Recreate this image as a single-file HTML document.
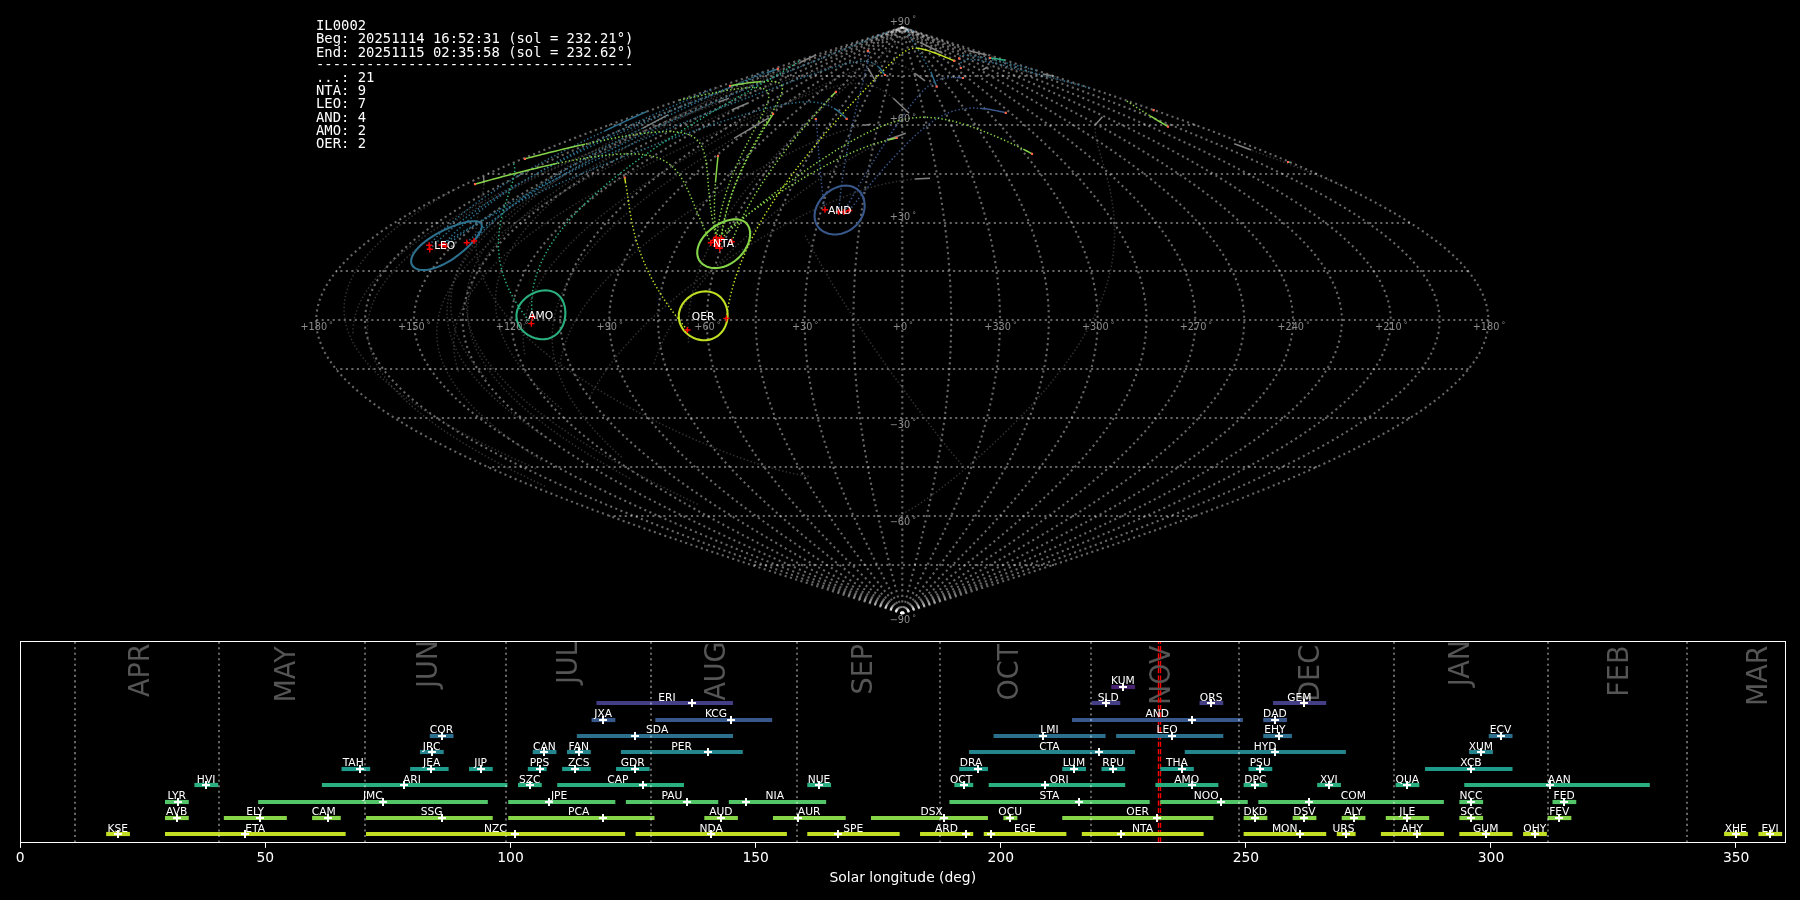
<!DOCTYPE html>
<html><head><meta charset="utf-8"><title>IL0002 radiants</title>
<style>html,body{margin:0;padding:0;background:#000;}svg{display:block;will-change:transform;}</style></head>
<body><svg width="1800" height="900" viewBox="0 0 1800 900">
<rect width="1800" height="900" fill="#000"/>
<g fill="none" stroke="#ffffff" stroke-opacity="0.4" stroke-width="2.083" stroke-dasharray="2.083 3.437">
<path d="M902.3 613.48 L922.76 606.97 L943.19 600.46 L963.57 593.95 L983.88 587.43 L1004.09 580.92 L1024.17 574.41 L1044.11 567.89 L1063.87 561.38 L1083.44 554.87 L1102.78 548.36 L1121.88 541.84 L1140.72 535.33 L1159.26 528.82 L1177.49 522.3 L1195.38 515.79 L1212.92 509.28 L1230.08 502.76 L1246.84 496.25 L1263.18 489.74 L1279.08 483.22 L1294.52 476.71 L1309.49 470.2 L1323.96 463.69 L1337.91 457.17 L1351.33 450.66 L1364.21 444.15 L1376.52 437.63 L1388.26 431.12 L1399.4 424.61 L1409.94 418.09 L1419.86 411.58 L1429.15 405.07 L1437.79 398.56 L1445.79 392.04 L1453.12 385.53 L1459.78 379.02 L1465.76 372.5 L1471.06 365.99 L1475.66 359.48 L1479.56 352.96 L1482.77 346.45 L1485.26 339.94 L1487.04 333.43 L1488.11 326.91 L1488.47 320.4 L1488.11 313.89 L1487.04 307.37 L1485.26 300.86 L1482.77 294.35 L1479.56 287.83 L1475.66 281.32 L1471.06 274.81 L1465.76 268.3 L1459.78 261.78 L1453.12 255.27 L1445.79 248.76 L1437.79 242.24 L1429.15 235.73 L1419.86 229.22 L1409.94 222.7 L1399.4 216.19 L1388.26 209.68 L1376.52 203.17 L1364.21 196.65 L1351.33 190.14 L1337.91 183.63 L1323.96 177.11 L1309.49 170.6 L1294.52 164.09 L1279.08 157.57 L1263.18 151.06 L1246.84 144.55 L1230.08 138.04 L1212.92 131.52 L1195.38 125.01 L1177.49 118.5 L1159.26 111.98 L1140.72 105.47 L1121.88 98.96 L1102.78 92.44 L1083.44 85.93 L1063.87 79.42 L1044.11 72.91 L1024.17 66.39 L1004.09 59.88 L983.88 53.37 L963.57 46.85 L943.19 40.34 L922.76 33.83 L902.3 27.31"/>
<path d="M902.3 613.48 L921.05 606.97 L939.78 600.46 L958.47 593.95 L977.08 587.43 L995.61 580.92 L1014.02 574.41 L1032.29 567.89 L1050.41 561.38 L1068.34 554.87 L1086.08 548.36 L1103.58 541.84 L1120.85 535.33 L1137.85 528.82 L1154.56 522.3 L1170.96 515.79 L1187.04 509.28 L1202.77 502.76 L1218.13 496.25 L1233.11 489.74 L1247.68 483.22 L1261.84 476.71 L1275.56 470.2 L1288.82 463.69 L1301.61 457.17 L1313.91 450.66 L1325.72 444.15 L1337 437.63 L1347.76 431.12 L1357.98 424.61 L1367.63 418.09 L1376.73 411.58 L1385.24 405.07 L1393.17 398.56 L1400.5 392.04 L1407.22 385.53 L1413.32 379.02 L1418.81 372.5 L1423.66 365.99 L1427.88 359.48 L1431.46 352.96 L1434.39 346.45 L1436.68 339.94 L1438.31 333.43 L1439.3 326.91 L1439.62 320.4 L1439.3 313.89 L1438.31 307.37 L1436.68 300.86 L1434.39 294.35 L1431.46 287.83 L1427.88 281.32 L1423.66 274.81 L1418.81 268.3 L1413.32 261.78 L1407.22 255.27 L1400.5 248.76 L1393.17 242.24 L1385.24 235.73 L1376.73 229.22 L1367.63 222.7 L1357.98 216.19 L1347.76 209.68 L1337 203.17 L1325.72 196.65 L1313.91 190.14 L1301.61 183.63 L1288.82 177.11 L1275.56 170.6 L1261.84 164.09 L1247.68 157.57 L1233.11 151.06 L1218.13 144.55 L1202.77 138.04 L1187.04 131.52 L1170.96 125.01 L1154.56 118.5 L1137.85 111.98 L1120.85 105.47 L1103.58 98.96 L1086.08 92.44 L1068.34 85.93 L1050.41 79.42 L1032.29 72.91 L1014.02 66.39 L995.61 59.88 L977.08 53.37 L958.47 46.85 L939.78 40.34 L921.05 33.83 L902.3 27.31"/>
<path d="M902.3 613.48 L919.35 606.97 L936.37 600.46 L953.36 593.95 L970.28 587.43 L987.12 580.92 L1003.86 574.41 L1020.47 567.89 L1036.94 561.38 L1053.25 554.87 L1069.37 548.36 L1085.29 541.84 L1100.98 535.33 L1116.43 528.82 L1131.63 522.3 L1146.54 515.79 L1161.15 509.28 L1175.45 502.76 L1189.42 496.25 L1203.04 489.74 L1216.29 483.22 L1229.15 476.71 L1241.62 470.2 L1253.68 463.69 L1265.31 457.17 L1276.49 450.66 L1287.22 444.15 L1297.48 437.63 L1307.26 431.12 L1316.55 424.61 L1325.33 418.09 L1333.6 411.58 L1341.34 405.07 L1348.54 398.56 L1355.21 392.04 L1361.32 385.53 L1366.87 379.02 L1371.85 372.5 L1376.27 365.99 L1380.1 359.48 L1383.35 352.96 L1386.02 346.45 L1388.1 339.94 L1389.59 333.43 L1390.48 326.91 L1390.77 320.4 L1390.48 313.89 L1389.59 307.37 L1388.1 300.86 L1386.02 294.35 L1383.35 287.83 L1380.1 281.32 L1376.27 274.81 L1371.85 268.3 L1366.87 261.78 L1361.32 255.27 L1355.21 248.76 L1348.54 242.24 L1341.34 235.73 L1333.6 229.22 L1325.33 222.7 L1316.55 216.19 L1307.26 209.68 L1297.48 203.17 L1287.22 196.65 L1276.49 190.14 L1265.31 183.63 L1253.68 177.11 L1241.62 170.6 L1229.15 164.09 L1216.29 157.57 L1203.04 151.06 L1189.42 144.55 L1175.45 138.04 L1161.15 131.52 L1146.54 125.01 L1131.63 118.5 L1116.43 111.98 L1100.98 105.47 L1085.29 98.96 L1069.37 92.44 L1053.25 85.93 L1036.94 79.42 L1020.47 72.91 L1003.86 66.39 L987.12 59.88 L970.28 53.37 L953.36 46.85 L936.37 40.34 L919.35 33.83 L902.3 27.31"/>
<path d="M902.3 613.48 L917.64 606.97 L932.97 600.46 L948.25 593.95 L963.48 587.43 L978.64 580.92 L993.7 574.41 L1008.66 567.89 L1023.48 561.38 L1038.15 554.87 L1052.66 548.36 L1066.99 541.84 L1081.11 535.33 L1095.02 528.82 L1108.69 522.3 L1122.11 515.79 L1135.27 509.28 L1148.14 502.76 L1160.71 496.25 L1172.96 489.74 L1184.89 483.22 L1196.47 476.71 L1207.69 470.2 L1218.54 463.69 L1229.01 457.17 L1239.07 450.66 L1248.73 444.15 L1257.97 437.63 L1266.77 431.12 L1275.13 424.61 L1283.03 418.09 L1290.47 411.58 L1297.43 405.07 L1303.92 398.56 L1309.92 392.04 L1315.41 385.53 L1320.41 379.02 L1324.9 372.5 L1328.87 365.99 L1332.32 359.48 L1335.25 352.96 L1337.65 346.45 L1339.52 339.94 L1340.86 333.43 L1341.66 326.91 L1341.93 320.4 L1341.66 313.89 L1340.86 307.37 L1339.52 300.86 L1337.65 294.35 L1335.25 287.83 L1332.32 281.32 L1328.87 274.81 L1324.9 268.3 L1320.41 261.78 L1315.41 255.27 L1309.92 248.76 L1303.92 242.24 L1297.43 235.73 L1290.47 229.22 L1283.03 222.7 L1275.13 216.19 L1266.77 209.68 L1257.97 203.17 L1248.73 196.65 L1239.07 190.14 L1229.01 183.63 L1218.54 177.11 L1207.69 170.6 L1196.47 164.09 L1184.89 157.57 L1172.96 151.06 L1160.71 144.55 L1148.14 138.04 L1135.27 131.52 L1122.11 125.01 L1108.69 118.5 L1095.02 111.98 L1081.11 105.47 L1066.99 98.96 L1052.66 92.44 L1038.15 85.93 L1023.48 79.42 L1008.66 72.91 L993.7 66.39 L978.64 59.88 L963.48 53.37 L948.25 46.85 L932.97 40.34 L917.64 33.83 L902.3 27.31"/>
<path d="M902.3 613.48 L915.94 606.97 L929.56 600.46 L943.15 593.95 L956.69 587.43 L970.16 580.92 L983.55 574.41 L996.84 567.89 L1010.01 561.38 L1023.06 554.87 L1035.95 548.36 L1048.69 541.84 L1061.24 535.33 L1073.61 528.82 L1085.76 522.3 L1097.69 515.79 L1109.38 509.28 L1120.82 502.76 L1131.99 496.25 L1142.89 489.74 L1153.49 483.22 L1163.78 476.71 L1173.76 470.2 L1183.4 463.69 L1192.71 457.17 L1201.65 450.66 L1210.24 444.15 L1218.45 437.63 L1226.27 431.12 L1233.7 424.61 L1240.73 418.09 L1247.34 411.58 L1253.53 405.07 L1259.3 398.56 L1264.62 392.04 L1269.51 385.53 L1273.95 379.02 L1277.94 372.5 L1281.47 365.99 L1284.54 359.48 L1287.14 352.96 L1289.28 346.45 L1290.94 339.94 L1292.13 333.43 L1292.84 326.91 L1293.08 320.4 L1292.84 313.89 L1292.13 307.37 L1290.94 300.86 L1289.28 294.35 L1287.14 287.83 L1284.54 281.32 L1281.47 274.81 L1277.94 268.3 L1273.95 261.78 L1269.51 255.27 L1264.62 248.76 L1259.3 242.24 L1253.53 235.73 L1247.34 229.22 L1240.73 222.7 L1233.7 216.19 L1226.27 209.68 L1218.45 203.17 L1210.24 196.65 L1201.65 190.14 L1192.71 183.63 L1183.4 177.11 L1173.76 170.6 L1163.78 164.09 L1153.49 157.57 L1142.89 151.06 L1131.99 144.55 L1120.82 138.04 L1109.38 131.52 L1097.69 125.01 L1085.76 118.5 L1073.61 111.98 L1061.24 105.47 L1048.69 98.96 L1035.95 92.44 L1023.06 85.93 L1010.01 79.42 L996.84 72.91 L983.55 66.39 L970.16 59.88 L956.69 53.37 L943.15 46.85 L929.56 40.34 L915.94 33.83 L902.3 27.31"/>
<path d="M902.3 613.48 L914.23 606.97 L926.15 600.46 L938.04 593.95 L949.89 587.43 L961.68 580.92 L973.39 574.41 L985.02 567.89 L996.55 561.38 L1007.96 554.87 L1019.25 548.36 L1030.39 541.84 L1041.38 535.33 L1052.19 528.82 L1062.83 522.3 L1073.27 515.79 L1083.5 509.28 L1093.51 502.76 L1103.28 496.25 L1112.81 489.74 L1122.09 483.22 L1131.1 476.71 L1139.83 470.2 L1148.27 463.69 L1156.41 457.17 L1164.24 450.66 L1171.75 444.15 L1178.93 437.63 L1185.77 431.12 L1192.28 424.61 L1198.42 418.09 L1204.21 411.58 L1209.63 405.07 L1214.67 398.56 L1219.33 392.04 L1223.61 385.53 L1227.5 379.02 L1230.99 372.5 L1234.08 365.99 L1236.76 359.48 L1239.04 352.96 L1240.9 346.45 L1242.36 339.94 L1243.4 333.43 L1244.02 326.91 L1244.23 320.4 L1244.02 313.89 L1243.4 307.37 L1242.36 300.86 L1240.9 294.35 L1239.04 287.83 L1236.76 281.32 L1234.08 274.81 L1230.99 268.3 L1227.5 261.78 L1223.61 255.27 L1219.33 248.76 L1214.67 242.24 L1209.63 235.73 L1204.21 229.22 L1198.42 222.7 L1192.28 216.19 L1185.77 209.68 L1178.93 203.17 L1171.75 196.65 L1164.24 190.14 L1156.41 183.63 L1148.27 177.11 L1139.83 170.6 L1131.1 164.09 L1122.09 157.57 L1112.81 151.06 L1103.28 144.55 L1093.51 138.04 L1083.5 131.52 L1073.27 125.01 L1062.83 118.5 L1052.19 111.98 L1041.38 105.47 L1030.39 98.96 L1019.25 92.44 L1007.96 85.93 L996.55 79.42 L985.02 72.91 L973.39 66.39 L961.68 59.88 L949.89 53.37 L938.04 46.85 L926.15 40.34 L914.23 33.83 L902.3 27.31"/>
<path d="M902.3 613.48 L912.53 606.97 L922.74 600.46 L932.94 593.95 L943.09 587.43 L953.19 580.92 L963.24 574.41 L973.2 567.89 L983.09 561.38 L992.87 554.87 L1002.54 548.36 L1012.09 541.84 L1021.51 535.33 L1030.78 528.82 L1039.9 522.3 L1048.84 515.79 L1057.61 509.28 L1066.19 502.76 L1074.57 496.25 L1082.74 489.74 L1090.69 483.22 L1098.41 476.71 L1105.89 470.2 L1113.13 463.69 L1120.1 457.17 L1126.82 450.66 L1133.25 444.15 L1139.41 437.63 L1145.28 431.12 L1150.85 424.61 L1156.12 418.09 L1161.08 411.58 L1165.72 405.07 L1170.05 398.56 L1174.04 392.04 L1177.71 385.53 L1181.04 379.02 L1184.03 372.5 L1186.68 365.99 L1188.98 359.48 L1190.93 352.96 L1192.53 346.45 L1193.78 339.94 L1194.67 333.43 L1195.21 326.91 L1195.38 320.4 L1195.21 313.89 L1194.67 307.37 L1193.78 300.86 L1192.53 294.35 L1190.93 287.83 L1188.98 281.32 L1186.68 274.81 L1184.03 268.3 L1181.04 261.78 L1177.71 255.27 L1174.04 248.76 L1170.05 242.24 L1165.72 235.73 L1161.08 229.22 L1156.12 222.7 L1150.85 216.19 L1145.28 209.68 L1139.41 203.17 L1133.25 196.65 L1126.82 190.14 L1120.1 183.63 L1113.13 177.11 L1105.89 170.6 L1098.41 164.09 L1090.69 157.57 L1082.74 151.06 L1074.57 144.55 L1066.19 138.04 L1057.61 131.52 L1048.84 125.01 L1039.9 118.5 L1030.78 111.98 L1021.51 105.47 L1012.09 98.96 L1002.54 92.44 L992.87 85.93 L983.09 79.42 L973.2 72.91 L963.24 66.39 L953.19 59.88 L943.09 53.37 L932.94 46.85 L922.74 40.34 L912.53 33.83 L902.3 27.31"/>
<path d="M902.3 613.48 L910.82 606.97 L919.34 600.46 L927.83 593.95 L936.29 587.43 L944.71 580.92 L953.08 574.41 L961.39 567.89 L969.62 561.38 L977.77 554.87 L985.83 548.36 L993.79 541.84 L1001.64 535.33 L1009.37 528.82 L1016.96 522.3 L1024.42 515.79 L1031.73 509.28 L1038.88 502.76 L1045.86 496.25 L1052.67 489.74 L1059.29 483.22 L1065.73 476.71 L1071.96 470.2 L1077.99 463.69 L1083.8 457.17 L1089.4 450.66 L1094.76 444.15 L1099.89 437.63 L1104.78 431.12 L1109.43 424.61 L1113.82 418.09 L1117.95 411.58 L1121.82 405.07 L1125.42 398.56 L1128.75 392.04 L1131.81 385.53 L1134.58 379.02 L1137.08 372.5 L1139.28 365.99 L1141.2 359.48 L1142.83 352.96 L1144.16 346.45 L1145.2 339.94 L1145.94 333.43 L1146.39 326.91 L1146.54 320.4 L1146.39 313.89 L1145.94 307.37 L1145.2 300.86 L1144.16 294.35 L1142.83 287.83 L1141.2 281.32 L1139.28 274.81 L1137.08 268.3 L1134.58 261.78 L1131.81 255.27 L1128.75 248.76 L1125.42 242.24 L1121.82 235.73 L1117.95 229.22 L1113.82 222.7 L1109.43 216.19 L1104.78 209.68 L1099.89 203.17 L1094.76 196.65 L1089.4 190.14 L1083.8 183.63 L1077.99 177.11 L1071.96 170.6 L1065.73 164.09 L1059.29 157.57 L1052.67 151.06 L1045.86 144.55 L1038.88 138.04 L1031.73 131.52 L1024.42 125.01 L1016.96 118.5 L1009.37 111.98 L1001.64 105.47 L993.79 98.96 L985.83 92.44 L977.77 85.93 L969.62 79.42 L961.39 72.91 L953.08 66.39 L944.71 59.88 L936.29 53.37 L927.83 46.85 L919.34 40.34 L910.82 33.83 L902.3 27.31"/>
<path d="M902.3 613.48 L909.12 606.97 L915.93 600.46 L922.72 593.95 L929.49 587.43 L936.23 580.92 L942.92 574.41 L949.57 567.89 L956.16 561.38 L962.68 554.87 L969.13 548.36 L975.49 541.84 L981.77 535.33 L987.95 528.82 L994.03 522.3 L1000 515.79 L1005.84 509.28 L1011.56 502.76 L1017.15 496.25 L1022.59 489.74 L1027.89 483.22 L1033.04 476.71 L1038.03 470.2 L1042.85 463.69 L1047.5 457.17 L1051.98 450.66 L1056.27 444.15 L1060.37 437.63 L1064.29 431.12 L1068 424.61 L1071.51 418.09 L1074.82 411.58 L1077.92 405.07 L1080.8 398.56 L1083.46 392.04 L1085.91 385.53 L1088.13 379.02 L1090.12 372.5 L1091.89 365.99 L1093.42 359.48 L1094.72 352.96 L1095.79 346.45 L1096.62 339.94 L1097.21 333.43 L1097.57 326.91 L1097.69 320.4 L1097.57 313.89 L1097.21 307.37 L1096.62 300.86 L1095.79 294.35 L1094.72 287.83 L1093.42 281.32 L1091.89 274.81 L1090.12 268.3 L1088.13 261.78 L1085.91 255.27 L1083.46 248.76 L1080.8 242.24 L1077.92 235.73 L1074.82 229.22 L1071.51 222.7 L1068 216.19 L1064.29 209.68 L1060.37 203.17 L1056.27 196.65 L1051.98 190.14 L1047.5 183.63 L1042.85 177.11 L1038.03 170.6 L1033.04 164.09 L1027.89 157.57 L1022.59 151.06 L1017.15 144.55 L1011.56 138.04 L1005.84 131.52 L1000 125.01 L994.03 118.5 L987.95 111.98 L981.77 105.47 L975.49 98.96 L969.13 92.44 L962.68 85.93 L956.16 79.42 L949.57 72.91 L942.92 66.39 L936.23 59.88 L929.49 53.37 L922.72 46.85 L915.93 40.34 L909.12 33.83 L902.3 27.31"/>
<path d="M902.3 613.48 L907.41 606.97 L912.52 600.46 L917.62 593.95 L922.69 587.43 L927.75 580.92 L932.77 574.41 L937.75 567.89 L942.69 561.38 L947.58 554.87 L952.42 548.36 L957.2 541.84 L961.9 535.33 L966.54 528.82 L971.1 522.3 L975.57 515.79 L979.96 509.28 L984.25 502.76 L988.44 496.25 L992.52 489.74 L996.5 483.22 L1000.36 476.71 L1004.1 470.2 L1007.71 463.69 L1011.2 457.17 L1014.56 450.66 L1017.78 444.15 L1020.86 437.63 L1023.79 431.12 L1026.58 424.61 L1029.21 418.09 L1031.69 411.58 L1034.01 405.07 L1036.17 398.56 L1038.17 392.04 L1040 385.53 L1041.67 379.02 L1043.17 372.5 L1044.49 365.99 L1045.64 359.48 L1046.62 352.96 L1047.42 346.45 L1048.04 339.94 L1048.49 333.43 L1048.75 326.91 L1048.84 320.4 L1048.75 313.89 L1048.49 307.37 L1048.04 300.86 L1047.42 294.35 L1046.62 287.83 L1045.64 281.32 L1044.49 274.81 L1043.17 268.3 L1041.67 261.78 L1040 255.27 L1038.17 248.76 L1036.17 242.24 L1034.01 235.73 L1031.69 229.22 L1029.21 222.7 L1026.58 216.19 L1023.79 209.68 L1020.86 203.17 L1017.78 196.65 L1014.56 190.14 L1011.2 183.63 L1007.71 177.11 L1004.1 170.6 L1000.36 164.09 L996.5 157.57 L992.52 151.06 L988.44 144.55 L984.25 138.04 L979.96 131.52 L975.57 125.01 L971.1 118.5 L966.54 111.98 L961.9 105.47 L957.2 98.96 L952.42 92.44 L947.58 85.93 L942.69 79.42 L937.75 72.91 L932.77 66.39 L927.75 59.88 L922.69 53.37 L917.62 46.85 L912.52 40.34 L907.41 33.83 L902.3 27.31"/>
<path d="M902.3 613.48 L905.71 606.97 L909.11 600.46 L912.51 593.95 L915.9 587.43 L919.26 580.92 L922.61 574.41 L925.93 567.89 L929.23 561.38 L932.49 554.87 L935.71 548.36 L938.9 541.84 L942.04 535.33 L945.13 528.82 L948.17 522.3 L951.15 515.79 L954.07 509.28 L956.93 502.76 L959.72 496.25 L962.45 489.74 L965.1 483.22 L967.67 476.71 L970.16 470.2 L972.58 463.69 L974.9 457.17 L977.14 450.66 L979.28 444.15 L981.34 437.63 L983.29 431.12 L985.15 424.61 L986.91 418.09 L988.56 411.58 L990.11 405.07 L991.55 398.56 L992.88 392.04 L994.1 385.53 L995.21 379.02 L996.21 372.5 L997.09 365.99 L997.86 359.48 L998.51 352.96 L999.04 346.45 L999.46 339.94 L999.76 333.43 L999.94 326.91 L999.99 320.4 L999.94 313.89 L999.76 307.37 L999.46 300.86 L999.04 294.35 L998.51 287.83 L997.86 281.32 L997.09 274.81 L996.21 268.3 L995.21 261.78 L994.1 255.27 L992.88 248.76 L991.55 242.24 L990.11 235.73 L988.56 229.22 L986.91 222.7 L985.15 216.19 L983.29 209.68 L981.34 203.17 L979.28 196.65 L977.14 190.14 L974.9 183.63 L972.58 177.11 L970.16 170.6 L967.67 164.09 L965.1 157.57 L962.45 151.06 L959.72 144.55 L956.93 138.04 L954.07 131.52 L951.15 125.01 L948.17 118.5 L945.13 111.98 L942.04 105.47 L938.9 98.96 L935.71 92.44 L932.49 85.93 L929.23 79.42 L925.93 72.91 L922.61 66.39 L919.26 59.88 L915.9 53.37 L912.51 46.85 L909.11 40.34 L905.71 33.83 L902.3 27.31"/>
<path d="M902.3 613.48 L904 606.97 L905.71 600.46 L907.41 593.95 L909.1 587.43 L910.78 580.92 L912.46 574.41 L914.12 567.89 L915.76 561.38 L917.39 554.87 L919.01 548.36 L920.6 541.84 L922.17 535.33 L923.71 528.82 L925.23 522.3 L926.72 515.79 L928.19 509.28 L929.62 502.76 L931.01 496.25 L932.37 489.74 L933.7 483.22 L934.99 476.71 L936.23 470.2 L937.44 463.69 L938.6 457.17 L939.72 450.66 L940.79 444.15 L941.82 437.63 L942.8 431.12 L943.73 424.61 L944.6 418.09 L945.43 411.58 L946.2 405.07 L946.92 398.56 L947.59 392.04 L948.2 385.53 L948.76 379.02 L949.26 372.5 L949.7 365.99 L950.08 359.48 L950.41 352.96 L950.67 346.45 L950.88 339.94 L951.03 333.43 L951.12 326.91 L951.15 320.4 L951.12 313.89 L951.03 307.37 L950.88 300.86 L950.67 294.35 L950.41 287.83 L950.08 281.32 L949.7 274.81 L949.26 268.3 L948.76 261.78 L948.2 255.27 L947.59 248.76 L946.92 242.24 L946.2 235.73 L945.43 229.22 L944.6 222.7 L943.73 216.19 L942.8 209.68 L941.82 203.17 L940.79 196.65 L939.72 190.14 L938.6 183.63 L937.44 177.11 L936.23 170.6 L934.99 164.09 L933.7 157.57 L932.37 151.06 L931.01 144.55 L929.62 138.04 L928.19 131.52 L926.72 125.01 L925.23 118.5 L923.71 111.98 L922.17 105.47 L920.6 98.96 L919.01 92.44 L917.39 85.93 L915.76 79.42 L914.12 72.91 L912.46 66.39 L910.78 59.88 L909.1 53.37 L907.41 46.85 L905.71 40.34 L904 33.83 L902.3 27.31"/>
<path d="M902.3 613.48 L902.3 606.97 L902.3 600.46 L902.3 593.95 L902.3 587.43 L902.3 580.92 L902.3 574.41 L902.3 567.89 L902.3 561.38 L902.3 554.87 L902.3 548.36 L902.3 541.84 L902.3 535.33 L902.3 528.82 L902.3 522.3 L902.3 515.79 L902.3 509.28 L902.3 502.76 L902.3 496.25 L902.3 489.74 L902.3 483.22 L902.3 476.71 L902.3 470.2 L902.3 463.69 L902.3 457.17 L902.3 450.66 L902.3 444.15 L902.3 437.63 L902.3 431.12 L902.3 424.61 L902.3 418.09 L902.3 411.58 L902.3 405.07 L902.3 398.56 L902.3 392.04 L902.3 385.53 L902.3 379.02 L902.3 372.5 L902.3 365.99 L902.3 359.48 L902.3 352.96 L902.3 346.45 L902.3 339.94 L902.3 333.43 L902.3 326.91 L902.3 320.4 L902.3 313.89 L902.3 307.37 L902.3 300.86 L902.3 294.35 L902.3 287.83 L902.3 281.32 L902.3 274.81 L902.3 268.3 L902.3 261.78 L902.3 255.27 L902.3 248.76 L902.3 242.24 L902.3 235.73 L902.3 229.22 L902.3 222.7 L902.3 216.19 L902.3 209.68 L902.3 203.17 L902.3 196.65 L902.3 190.14 L902.3 183.63 L902.3 177.11 L902.3 170.6 L902.3 164.09 L902.3 157.57 L902.3 151.06 L902.3 144.55 L902.3 138.04 L902.3 131.52 L902.3 125.01 L902.3 118.5 L902.3 111.98 L902.3 105.47 L902.3 98.96 L902.3 92.44 L902.3 85.93 L902.3 79.42 L902.3 72.91 L902.3 66.39 L902.3 59.88 L902.3 53.37 L902.3 46.85 L902.3 40.34 L902.3 33.83 L902.3 27.31"/>
<path d="M902.3 613.48 L900.6 606.97 L898.89 600.46 L897.19 593.95 L895.5 587.43 L893.82 580.92 L892.14 574.41 L890.48 567.89 L888.84 561.38 L887.21 554.87 L885.59 548.36 L884 541.84 L882.43 535.33 L880.89 528.82 L879.37 522.3 L877.88 515.79 L876.41 509.28 L874.98 502.76 L873.59 496.25 L872.23 489.74 L870.9 483.22 L869.61 476.71 L868.37 470.2 L867.16 463.69 L866 457.17 L864.88 450.66 L863.81 444.15 L862.78 437.63 L861.8 431.12 L860.87 424.61 L860 418.09 L859.17 411.58 L858.4 405.07 L857.68 398.56 L857.01 392.04 L856.4 385.53 L855.84 379.02 L855.34 372.5 L854.9 365.99 L854.52 359.48 L854.19 352.96 L853.93 346.45 L853.72 339.94 L853.57 333.43 L853.48 326.91 L853.45 320.4 L853.48 313.89 L853.57 307.37 L853.72 300.86 L853.93 294.35 L854.19 287.83 L854.52 281.32 L854.9 274.81 L855.34 268.3 L855.84 261.78 L856.4 255.27 L857.01 248.76 L857.68 242.24 L858.4 235.73 L859.17 229.22 L860 222.7 L860.87 216.19 L861.8 209.68 L862.78 203.17 L863.81 196.65 L864.88 190.14 L866 183.63 L867.16 177.11 L868.37 170.6 L869.61 164.09 L870.9 157.57 L872.23 151.06 L873.59 144.55 L874.98 138.04 L876.41 131.52 L877.88 125.01 L879.37 118.5 L880.89 111.98 L882.43 105.47 L884 98.96 L885.59 92.44 L887.21 85.93 L888.84 79.42 L890.48 72.91 L892.14 66.39 L893.82 59.88 L895.5 53.37 L897.19 46.85 L898.89 40.34 L900.6 33.83 L902.3 27.31"/>
<path d="M902.3 613.48 L898.89 606.97 L895.49 600.46 L892.09 593.95 L888.7 587.43 L885.34 580.92 L881.99 574.41 L878.67 567.89 L875.37 561.38 L872.11 554.87 L868.89 548.36 L865.7 541.84 L862.56 535.33 L859.47 528.82 L856.43 522.3 L853.45 515.79 L850.53 509.28 L847.67 502.76 L844.88 496.25 L842.15 489.74 L839.5 483.22 L836.93 476.71 L834.44 470.2 L832.02 463.69 L829.7 457.17 L827.46 450.66 L825.32 444.15 L823.26 437.63 L821.31 431.12 L819.45 424.61 L817.69 418.09 L816.04 411.58 L814.49 405.07 L813.05 398.56 L811.72 392.04 L810.5 385.53 L809.39 379.02 L808.39 372.5 L807.51 365.99 L806.74 359.48 L806.09 352.96 L805.56 346.45 L805.14 339.94 L804.84 333.43 L804.66 326.91 L804.61 320.4 L804.66 313.89 L804.84 307.37 L805.14 300.86 L805.56 294.35 L806.09 287.83 L806.74 281.32 L807.51 274.81 L808.39 268.3 L809.39 261.78 L810.5 255.27 L811.72 248.76 L813.05 242.24 L814.49 235.73 L816.04 229.22 L817.69 222.7 L819.45 216.19 L821.31 209.68 L823.26 203.17 L825.32 196.65 L827.46 190.14 L829.7 183.63 L832.02 177.11 L834.44 170.6 L836.93 164.09 L839.5 157.57 L842.15 151.06 L844.88 144.55 L847.67 138.04 L850.53 131.52 L853.45 125.01 L856.43 118.5 L859.47 111.98 L862.56 105.47 L865.7 98.96 L868.89 92.44 L872.11 85.93 L875.37 79.42 L878.67 72.91 L881.99 66.39 L885.34 59.88 L888.7 53.37 L892.09 46.85 L895.49 40.34 L898.89 33.83 L902.3 27.31"/>
<path d="M902.3 613.48 L897.19 606.97 L892.08 600.46 L886.98 593.95 L881.91 587.43 L876.85 580.92 L871.83 574.41 L866.85 567.89 L861.91 561.38 L857.02 554.87 L852.18 548.36 L847.4 541.84 L842.7 535.33 L838.06 528.82 L833.5 522.3 L829.03 515.79 L824.64 509.28 L820.35 502.76 L816.16 496.25 L812.08 489.74 L808.1 483.22 L804.24 476.71 L800.5 470.2 L796.89 463.69 L793.4 457.17 L790.04 450.66 L786.82 444.15 L783.74 437.63 L780.81 431.12 L778.02 424.61 L775.39 418.09 L772.91 411.58 L770.59 405.07 L768.43 398.56 L766.43 392.04 L764.6 385.53 L762.93 379.02 L761.43 372.5 L760.11 365.99 L758.96 359.48 L757.98 352.96 L757.18 346.45 L756.56 339.94 L756.11 333.43 L755.85 326.91 L755.76 320.4 L755.85 313.89 L756.11 307.37 L756.56 300.86 L757.18 294.35 L757.98 287.83 L758.96 281.32 L760.11 274.81 L761.43 268.3 L762.93 261.78 L764.6 255.27 L766.43 248.76 L768.43 242.24 L770.59 235.73 L772.91 229.22 L775.39 222.7 L778.02 216.19 L780.81 209.68 L783.74 203.17 L786.82 196.65 L790.04 190.14 L793.4 183.63 L796.89 177.11 L800.5 170.6 L804.24 164.09 L808.1 157.57 L812.08 151.06 L816.16 144.55 L820.35 138.04 L824.64 131.52 L829.03 125.01 L833.5 118.5 L838.06 111.98 L842.7 105.47 L847.4 98.96 L852.18 92.44 L857.02 85.93 L861.91 79.42 L866.85 72.91 L871.83 66.39 L876.85 59.88 L881.91 53.37 L886.98 46.85 L892.08 40.34 L897.19 33.83 L902.3 27.31"/>
<path d="M902.3 613.48 L895.48 606.97 L888.67 600.46 L881.88 593.95 L875.11 587.43 L868.37 580.92 L861.68 574.41 L855.03 567.89 L848.44 561.38 L841.92 554.87 L835.47 548.36 L829.11 541.84 L822.83 535.33 L816.65 528.82 L810.57 522.3 L804.6 515.79 L798.76 509.28 L793.04 502.76 L787.45 496.25 L782.01 489.74 L776.71 483.22 L771.56 476.71 L766.57 470.2 L761.75 463.69 L757.1 457.17 L752.62 450.66 L748.33 444.15 L744.23 437.63 L740.31 431.12 L736.6 424.61 L733.09 418.09 L729.78 411.58 L726.68 405.07 L723.8 398.56 L721.14 392.04 L718.69 385.53 L716.47 379.02 L714.48 372.5 L712.71 365.99 L711.18 359.48 L709.88 352.96 L708.81 346.45 L707.98 339.94 L707.39 333.43 L707.03 326.91 L706.91 320.4 L707.03 313.89 L707.39 307.37 L707.98 300.86 L708.81 294.35 L709.88 287.83 L711.18 281.32 L712.71 274.81 L714.48 268.3 L716.47 261.78 L718.69 255.27 L721.14 248.76 L723.8 242.24 L726.68 235.73 L729.78 229.22 L733.09 222.7 L736.6 216.19 L740.31 209.68 L744.23 203.17 L748.33 196.65 L752.62 190.14 L757.1 183.63 L761.75 177.11 L766.57 170.6 L771.56 164.09 L776.71 157.57 L782.01 151.06 L787.45 144.55 L793.04 138.04 L798.76 131.52 L804.6 125.01 L810.57 118.5 L816.65 111.98 L822.83 105.47 L829.11 98.96 L835.47 92.44 L841.92 85.93 L848.44 79.42 L855.03 72.91 L861.68 66.39 L868.37 59.88 L875.11 53.37 L881.88 46.85 L888.67 40.34 L895.48 33.83 L902.3 27.31"/>
<path d="M902.3 613.48 L893.78 606.97 L885.26 600.46 L876.77 593.95 L868.31 587.43 L859.89 580.92 L851.52 574.41 L843.21 567.89 L834.98 561.38 L826.83 554.87 L818.77 548.36 L810.81 541.84 L802.96 535.33 L795.23 528.82 L787.64 522.3 L780.18 515.79 L772.87 509.28 L765.72 502.76 L758.74 496.25 L751.93 489.74 L745.31 483.22 L738.87 476.71 L732.64 470.2 L726.61 463.69 L720.8 457.17 L715.2 450.66 L709.84 444.15 L704.71 437.63 L699.82 431.12 L695.17 424.61 L690.78 418.09 L686.65 411.58 L682.78 405.07 L679.18 398.56 L675.85 392.04 L672.79 385.53 L670.02 379.02 L667.52 372.5 L665.32 365.99 L663.4 359.48 L661.77 352.96 L660.44 346.45 L659.4 339.94 L658.66 333.43 L658.21 326.91 L658.06 320.4 L658.21 313.89 L658.66 307.37 L659.4 300.86 L660.44 294.35 L661.77 287.83 L663.4 281.32 L665.32 274.81 L667.52 268.3 L670.02 261.78 L672.79 255.27 L675.85 248.76 L679.18 242.24 L682.78 235.73 L686.65 229.22 L690.78 222.7 L695.17 216.19 L699.82 209.68 L704.71 203.17 L709.84 196.65 L715.2 190.14 L720.8 183.63 L726.61 177.11 L732.64 170.6 L738.87 164.09 L745.31 157.57 L751.93 151.06 L758.74 144.55 L765.72 138.04 L772.87 131.52 L780.18 125.01 L787.64 118.5 L795.23 111.98 L802.96 105.47 L810.81 98.96 L818.77 92.44 L826.83 85.93 L834.98 79.42 L843.21 72.91 L851.52 66.39 L859.89 59.88 L868.31 53.37 L876.77 46.85 L885.26 40.34 L893.78 33.83 L902.3 27.31"/>
<path d="M902.3 613.48 L892.07 606.97 L881.86 600.46 L871.66 593.95 L861.51 587.43 L851.41 580.92 L841.36 574.41 L831.4 567.89 L821.51 561.38 L811.73 554.87 L802.06 548.36 L792.51 541.84 L783.09 535.33 L773.82 528.82 L764.7 522.3 L755.76 515.79 L746.99 509.28 L738.41 502.76 L730.03 496.25 L721.86 489.74 L713.91 483.22 L706.19 476.71 L698.71 470.2 L691.47 463.69 L684.5 457.17 L677.78 450.66 L671.35 444.15 L665.19 437.63 L659.32 431.12 L653.75 424.61 L648.48 418.09 L643.52 411.58 L638.88 405.07 L634.55 398.56 L630.56 392.04 L626.89 385.53 L623.56 379.02 L620.57 372.5 L617.92 365.99 L615.62 359.48 L613.67 352.96 L612.07 346.45 L610.82 339.94 L609.93 333.43 L609.39 326.91 L609.21 320.4 L609.39 313.89 L609.93 307.37 L610.82 300.86 L612.07 294.35 L613.67 287.83 L615.62 281.32 L617.92 274.81 L620.57 268.3 L623.56 261.78 L626.89 255.27 L630.56 248.76 L634.55 242.24 L638.88 235.73 L643.52 229.22 L648.48 222.7 L653.75 216.19 L659.32 209.68 L665.19 203.17 L671.35 196.65 L677.78 190.14 L684.5 183.63 L691.47 177.11 L698.71 170.6 L706.19 164.09 L713.91 157.57 L721.86 151.06 L730.03 144.55 L738.41 138.04 L746.99 131.52 L755.76 125.01 L764.7 118.5 L773.82 111.98 L783.09 105.47 L792.51 98.96 L802.06 92.44 L811.73 85.93 L821.51 79.42 L831.4 72.91 L841.36 66.39 L851.41 59.88 L861.51 53.37 L871.66 46.85 L881.86 40.34 L892.07 33.83 L902.3 27.31"/>
<path d="M902.3 613.48 L890.37 606.97 L878.45 600.46 L866.56 593.95 L854.71 587.43 L842.92 580.92 L831.21 574.41 L819.58 567.89 L808.05 561.38 L796.64 554.87 L785.35 548.36 L774.21 541.84 L763.22 535.33 L752.41 528.82 L741.77 522.3 L731.33 515.79 L721.1 509.28 L711.09 502.76 L701.32 496.25 L691.79 489.74 L682.51 483.22 L673.5 476.71 L664.77 470.2 L656.33 463.69 L648.19 457.17 L640.36 450.66 L632.85 444.15 L625.67 437.63 L618.83 431.12 L612.32 424.61 L606.18 418.09 L600.39 411.58 L594.97 405.07 L589.93 398.56 L585.27 392.04 L580.99 385.53 L577.1 379.02 L573.61 372.5 L570.52 365.99 L567.84 359.48 L565.56 352.96 L563.7 346.45 L562.24 339.94 L561.2 333.43 L560.58 326.91 L560.37 320.4 L560.58 313.89 L561.2 307.37 L562.24 300.86 L563.7 294.35 L565.56 287.83 L567.84 281.32 L570.52 274.81 L573.61 268.3 L577.1 261.78 L580.99 255.27 L585.27 248.76 L589.93 242.24 L594.97 235.73 L600.39 229.22 L606.18 222.7 L612.32 216.19 L618.83 209.68 L625.67 203.17 L632.85 196.65 L640.36 190.14 L648.19 183.63 L656.33 177.11 L664.77 170.6 L673.5 164.09 L682.51 157.57 L691.79 151.06 L701.32 144.55 L711.09 138.04 L721.1 131.52 L731.33 125.01 L741.77 118.5 L752.41 111.98 L763.22 105.47 L774.21 98.96 L785.35 92.44 L796.64 85.93 L808.05 79.42 L819.58 72.91 L831.21 66.39 L842.92 59.88 L854.71 53.37 L866.56 46.85 L878.45 40.34 L890.37 33.83 L902.3 27.31"/>
<path d="M902.3 613.48 L888.66 606.97 L875.04 600.46 L861.45 593.95 L847.91 587.43 L834.44 580.92 L821.05 574.41 L807.76 567.89 L794.59 561.38 L781.54 554.87 L768.65 548.36 L755.91 541.84 L743.36 535.33 L730.99 528.82 L718.84 522.3 L706.91 515.79 L695.22 509.28 L683.78 502.76 L672.61 496.25 L661.71 489.74 L651.11 483.22 L640.82 476.71 L630.84 470.2 L621.2 463.69 L611.89 457.17 L602.95 450.66 L594.36 444.15 L586.15 437.63 L578.33 431.12 L570.9 424.61 L563.87 418.09 L557.26 411.58 L551.07 405.07 L545.3 398.56 L539.98 392.04 L535.09 385.53 L530.65 379.02 L526.66 372.5 L523.13 365.99 L520.06 359.48 L517.46 352.96 L515.32 346.45 L513.66 339.94 L512.47 333.43 L511.76 326.91 L511.52 320.4 L511.76 313.89 L512.47 307.37 L513.66 300.86 L515.32 294.35 L517.46 287.83 L520.06 281.32 L523.13 274.81 L526.66 268.3 L530.65 261.78 L535.09 255.27 L539.98 248.76 L545.3 242.24 L551.07 235.73 L557.26 229.22 L563.87 222.7 L570.9 216.19 L578.33 209.68 L586.15 203.17 L594.36 196.65 L602.95 190.14 L611.89 183.63 L621.2 177.11 L630.84 170.6 L640.82 164.09 L651.11 157.57 L661.71 151.06 L672.61 144.55 L683.78 138.04 L695.22 131.52 L706.91 125.01 L718.84 118.5 L730.99 111.98 L743.36 105.47 L755.91 98.96 L768.65 92.44 L781.54 85.93 L794.59 79.42 L807.76 72.91 L821.05 66.39 L834.44 59.88 L847.91 53.37 L861.45 46.85 L875.04 40.34 L888.66 33.83 L902.3 27.31"/>
<path d="M902.3 613.48 L886.96 606.97 L871.63 600.46 L856.35 593.95 L841.12 587.43 L825.96 580.92 L810.9 574.41 L795.94 567.89 L781.12 561.38 L766.45 554.87 L751.94 548.36 L737.61 541.84 L723.49 535.33 L709.58 528.82 L695.91 522.3 L682.49 515.79 L669.33 509.28 L656.46 502.76 L643.89 496.25 L631.64 489.74 L619.71 483.22 L608.13 476.71 L596.91 470.2 L586.06 463.69 L575.59 457.17 L565.53 450.66 L555.87 444.15 L546.63 437.63 L537.83 431.12 L529.47 424.61 L521.57 418.09 L514.13 411.58 L507.17 405.07 L500.68 398.56 L494.68 392.04 L489.19 385.53 L484.19 379.02 L479.7 372.5 L475.73 365.99 L472.28 359.48 L469.35 352.96 L466.95 346.45 L465.08 339.94 L463.74 333.43 L462.94 326.91 L462.67 320.4 L462.94 313.89 L463.74 307.37 L465.08 300.86 L466.95 294.35 L469.35 287.83 L472.28 281.32 L475.73 274.81 L479.7 268.3 L484.19 261.78 L489.19 255.27 L494.68 248.76 L500.68 242.24 L507.17 235.73 L514.13 229.22 L521.57 222.7 L529.47 216.19 L537.83 209.68 L546.63 203.17 L555.87 196.65 L565.53 190.14 L575.59 183.63 L586.06 177.11 L596.91 170.6 L608.13 164.09 L619.71 157.57 L631.64 151.06 L643.89 144.55 L656.46 138.04 L669.33 131.52 L682.49 125.01 L695.91 118.5 L709.58 111.98 L723.49 105.47 L737.61 98.96 L751.94 92.44 L766.45 85.93 L781.12 79.42 L795.94 72.91 L810.9 66.39 L825.96 59.88 L841.12 53.37 L856.35 46.85 L871.63 40.34 L886.96 33.83 L902.3 27.31"/>
<path d="M902.3 613.48 L885.25 606.97 L868.23 600.46 L851.24 593.95 L834.32 587.43 L817.48 580.92 L800.74 574.41 L784.13 567.89 L767.66 561.38 L751.35 554.87 L735.23 548.36 L719.31 541.84 L703.62 535.33 L688.17 528.82 L672.97 522.3 L658.06 515.79 L643.45 509.28 L629.15 502.76 L615.18 496.25 L601.56 489.74 L588.31 483.22 L575.45 476.71 L562.98 470.2 L550.92 463.69 L539.29 457.17 L528.11 450.66 L517.38 444.15 L507.12 437.63 L497.34 431.12 L488.05 424.61 L479.27 418.09 L471 411.58 L463.26 405.07 L456.06 398.56 L449.39 392.04 L443.28 385.53 L437.73 379.02 L432.75 372.5 L428.33 365.99 L424.5 359.48 L421.25 352.96 L418.58 346.45 L416.5 339.94 L415.01 333.43 L414.12 326.91 L413.82 320.4 L414.12 313.89 L415.01 307.37 L416.5 300.86 L418.58 294.35 L421.25 287.83 L424.5 281.32 L428.33 274.81 L432.75 268.3 L437.73 261.78 L443.28 255.27 L449.39 248.76 L456.06 242.24 L463.26 235.73 L471 229.22 L479.27 222.7 L488.05 216.19 L497.34 209.68 L507.12 203.17 L517.38 196.65 L528.11 190.14 L539.29 183.63 L550.92 177.11 L562.98 170.6 L575.45 164.09 L588.31 157.57 L601.56 151.06 L615.18 144.55 L629.15 138.04 L643.45 131.52 L658.06 125.01 L672.97 118.5 L688.17 111.98 L703.62 105.47 L719.31 98.96 L735.23 92.44 L751.35 85.93 L767.66 79.42 L784.13 72.91 L800.74 66.39 L817.48 59.88 L834.32 53.37 L851.24 46.85 L868.23 40.34 L885.25 33.83 L902.3 27.31"/>
<path d="M902.3 613.48 L883.55 606.97 L864.82 600.46 L846.13 593.95 L827.52 587.43 L808.99 580.92 L790.58 574.41 L772.31 567.89 L754.19 561.38 L736.26 554.87 L718.52 548.36 L701.02 541.84 L683.75 535.33 L666.75 528.82 L650.04 522.3 L633.64 515.79 L617.56 509.28 L601.83 502.76 L586.47 496.25 L571.49 489.74 L556.92 483.22 L542.76 476.71 L529.04 470.2 L515.78 463.69 L502.99 457.17 L490.69 450.66 L478.88 444.15 L467.6 437.63 L456.84 431.12 L446.62 424.61 L436.97 418.09 L427.87 411.58 L419.36 405.07 L411.43 398.56 L404.1 392.04 L397.38 385.53 L391.28 379.02 L385.79 372.5 L380.94 365.99 L376.72 359.48 L373.14 352.96 L370.21 346.45 L367.92 339.94 L366.29 333.43 L365.3 326.91 L364.98 320.4 L365.3 313.89 L366.29 307.37 L367.92 300.86 L370.21 294.35 L373.14 287.83 L376.72 281.32 L380.94 274.81 L385.79 268.3 L391.28 261.78 L397.38 255.27 L404.1 248.76 L411.43 242.24 L419.36 235.73 L427.87 229.22 L436.97 222.7 L446.62 216.19 L456.84 209.68 L467.6 203.17 L478.88 196.65 L490.69 190.14 L502.99 183.63 L515.78 177.11 L529.04 170.6 L542.76 164.09 L556.92 157.57 L571.49 151.06 L586.47 144.55 L601.83 138.04 L617.56 131.52 L633.64 125.01 L650.04 118.5 L666.75 111.98 L683.75 105.47 L701.02 98.96 L718.52 92.44 L736.26 85.93 L754.19 79.42 L772.31 72.91 L790.58 66.39 L808.99 59.88 L827.52 53.37 L846.13 46.85 L864.82 40.34 L883.55 33.83 L902.3 27.31"/>
<path d="M902.3 613.48 L881.84 606.97 L861.41 600.46 L841.03 593.95 L820.72 587.43 L800.51 580.92 L780.43 574.41 L760.49 567.89 L740.73 561.38 L721.16 554.87 L701.82 548.36 L682.72 541.84 L663.88 535.33 L645.34 528.82 L627.11 522.3 L609.21 515.79 L591.68 509.28 L574.52 502.76 L557.76 496.25 L541.42 489.74 L525.52 483.22 L510.08 476.71 L495.11 470.2 L480.64 463.69 L466.69 457.17 L453.27 450.66 L440.39 444.15 L428.08 437.63 L416.34 431.12 L405.2 424.61 L394.66 418.09 L384.74 411.58 L375.45 405.07 L366.81 398.56 L358.81 392.04 L351.48 385.53 L344.82 379.02 L338.84 372.5 L333.54 365.99 L328.94 359.48 L325.04 352.96 L321.83 346.45 L319.34 339.94 L317.56 333.43 L316.49 326.91 L316.13 320.4 L316.49 313.89 L317.56 307.37 L319.34 300.86 L321.83 294.35 L325.04 287.83 L328.94 281.32 L333.54 274.81 L338.84 268.3 L344.82 261.78 L351.48 255.27 L358.81 248.76 L366.81 242.24 L375.45 235.73 L384.74 229.22 L394.66 222.7 L405.2 216.19 L416.34 209.68 L428.08 203.17 L440.39 196.65 L453.27 190.14 L466.69 183.63 L480.64 177.11 L495.11 170.6 L510.08 164.09 L525.52 157.57 L541.42 151.06 L557.76 144.55 L574.52 138.04 L591.68 131.52 L609.21 125.01 L627.11 118.5 L645.34 111.98 L663.88 105.47 L682.72 98.96 L701.82 92.44 L721.16 85.93 L740.73 79.42 L760.49 72.91 L780.43 66.39 L800.51 59.88 L820.72 53.37 L841.03 46.85 L861.41 40.34 L881.84 33.83 L902.3 27.31"/>
<path d="M1054.01 565 L750.59 565"/>
<path d="M1195.38 516 L609.21 516"/>
<path d="M1316.78 467 L487.82 467"/>
<path d="M1409.94 418 L394.66 418"/>
<path d="M1468.5 369 L336.1 369"/>
<path d="M1488.47 320 L316.13 320"/>
<path d="M1468.5 271 L336.1 271"/>
<path d="M1409.94 223 L394.66 223"/>
<path d="M1316.78 174 L487.82 174"/>
<path d="M1195.38 125 L609.21 125"/>
<path d="M1054.01 76 L750.59 76"/>
</g>
<g fill="none" stroke-width="1.5" stroke-dasharray="1.389 2.292">
<path stroke="#808080" stroke-opacity="0.4" d="M697.65 504.34 L694.53 502.84 L691.43 501.33 L688.33 499.83 L685.24 498.32 L682.16 496.8 L679.09 495.29 L676.04 493.77 L672.99 492.25 L669.95 490.73 L666.93 489.21 L663.92 487.68 L660.92 486.15 L657.94 484.62 L654.96 483.08 L652 481.55 L649.06 480.01 L646.13 478.47 L643.21 476.93 L640.31 475.39 L637.43 473.85 L634.56 472.3 L631.71 470.76 L628.87 469.21 L626.05 467.66 L623.25 466.11 L620.46 464.56 L617.7 463 L614.95 461.45 L612.21 459.89 L609.5 458.34 L606.81 456.78 L604.13 455.22 L601.48 453.66 L598.84 452.1 L596.22 450.54 L593.63 448.97 L591.05 447.41 L588.5 445.85 L585.96 444.28 L583.45 442.71 L580.96 441.15 L578.49 439.58 L576.04 438.01 L573.62 436.44 L571.21 434.87 L568.83 433.3 L566.48 431.73 L564.14 430.16 L561.83 428.58 L559.54 427.01 L557.28 425.43 L555.04 423.86 L552.82 422.28 L550.63 420.71 L548.46 419.13 L546.32 417.56 L544.2 415.98 L542.11 414.4 L540.04 412.82 L538 411.24 L535.98 409.66 L533.99 408.08 L532.03 406.5 L530.09 404.92 L528.17 403.34 L526.29 401.76 L524.43 400.18 L522.6 398.6 L520.79 397.02 L519.01 395.43 L517.26 393.85 L515.54 392.27 L513.84 390.68 L512.17 389.1 L510.53 387.51 L508.92 385.93 L507.34 384.35 L505.78 382.76 L504.25 381.17 L502.76 379.59 L501.29 378 L499.84 376.42 L498.43 374.83 L497.05 373.24 L495.69 371.66 L494.37 370.07 L493.07 368.48 L491.81 366.9 L490.57 365.31 L489.37 363.72 L488.19 362.13 L487.04 360.55 L485.93 358.96 L484.84 357.37 L483.78 355.78 L482.76 354.19 L481.76 352.6 L480.79 351.01 L479.86 349.43 L478.95 347.84 L478.08 346.25 L477.24 344.66 L476.43 343.07 L475.64 341.48 L474.89 339.89 L474.17 338.3 L473.49 336.71 L472.83 335.12 L472.2 333.53 L471.61 331.94 L471.05 330.35 L470.51 328.76 L470.01 327.17 L469.54 325.58 L469.1 323.99 L468.7 322.4 L468.32 320.81 L467.98 319.22 L467.67 317.63 L467.39 316.04 L467.14 314.45 L466.92 312.86 L466.73 311.27 L466.58 309.68 L466.46 308.09 L466.37 306.5 L466.31 304.91 L466.28 303.32 L466.28 301.73 L466.32 300.15 L466.39 298.56 L466.49 296.97 L466.62 295.38 L466.78 293.79 L466.97 292.2 L467.2 290.61 L467.45 289.02 L467.74 287.43 L468.06 285.84 L468.41 284.26 L468.8 282.67 L469.21 281.08 L469.65 279.49 L470.13 277.9 L470.64 276.32 L471.18 274.73 L471.75 273.14 L472.35 271.55 L472.98 269.97 L473.64 268.38 L474.34 266.79 L475.06 265.21 L475.82 263.62 L476.6 262.03 L477.42 260.45 L478.27 258.86 L479.14 257.28 L480.05 255.69 L480.99 254.11 L481.96 252.52 L482.95 250.94 L483.98 249.36 L485.04 247.77 L486.13 246.19 L487.25 244.61 L488.39 243.02 L489.57 241.44 L490.77 239.86 L492.01 238.28 L493.27 236.7 L494.57 235.12 L495.89 233.54 L497.24 231.96 L498.62 230.38 L500.02 228.8 L501.46 227.22 L502.92 225.64 L504.42 224.06 L505.94 222.49 L507.48 220.91 L509.06 219.33 L510.66 217.76 L512.29 216.18 L513.95 214.61 L515.63 213.03 L517.34 211.46 L519.07 209.89 L520.84 208.32 L522.63 206.74 L524.44 205.17 L526.28 203.6 L528.15 202.04 L530.04 200.47 L531.96 198.9 L533.9 197.33 L535.86 195.77 L537.85 194.2 L539.87 192.64 L541.91 191.07 L543.97 189.51 L546.06 187.95 L548.17 186.39 L550.3 184.83 L552.46 183.27 L554.63 181.71 L556.83 180.16 L559.06 178.6 L561.3 177.05 L563.57 175.5 L565.85 173.94 L568.16 172.39 L570.49 170.85 L572.84 169.3 L575.21 167.75 L577.59 166.21 L580 164.67 L582.43 163.12 L584.87 161.58 L587.33 160.05 L589.82 158.51 L592.31 156.98 L594.83 155.45 L597.36 153.91 L599.91 152.39 L602.47 150.86 L605.05 149.34 L607.65 147.82 L610.26 146.3 L612.88 144.78 L615.52 143.27 L618.16 141.76 L620.83 140.25 L623.5 138.74 L626.19 137.24 L628.88 135.74 L631.59 134.25 L634.3 132.75 L637.03 131.27 L639.76 129.78 L642.5 128.3"/>
<path stroke="#808080" stroke-opacity="0.4" d="M541.18 460.28 L538.7 458.7 L536.26 457.12 L533.83 455.54 L531.44 453.96 L529.07 452.37 L526.72 450.79 L524.4 449.21 L522.11 447.62 L519.85 446.04 L517.61 444.45 L515.39 442.87 L513.21 441.28 L511.05 439.69 L508.92 438.11 L506.82 436.52 L504.75 434.93 L502.7 433.34 L500.68 431.76 L498.69 430.17 L496.73 428.58 L494.8 426.99 L492.9 425.4 L491.03 423.81 L489.19 422.22 L487.37 420.62 L485.59 419.03 L483.83 417.44 L482.11 415.85 L480.42 414.26 L478.75 412.67 L477.12 411.07 L475.52 409.48 L473.95 407.89 L472.41 406.29 L470.9 404.7 L469.42 403.1 L467.97 401.51 L466.56 399.92 L465.18 398.32 L463.82 396.73 L462.5 395.13 L461.22 393.54 L459.96 391.94 L458.74 390.35 L457.55 388.75 L456.39 387.15 L455.26 385.56 L454.17 383.96 L453.11 382.37 L452.08 380.77 L451.08 379.17 L450.12 377.58 L449.19 375.98 L448.29 374.38 L447.43 372.78 L446.6 371.19 L445.8 369.59 L445.04 367.99 L444.31 366.4 L443.61 364.8 L442.95 363.2 L442.32 361.6 L441.72 360 L441.16 358.41 L440.63 356.81 L440.14 355.21 L439.68 353.61 L439.25 352.01 L438.86 350.41 L438.5 348.82 L438.18 347.22 L437.89 345.62 L437.63 344.02 L437.41 342.42 L437.22 340.82 L437.07 339.22 L436.95 337.62 L436.86 336.03 L436.81 334.43 L436.79 332.83 L436.81 331.23 L436.86 329.63 L436.94 328.03 L437.06 326.43 L437.22 324.83 L437.4 323.23 L437.63 321.64 L437.88 320.04 L438.17 318.44 L438.5 316.84 L438.86 315.24 L439.25 313.64 L439.67 312.04 L440.13 310.44 L440.63 308.84 L441.16 307.24 L441.72 305.65 L442.31 304.05 L442.94 302.45 L443.61 300.85 L444.3 299.25 L445.03 297.65 L445.8 296.05 L446.6 294.45 L447.43 292.86 L448.29 291.26 L449.19 289.66 L450.12 288.06 L451.08 286.46 L452.08 284.86 L453.11 283.27 L454.17 281.67 L455.27 280.07 L456.4 278.47 L457.56 276.87 L458.75 275.28 L459.98 273.68 L461.24 272.08 L462.53 270.48 L463.85 268.89 L465.21 267.29 L466.59 265.69 L468.01 264.09 L469.46 262.5 L470.95 260.9 L472.46 259.3 L474 257.71 L475.58 256.11 L477.19 254.52 L478.83 252.92 L480.5 251.32 L482.2 249.73 L483.93 248.13 L485.69 246.54 L487.48 244.94 L489.3 243.35 L491.15 241.75 L493.03 240.16 L494.94 238.56 L496.88 236.97 L498.85 235.38 L500.85 233.78 L502.88 232.19 L504.94 230.6 L507.02 229 L509.14 227.41 L511.28 225.82 L513.45 224.23 L515.65 222.63 L517.87 221.04 L520.13 219.45 L522.41 217.86 L524.72 216.27 L527.05 214.68 L529.41 213.09 L531.8 211.5 L534.22 209.91 L536.66 208.32 L539.13 206.73 L541.62 205.15 L544.14 203.56 L546.68 201.97 L549.25 200.38 L551.85 198.8 L554.47 197.21 L557.11 195.63 L559.78 194.04 L562.47 192.46 L565.18 190.87 L567.92 189.29 L570.69 187.71 L573.47 186.12 L576.28 184.54 L579.11 182.96 L581.96 181.38 L584.83 179.8 L587.73 178.22 L590.65 176.64 L593.59 175.06 L596.55 173.49 L599.53 171.91 L602.53 170.34 L605.55 168.76 L608.59 167.19 L611.65 165.61 L614.73 164.04 L617.82 162.47 L620.94 160.9 L624.07 159.33 L627.23 157.76 L630.39 156.2 L633.58 154.63 L636.78 153.07 L640 151.5 L643.24 149.94 L646.49 148.38 L649.76 146.82 L653.04 145.26 L656.34 143.7 L659.65 142.15 L662.98 140.6 L666.31 139.04 L669.67 137.49 L673.03 135.95 L676.41 134.4 L679.8 132.85 L683.2 131.31 L686.61 129.77 L690.03 128.23 L693.46 126.7 L696.9 125.16 L700.35 123.63 L703.81 122.11 L707.27 120.58 L710.75 119.06 L714.22 117.54 L717.71 116.03 L721.2 114.51 L724.7 113 L728.2 111.5 L731.7 110"/>
<path stroke="#808080" stroke-opacity="0.4" d="M621.64 457.26 L619.88 455.69 L618.15 454.11 L616.43 452.53 L614.73 450.95 L613.05 449.37 L611.4 447.79 L609.76 446.21 L608.14 444.63 L606.54 443.05 L604.97 441.47 L603.41 439.88 L601.88 438.3 L600.36 436.72 L598.87 435.13 L597.4 433.55 L595.95 431.96 L594.52 430.38 L593.12 428.79 L591.73 427.2 L590.37 425.62 L589.03 424.03 L587.71 422.44 L586.42 420.86 L585.15 419.27 L583.9 417.68 L582.67 416.09 L581.47 414.5 L580.29 412.91 L579.13 411.32 L577.99 409.73 L576.88 408.14 L575.79 406.55 L574.73 404.96 L573.69 403.37 L572.67 401.78 L571.68 400.19 L570.71 398.6 L569.76 397.01 L568.84 395.41 L567.94 393.82 L567.07 392.23 L566.22 390.64 L565.4 389.04 L564.6 387.45 L563.82 385.86 L563.07 384.26 L562.34 382.67 L561.64 381.08 L560.96 379.48 L560.31 377.89 L559.68 376.3 L559.08 374.7 L558.5 373.11 L557.95 371.51 L557.42 369.92 L556.92 368.32 L556.44 366.73 L555.99 365.13 L555.57 363.54 L555.16 361.94 L554.79 360.35 L554.44 358.75 L554.11 357.16 L553.81 355.56 L553.54 353.97 L553.29 352.37 L553.07 350.77 L552.87 349.18 L552.7 347.58 L552.55 345.99 L552.43 344.39 L552.33 342.8 L552.26 341.2 L552.22 339.6 L552.2 338.01 L552.21 336.41 L552.24 334.81 L552.3 333.22 L552.38 331.62 L552.49 330.03 L552.63 328.43 L552.79 326.83 L552.97 325.24 L553.18 323.64 L553.42 322.04 L553.68 320.45 L553.97 318.85 L554.29 317.25 L554.63 315.66 L554.99 314.06 L555.38 312.47 L555.8 310.87 L556.24 309.27 L556.7 307.68 L557.19 306.08 L557.71 304.48 L558.25 302.89 L558.82 301.29 L559.41 299.69 L560.03 298.1 L560.67 296.5 L561.34 294.91 L562.03 293.31 L562.75 291.72 L563.49 290.12 L564.26 288.52 L565.05 286.93 L565.87 285.33 L566.71 283.74 L567.57 282.14 L568.46 280.55 L569.38 278.95 L570.31 277.36 L571.28 275.76 L572.26 274.17 L573.27 272.57 L574.31 270.98 L575.37 269.38 L576.45 267.79 L577.56 266.19 L578.69 264.6 L579.84 263 L581.02 261.41 L582.22 259.82 L583.44 258.22 L584.69 256.63 L585.96 255.04 L587.25 253.44 L588.56 251.85 L589.9 250.26 L591.26 248.66 L592.65 247.07 L594.05 245.48 L595.48 243.89 L596.93 242.3 L598.4 240.7 L599.9 239.11 L601.41 237.52 L602.95 235.93 L604.51 234.34 L606.09 232.75 L607.69 231.16 L609.32 229.57 L610.96 227.98 L612.63 226.39 L614.31 224.8 L616.02 223.21 L617.75 221.63 L619.49 220.04 L621.26 218.45 L623.05 216.86 L624.86 215.28 L626.68 213.69 L628.53 212.1 L630.4 210.52 L632.28 208.93 L634.19 207.35 L636.11 205.76 L638.05 204.18 L640.01 202.59 L641.99 201.01 L643.99 199.43 L646.01 197.84 L648.04 196.26 L650.09 194.68 L652.16 193.1 L654.25 191.52 L656.35 189.94 L658.47 188.36 L660.61 186.78 L662.76 185.21 L664.93 183.63 L667.12 182.05 L669.32 180.48 L671.54 178.9 L673.77 177.33 L676.02 175.75 L678.28 174.18 L680.56 172.61 L682.86 171.04 L685.16 169.47 L687.49 167.9 L689.82 166.33 L692.17 164.76 L694.54 163.19 L696.91 161.63 L699.3 160.06 L701.71 158.5 L704.12 156.94 L706.55 155.38 L708.99 153.82 L711.44 152.26 L713.91 150.7 L716.38 149.15 L718.87 147.59 L721.37 146.04 L723.87 144.49 L726.39 142.94 L728.92 141.39 L731.45 139.84 L734 138.3"/>
<path stroke="#808080" stroke-opacity="0.4" d="M545.01 486.22 L541.64 484.63 L538.3 483.04 L534.97 481.45 L531.68 479.86 L528.4 478.27 L525.16 476.67 L521.94 475.08 L518.74 473.49 L515.57 471.89 L512.43 470.3 L509.32 468.7 L506.23 467.11 L503.17 465.51 L500.14 463.92 L497.14 462.32 L494.17 460.72 L491.22 459.12 L488.31 457.52 L485.42 455.92 L482.57 454.32 L479.74 452.72 L476.94 451.12 L474.18 449.52 L471.45 447.92 L468.74 446.32 L466.07 444.72 L463.43 443.11 L460.82 441.51 L458.24 439.91 L455.7 438.3 L453.19 436.7 L450.71 435.1 L448.26 433.49 L445.85 431.89 L443.47 430.28 L441.12 428.68 L438.81 427.07 L436.53 425.46 L434.29 423.86 L432.08 422.25 L429.9 420.65 L427.76 419.04 L425.65 417.43 L423.58 415.83 L421.54 414.22 L419.54 412.61 L417.58 411 L415.65 409.39 L413.76 407.79 L411.9 406.18 L410.08 404.57 L408.29 402.96 L406.54 401.35 L404.83 399.74 L403.16 398.13 L401.52 396.52 L399.92 394.92 L398.35 393.31 L396.83 391.7 L395.34 390.09 L393.89 388.48 L392.48 386.87 L391.1 385.26 L389.76 383.65 L388.46 382.04 L387.2 380.43 L385.98 378.81 L384.79 377.2 L383.65 375.59 L382.54 373.98 L381.47 372.37 L380.44 370.76 L379.45 369.15 L378.5 367.54 L377.58 365.93 L376.71 364.32 L375.87 362.7 L375.08 361.09 L374.32 359.48 L373.6 357.87 L372.93 356.26 L372.29 354.65 L371.69 353.03 L371.13 351.42 L370.61 349.81 L370.13 348.2 L369.69 346.59 L369.29 344.97 L368.93 343.36 L368.61 341.75 L368.32 340.14 L368.08 338.53 L367.88 336.91 L367.72 335.3 L367.6 333.69 L367.52 332.08 L367.48 330.47 L367.47 328.85 L367.51 327.24 L367.59 325.63 L367.71 324.02 L367.86 322.4 L368.06 320.79 L368.3 319.18 L368.58 317.57 L368.89 315.95 L369.25 314.34 L369.65 312.73 L370.09 311.12 L370.56 309.51 L371.08 307.89 L371.63 306.28 L372.23 304.67 L372.86 303.06 L373.54 301.44 L374.25 299.83 L375.01 298.22 L375.8 296.61 L376.63 295 L377.5 293.38 L378.41 291.77 L379.36 290.16 L380.35 288.55 L381.38 286.94 L382.44 285.33 L383.55 283.71 L384.69 282.1 L385.87 280.49 L387.1 278.88 L388.35 277.27 L389.65 275.66 L390.99 274.04 L392.36 272.43 L393.77 270.82 L395.22 269.21 L396.71 267.6 L398.23 265.99 L399.8 264.38 L401.4 262.77 L403.03 261.16 L404.71 259.55 L406.42 257.94 L408.17 256.33 L409.95 254.72 L411.77 253.11 L413.63 251.5 L415.52 249.89 L417.45 248.28 L419.42 246.67 L421.42 245.06 L423.46 243.45 L425.53 241.84 L427.64 240.23 L429.78 238.62 L431.96 237.01 L434.17 235.4 L436.42 233.79 L438.7 232.19 L441.02 230.58 L443.37 228.97 L445.75 227.36 L448.17 225.76 L450.62 224.15 L453.1 222.54 L455.62 220.93 L458.17 219.33 L460.75 217.72 L463.37 216.12 L466.02 214.51 L468.7 212.9 L471.41 211.3 L474.15 209.69 L476.92 208.09 L479.73 206.48 L482.56 204.88 L485.43 203.28 L488.32 201.67 L491.25 200.07 L494.21 198.47 L497.19 196.86 L500.21 195.26 L503.25 193.66 L506.32 192.06 L509.43 190.46 L512.55 188.85 L515.71 187.25 L518.9 185.65 L522.11 184.05 L525.35 182.46 L528.62 180.86 L531.91 179.26 L535.23 177.66 L538.57 176.06 L541.94 174.47 L545.34 172.87 L548.76 171.28 L552.21 169.68 L555.68 168.09 L559.17 166.49 L562.69 164.9 L566.23 163.31 L569.8 161.71 L573.38 160.12 L576.99 158.53 L580.62 156.94 L584.28 155.36 L587.95 153.77 L591.65 152.18 L595.36 150.59 L599.1 149.01 L602.86 147.43 L606.63 145.84 L610.43 144.26 L614.24 142.68 L618.07 141.1 L621.92 139.52 L625.78 137.94 L629.67 136.37 L633.57 134.79 L637.48 133.22 L641.41 131.65 L645.36 130.08 L649.32 128.51 L653.29 126.94 L657.28 125.38 L661.28 123.82 L665.29 122.25 L669.32 120.7 L673.35 119.14 L677.4 117.58 L681.46 116.03 L685.52 114.48 L689.6 112.94 L693.68 111.39 L697.77 109.85 L701.87 108.31 L705.97 106.78 L710.07 105.25 L714.19 103.72 L718.3 102.2"/>
<path stroke="#808080" stroke-opacity="0.4" d="M629.87 478.47 L626.97 476.87 L624.1 475.27 L621.24 473.67 L618.4 472.07 L615.58 470.46 L612.79 468.86 L610.01 467.26 L607.25 465.65 L604.52 464.05 L601.81 462.45 L599.12 460.84 L596.45 459.24 L593.8 457.63 L591.18 456.03 L588.58 454.42 L586 452.81 L583.45 451.21 L580.91 449.6 L578.41 448 L575.92 446.39 L573.46 444.78 L571.02 443.18 L568.61 441.57 L566.22 439.96 L563.86 438.35 L561.52 436.75 L559.21 435.14 L556.92 433.53 L554.66 431.92 L552.42 430.31 L550.21 428.7 L548.03 427.1 L545.87 425.49 L543.73 423.88 L541.63 422.27 L539.55 420.66 L537.5 419.05 L535.47 417.44 L533.47 415.83 L531.5 414.22 L529.56 412.61 L527.64 411 L525.75 409.39 L523.89 407.78 L522.06 406.17 L520.26 404.56 L518.48 402.95 L516.74 401.34 L515.02 399.73 L513.33 398.12 L511.67 396.5 L510.04 394.89 L508.43 393.28 L506.86 391.67 L505.32 390.06 L503.8 388.45 L502.32 386.84 L500.86 385.23 L499.44 383.61 L498.04 382 L496.68 380.39 L495.35 378.78 L494.04 377.17 L492.77 375.56 L491.52 373.94 L490.31 372.33 L489.13 370.72 L487.98 369.11 L486.86 367.5 L485.77 365.88 L484.71 364.27 L483.68 362.66 L482.69 361.05 L481.72 359.43 L480.79 357.82 L479.89 356.21 L479.02 354.6 L478.18 352.98 L477.38 351.37 L476.6 349.76 L475.86 348.15 L475.15 346.53 L474.47 344.92 L473.82 343.31 L473.2 341.7 L472.62 340.08 L472.07 338.47 L471.55 336.86 L471.06 335.25 L470.61 333.63 L470.19 332.02 L469.79 330.41 L469.44 328.8 L469.11 327.18 L468.82 325.57 L468.56 323.96 L468.33 322.34 L468.13 320.73 L467.97 319.12 L467.84 317.51 L467.74 315.89 L467.67 314.28 L467.64 312.67 L467.64 311.06 L467.67 309.44 L467.73 307.83 L467.83 306.22 L467.96 304.6 L468.12 302.99 L468.31 301.38 L468.54 299.77 L468.8 298.15 L469.09 296.54 L469.41 294.93 L469.76 293.32 L470.15 291.7 L470.57 290.09 L471.02 288.48 L471.51 286.87 L472.02 285.25 L472.57 283.64 L473.15 282.03 L473.77 280.42 L474.41 278.8 L475.09 277.19 L475.8 275.58 L476.54 273.97 L477.31 272.36 L478.11 270.74 L478.95 269.13 L479.81 267.52 L480.71 265.91 L481.64 264.3 L482.6 262.68 L483.6 261.07 L484.62 259.46 L485.67 257.85 L486.76 256.24 L487.88 254.63 L489.02 253.01 L490.2 251.4 L491.41 249.79 L492.65 248.18 L493.92 246.57 L495.22 244.96 L496.55 243.35 L497.91 241.74 L499.31 240.13 L500.73 238.51 L502.18 236.9 L503.66 235.29 L505.17 233.68 L506.71 232.07 L508.28 230.46 L509.87 228.85 L511.5 227.24 L513.16 225.63 L514.84 224.02 L516.56 222.41 L518.3 220.8 L520.07 219.19 L521.87 217.58 L523.7 215.98 L525.55 214.37 L527.43 212.76 L529.34 211.15 L531.28 209.54 L533.25 207.93 L535.24 206.32 L537.26 204.72 L539.31 203.11 L541.38 201.5 L543.48 199.89 L545.61 198.29 L547.76 196.68 L549.94 195.07 L552.14 193.46 L554.37 191.86 L556.63 190.25 L558.91 188.65 L561.21 187.04 L563.54 185.43 L565.9 183.83 L568.28 182.22 L570.68 180.62 L573.11 179.01 L575.56 177.41 L578.04 175.81 L580.54 174.2 L583.06 172.6 L585.6 171 L588.17 169.39 L590.76 167.79 L593.37 166.19 L596.01 164.59 L598.66 162.99 L601.34 161.39 L604.04 159.79 L606.76 158.19 L609.51 156.59 L612.27 154.99 L615.05 153.39 L617.85 151.79 L620.67 150.19 L623.52 148.6 L626.38 147 L629.26 145.4 L632.16 143.81 L635.08 142.22 L638.01 140.62 L640.96 139.03 L643.93 137.44 L646.92 135.84 L649.93 134.25 L652.95 132.66 L655.99 131.08 L659.04 129.49 L662.11 127.9 L665.19 126.31 L668.29 124.73 L671.41 123.15 L674.54 121.56 L677.68 119.98 L680.83 118.4 L684 116.82 L687.18 115.25 L690.37 113.67 L693.57 112.1 L696.79 110.52 L700.01 108.95 L703.24 107.38 L706.49 105.82 L709.74 104.25 L713 102.69 L716.27 101.13 L719.54 99.57 L722.82 98.02 L726.11 96.47 L729.4 94.92 L732.69 93.37 L735.99 91.83 L739.29 90.3 L742.59 88.76 L745.89 87.23 L749.18 85.71 L752.48 84.19 L755.77 82.68 L759.05 81.17 L762.32 79.67 L765.59 78.18 L768.84 76.69 L772.08 75.22 L775.3 73.75 L778.5 72.29 L781.68 70.85 L784.83 69.42 L787.95 68 L791.03 66.6 L794.07 65.21 L797.06 63.84 L800 62.5"/>
<path stroke="#808080" stroke-opacity="0.4" d="M352.91 333.14 L352.92 331.55 L352.97 329.96 L353.05 328.37 L353.18 326.78 L353.35 325.18 L353.55 323.59 L353.8 322 L354.09 320.41 L354.41 318.82 L354.78 317.23 L355.18 315.64 L355.63 314.05 L356.11 312.46 L356.64 310.87 L357.2 309.28 L357.81 307.69 L358.45 306.09 L359.13 304.5 L359.86 302.91 L360.62 301.32 L361.42 299.73 L362.26 298.14 L363.14 296.55 L364.06 294.96 L365.02 293.37 L366.02 291.78 L367.05 290.19 L368.13 288.6 L369.24 287.01 L370.39 285.42 L371.58 283.83 L372.81 282.24 L374.08 280.65 L375.39 279.06 L376.73 277.47 L378.11 275.88 L379.53 274.29 L380.99 272.7 L382.49 271.12 L384.02 269.53 L385.59 267.94 L387.2 266.35 L388.84 264.76 L390.53 263.17 L392.24 261.59 L394 260 L395.79 258.41 L397.62 256.82 L399.49 255.24 L401.39 253.65 L403.33 252.06 L405.3 250.48 L407.31 248.89 L409.35 247.3 L411.43 245.72 L413.55 244.13 L415.7 242.55 L417.88 240.96 L420.1 239.38 L422.36 237.79 L424.65 236.21 L426.97 234.63 L429.32 233.04 L431.71 231.46 L434.14 229.88 L436.59 228.29 L439.08 226.71 L441.61 225.13 L444.16 223.55 L446.75 221.97 L449.37 220.39 L452.02 218.81 L454.7 217.23 L457.42 215.65 L460.16 214.07 L462.94 212.49 L465.75 210.91 L468.58 209.33 L471.45 207.76 L474.35 206.18 L477.28 204.6 L480.24 203.03 L483.22 201.45 L486.24 199.88 L489.28 198.3 L492.35 196.73 L495.45 195.16 L498.58 193.59 L501.74 192.02 L504.92 190.45 L508.13 188.88 L511.36 187.31 L514.63 185.74 L517.91 184.17 L521.23 182.6 L524.57 181.04 L527.93 179.47 L531.32 177.91 L534.73 176.35 L538.17 174.78 L541.63 173.22 L545.11 171.66 L548.62 170.1 L552.15 168.55 L555.7 166.99 L559.28 165.43 L562.87 163.88 L566.49 162.32 L570.12 160.77 L573.78 159.22 L577.45 157.67 L581.15 156.12 L584.86 154.58 L588.6 153.03 L592.35 151.49 L596.12 149.95 L599.9 148.41 L603.71 146.87 L607.52 145.34 L611.36 143.8 L615.21 142.27 L619.07 140.74 L622.95 139.21 L626.84 137.69 L630.75 136.16 L634.67 134.64 L638.6 133.13 L642.54 131.61 L646.49 130.1 L650.45 128.59 L654.42 127.08 L658.4 125.58 L662.39 124.08 L666.39 122.58 L670.39 121.09 L674.4 119.6 L678.41 118.12 L682.43 116.64 L686.45 115.17 L690.47 113.7 L694.5 112.23 L698.52 110.77 L702.55 109.32 L706.57 107.87 L710.59 106.43 L714.61 104.99 L718.63 103.56 L722.63 102.14 L726.63 100.73 L730.62 99.32 L734.6 97.93 L738.57 96.54 L742.53 95.16 L746.47 93.79 L750.4 92.44 L754.3 91.09 L758.19 89.76 L762.05 88.45 L765.89 87.14 L769.7 85.85 L773.48 84.58 L777.23 83.33 L780.95 82.09 L784.63 80.87 L788.26 79.68 L791.86 78.51 L795.41 77.36 L798.9 76.24 L802.34 75.14 L805.73 74.08 L809.05 73.05 L812.31 72.05 L815.5 71.09 L818.61 70.17 L821.65 69.28 L824.61 68.45 L827.47 67.66 L830.25 66.92 L832.94 66.23 L835.53 65.6 L838.02 65.02 L840.41 64.51 L842.7 64.06 L844.88 63.68 L846.95 63.36 L848.92 63.12 L850.79 62.94 L852.55 62.84 L854.21 62.81 L855.77 62.85 L857.24 62.97 L858.62 63.16 L859.91 63.42 L861.12 63.74 L862.26 64.14 L863.33 64.6 L864.33 65.13 L865.28 65.71 L866.17 66.35 L867.01 67.05 L867.8 67.8"/>
<path stroke="#808080" stroke-opacity="0.4" d="M458.52 371.51 L458 369.96 L457.52 368.41 L457.06 366.86 L456.63 365.31 L456.23 363.76 L455.87 362.21 L455.53 360.66 L455.23 359.11 L454.95 357.56 L454.71 356 L454.5 354.45 L454.32 352.9 L454.17 351.34 L454.05 349.79 L453.96 348.24 L453.9 346.69 L453.87 345.13 L453.88 343.58 L453.91 342.02 L453.98 340.47 L454.08 338.92 L454.21 337.36 L454.37 335.81 L454.56 334.25 L454.78 332.7 L455.03 331.14 L455.32 329.59 L455.63 328.03 L455.98 326.48 L456.35 324.92 L456.76 323.37 L457.2 321.81 L457.67 320.26 L458.17 318.7 L458.7 317.15 L459.27 315.59 L459.86 314.04 L460.48 312.48 L461.14 310.93 L461.82 309.37 L462.54 307.82 L463.29 306.26 L464.06 304.71 L464.87 303.15 L465.71 301.6 L466.58 300.04 L467.47 298.49 L468.4 296.94 L469.36 295.38 L470.35 293.83 L471.37 292.28 L472.42 290.72 L473.49 289.17 L474.6 287.62 L475.74 286.06 L476.9 284.51 L478.1 282.96 L479.32 281.41 L480.58 279.86 L481.86 278.3 L483.17 276.75 L484.51 275.2 L485.88 273.65 L487.28 272.1 L488.71 270.55 L490.16 269 L491.64 267.46 L493.15 265.91 L494.69 264.36 L496.26 262.81 L497.85 261.26 L499.47 259.72 L501.12 258.17 L502.8 256.62 L504.5 255.08 L506.23 253.53 L507.99 251.99 L509.77 250.45 L511.58 248.9 L513.42 247.36 L515.28 245.82 L517.17 244.28 L519.08 242.74 L521.02 241.2 L522.98 239.66 L524.97 238.12 L526.99 236.58 L529.03 235.04 L531.09 233.51 L533.18 231.97 L535.29 230.44 L537.43 228.9 L539.59 227.37 L541.77 225.84 L543.98 224.31 L546.21 222.78 L548.46 221.25 L550.74 219.72 L553.03 218.19 L555.35 216.66 L557.7 215.14 L560.06 213.61 L562.45 212.09 L564.85 210.57 L567.28 209.05 L569.73 207.53 L572.2 206.01 L574.69 204.49 L577.19 202.98 L579.72 201.46 L582.27 199.95 L584.84 198.44 L587.42 196.93 L590.03 195.42 L592.65 193.92 L595.29 192.41 L597.95 190.91 L600.63 189.41 L603.32 187.91 L606.03 186.41 L608.75 184.91 L611.5 183.42 L614.25 181.93 L617.03 180.44 L619.81 178.95 L622.62 177.46 L625.43 175.98 L628.27 174.5 L631.11 173.02 L633.97 171.55 L636.84 170.07 L639.72 168.6 L642.62 167.14 L645.53 165.67 L648.44 164.21 L651.37 162.75 L654.31 161.3 L657.26 159.84 L660.22 158.4 L663.19 156.95 L666.17 155.51 L669.15 154.07 L672.15 152.64 L675.15 151.21 L678.15 149.78 L681.17 148.36 L684.19 146.94 L687.21 145.53 L690.24 144.13 L693.27 142.72 L696.31 141.33 L699.35 139.94 L702.39 138.55 L705.44 137.17 L708.48 135.8 L711.53 134.43 L714.57 133.07 L717.62 131.71 L720.66 130.37 L723.7 129.03 L726.74 127.69 L729.77 126.37 L732.8 125.05 L735.83 123.75 L738.85 122.45 L741.86 121.16 L744.86 119.88 L747.86 118.61 L750.85 117.35 L753.82 116.11 L756.79 114.87 L759.74 113.65 L762.68 112.44 L765.6 111.24 L768.51 110.05 L771.41 108.88 L774.28 107.73 L777.14 106.59 L779.98 105.46 L782.8 104.36 L785.59 103.27 L788.37 102.2 L791.12 101.15 L793.84 100.12 L796.54 99.11 L799.21 98.12 L801.85 97.15 L804.46 96.21 L807.04 95.3 L809.59 94.41 L812.1 93.54 L814.58 92.71 L817.03 91.9 L819.44 91.12 L821.81 90.38 L824.14 89.66 L826.43 88.98 L828.69 88.34 L830.9 87.73 L833.07 87.15 L835.2 86.62 L837.29 86.12 L839.33 85.66 L841.33 85.25 L843.3 84.87 L845.21 84.54 L847.09 84.25 L848.93 84.01 L850.72 83.81 L852.48 83.65 L854.2 83.54 L855.88 83.48 L857.52 83.46 L859.13 83.49 L860.7 83.56 L862.24 83.68 L863.75 83.84 L865.23 84.05 L866.68 84.3 L868.11 84.6 L869.51 84.94 L870.89 85.32 L872.24 85.75 L873.58 86.21 L874.9 86.71 L876.2 87.26 L877.48 87.84 L878.75 88.45 L880.01 89.1 L881.26 89.79 L882.49 90.51 L883.72 91.26 L884.94 92.04 L886.15 92.86 L887.35 93.7 L888.55 94.57 L889.74 95.46 L890.93 96.38 L892.12 97.33 L893.3 98.3"/>
<path stroke="#808080" stroke-opacity="0.4" d="M524.81 354.41 L524.53 352.82 L524.28 351.22 L524.06 349.63 L523.87 348.04 L523.7 346.45 L523.56 344.85 L523.45 343.26 L523.36 341.67 L523.31 340.07 L523.28 338.48 L523.28 336.89 L523.31 335.3 L523.36 333.7 L523.44 332.11 L523.55 330.52 L523.69 328.92 L523.85 327.33 L524.05 325.74 L524.27 324.14 L524.51 322.55 L524.79 320.96 L525.09 319.36 L525.42 317.77 L525.78 316.18 L526.16 314.59 L526.58 312.99 L527.02 311.4 L527.48 309.81 L527.98 308.21 L528.5 306.62 L529.05 305.03 L529.62 303.43 L530.23 301.84 L530.86 300.25 L531.52 298.66 L532.2 297.06 L532.91 295.47 L533.65 293.88 L534.41 292.28 L535.21 290.69 L536.03 289.1 L536.87 287.51 L537.74 285.91 L538.64 284.32 L539.57 282.73 L540.52 281.14 L541.49 279.55 L542.5 277.96 L543.53 276.36 L544.58 274.77 L545.67 273.18 L546.77 271.59 L547.91 270 L549.07 268.41 L550.25 266.82 L551.46 265.23 L552.7 263.64 L553.96 262.05 L555.25 260.45 L556.56 258.86 L557.89 257.28 L559.25 255.69 L560.64 254.1 L562.05 252.51 L563.49 250.92 L564.95 249.33 L566.43 247.74 L567.94 246.15 L569.47 244.56 L571.03 242.98 L572.61 241.39 L574.21 239.8 L575.84 238.21 L577.49 236.63 L579.16 235.04 L580.86 233.45 L582.58 231.87 L584.32 230.28 L586.08 228.7 L587.87 227.11 L589.68 225.53 L591.51 223.94 L593.37 222.36 L595.25 220.78 L597.14 219.19 L599.06 217.61 L601 216.03 L602.97 214.45 L604.95 212.86 L606.95 211.28 L608.98 209.7 L611.02 208.12 L613.09 206.54 L615.18 204.96 L617.28 203.38 L619.41 201.81 L621.55 200.23 L623.72 198.65 L625.9 197.08 L628.11 195.5 L630.33 193.92 L632.57 192.35 L634.83 190.78 L637.11 189.2 L639.4 187.63 L641.71 186.06 L644.04 184.49 L646.39 182.92 L648.76 181.35 L651.14 179.78 L653.54 178.21 L655.95 176.64 L658.39 175.08 L660.83 173.51 L663.3 171.95 L665.78 170.38 L668.27 168.82 L670.78 167.26 L673.3 165.7 L675.84 164.14 L678.39 162.58 L680.96 161.03 L683.54 159.47 L686.13 157.92 L688.74 156.37 L691.36 154.81 L693.99 153.26 L696.63 151.72 L699.29 150.17 L701.96 148.62 L704.63 147.08 L707.32 145.54 L710.03 144 L712.74 142.46 L715.46 140.93 L718.19 139.39 L720.93 137.86 L723.68 136.33 L726.43 134.81 L729.2 133.28 L731.97 131.76 L734.75 130.24 L737.54 128.73 L740.33 127.21 L743.13 125.7 L745.94 124.2 L748.75 122.69 L751.56 121.19 L754.38 119.7 L757.21 118.2 L760.03 116.72 L762.86 115.23 L765.7 113.75 L768.53 112.28 L771.36 110.81 L774.2 109.34 L777.03 107.89 L779.86 106.43 L782.7 104.99 L785.53 103.55 L788.35 102.11 L791.17 100.69 L793.99 99.27 L796.8 97.86 L799.61 96.46 L802.4 95.07 L805.19 93.69 L807.97 92.32 L810.74 90.96 L813.5 89.61 L816.24 88.28 L818.97 86.96 L821.68 85.65 L824.38 84.36 L827.06 83.09 L829.72 81.83 L832.36 80.59 L834.97 79.38 L837.56 78.18 L840.12 77.01 L842.66 75.87 L845.16 74.75 L847.63 73.66 L850.07 72.6 L852.47 71.58 L854.83 70.59 L857.16 69.64 L859.44 68.73 L861.68 67.86 L863.87 67.04 L866.02 66.27 L868.11 65.55 L870.17 64.89 L872.17 64.29 L874.12 63.74 L876.02 63.27 L877.88 62.85 L879.69 62.51 L881.45 62.24 L883.18 62.04 L884.86 61.91 L886.5 61.86 L888.11 61.89 L889.69 61.99 L891.24 62.16 L892.78 62.41 L894.29 62.73 L895.78 63.12 L897.26 63.58 L898.74 64.1 L900.21 64.68 L901.67 65.32 L903.14 66.02 L904.6 66.78 L906.07 67.58 L907.54 68.43 L909.02 69.33 L910.5 70.26 L911.99 71.24 L913.49 72.25 L915 73.3"/>
<path stroke="#808080" stroke-opacity="0.4" d="M688.56 342.66 L688.45 341.05 L688.35 339.43 L688.26 337.81 L688.2 336.19 L688.14 334.58 L688.11 332.96 L688.09 331.34 L688.08 329.72 L688.1 328.11 L688.13 326.49 L688.17 324.87 L688.23 323.26 L688.31 321.64 L688.4 320.02 L688.51 318.4 L688.63 316.79 L688.78 315.17 L688.93 313.55 L689.11 311.93 L689.3 310.32 L689.5 308.7 L689.72 307.08 L689.96 305.47 L690.21 303.85 L690.48 302.23 L690.77 300.61 L691.07 299 L691.38 297.38 L691.72 295.76 L692.06 294.15 L692.43 292.53 L692.81 290.91 L693.2 289.29 L693.62 287.68 L694.04 286.06 L694.48 284.44 L694.94 282.83 L695.42 281.21 L695.91 279.59 L696.41 277.97 L696.93 276.36 L697.47 274.74 L698.02 273.12 L698.59 271.51 L699.17 269.89 L699.76 268.27 L700.38 266.66 L701 265.04 L701.65 263.42 L702.3 261.8 L702.98 260.19 L703.66 258.57 L704.37 256.95 L705.08 255.34 L705.82 253.72 L706.56 252.1 L707.32 250.49 L708.1 248.87 L708.89 247.25 L709.7 245.64 L710.52 244.02 L711.35 242.4 L712.2 240.79 L713.06 239.17 L713.94 237.55 L714.83 235.94 L715.73 234.32 L716.65 232.7 L717.59 231.09 L718.53 229.47 L719.49 227.85 L720.47 226.24 L721.46 224.62 L722.46 223.01 L723.47 221.39 L724.5 219.77 L725.54 218.16 L726.6 216.54 L727.66 214.92 L728.75 213.31 L729.84 211.69 L730.95 210.08 L732.07 208.46 L733.2 206.84 L734.34 205.23 L735.5 203.61 L736.67 202 L737.86 200.38 L739.05 198.77 L740.26 197.15 L741.48 195.54 L742.71 193.92 L743.95 192.3 L745.21 190.69 L746.47 189.07 L747.75 187.46 L749.04 185.84 L750.34 184.23 L751.65 182.61 L752.98 181 L754.31 179.38 L755.66 177.77 L757.02 176.16 L758.38 174.54 L759.76 172.93 L761.15 171.31 L762.55 169.7 L763.96 168.08 L765.38 166.47 L766.81 164.86 L768.25 163.24 L769.7 161.63 L771.16 160.02 L772.63 158.4 L774.11 156.79 L775.6 155.18 L777.1 153.56 L778.6 151.95 L780.12 150.34 L781.65 148.73 L783.18 147.12 L784.72 145.5 L786.27 143.89 L787.83 142.28 L789.4 140.67 L790.98 139.06 L792.56 137.45 L794.16 135.84 L795.76 134.23 L797.36 132.62 L798.98 131.01 L800.6 129.4 L802.23 127.79 L803.87 126.18 L805.52 124.57 L807.17 122.96 L808.83 121.35 L810.49 119.75 L812.16 118.14 L813.84 116.53 L815.52 114.93 L817.21 113.32 L818.91 111.72 L820.61 110.11 L822.32 108.51 L824.03 106.9 L825.74 105.3 L827.47 103.7 L829.19 102.1 L830.93 100.5 L832.66 98.9 L834.4 97.3 L836.15 95.7 L837.89 94.11 L839.65 92.51 L841.4 90.91 L843.16 89.32 L844.92 87.73 L846.69 86.14 L848.46 84.55 L850.22 82.96 L852 81.38 L853.77 79.8 L855.54 78.22 L857.32 76.64 L859.1 75.06 L860.87 73.49 L862.65 71.92 L864.43 70.35 L866.2 68.79 L867.98 67.24 L869.75 65.69 L871.52 64.14 L873.29 62.6 L875.05 61.07 L876.81 59.55 L878.56 58.03 L880.3 56.53 L882.04 55.04 L883.76 53.57 L885.48 52.11 L887.18 50.68 L888.86 49.27 L890.53 47.9 L892.17 46.56 L893.8 45.27 L895.39 44.03 L896.96 42.87 L898.5 41.79 L900.01 40.82 L901.49 39.99 L902.97 39.32 L904.46 38.83 L905.99 38.56 L907.6 38.53 L909.31 38.72 L911.16 39.13 L913.16 39.75 L915.3 40.53 L917.59 41.46 L920 42.5"/>
<path stroke="#808080" stroke-opacity="0.4" d="M544.85 436.87 L542.42 435.26 L540.02 433.64 L537.65 432.03 L535.31 430.41 L532.99 428.8 L530.7 427.18 L528.44 425.57 L526.2 423.95 L523.99 422.33 L521.82 420.72 L519.67 419.1 L517.54 417.49 L515.45 415.87 L513.39 414.25 L511.35 412.64 L509.35 411.02 L507.37 409.4 L505.42 407.79 L503.51 406.17 L501.62 404.55 L499.76 402.94 L497.94 401.32 L496.14 399.7 L494.37 398.08 L492.64 396.47 L490.93 394.85 L489.26 393.23 L487.62 391.61 L486 389.99 L484.42 388.38 L482.87 386.76 L481.36 385.14 L479.87 383.52 L478.41 381.9 L476.99 380.29 L475.6 378.67 L474.24 377.05 L472.92 375.43 L471.62 373.81 L470.36 372.19 L469.13 370.58 L467.93 368.96 L466.77 367.34 L465.64 365.72 L464.54 364.1 L463.47 362.48 L462.44 360.86 L461.44 359.25 L460.47 357.63 L459.54 356.01 L458.64 354.39 L457.77 352.77 L456.94 351.15 L456.14 349.53 L455.38 347.91 L454.64 346.29 L453.94 344.68 L453.28 343.06 L452.65 341.44 L452.05 339.82 L451.49 338.2 L450.96 336.58 L450.46 334.96 L450 333.34 L449.57 331.72 L449.18 330.1 L448.82 328.48 L448.5 326.86 L448.21 325.25 L447.95 323.63 L447.73 322.01 L447.54 320.39 L447.39 318.77 L447.27 317.15 L447.18 315.53 L447.13 313.91 L447.11 312.29 L447.13 310.67 L447.18 309.05 L447.27 307.43 L447.39 305.81 L447.54 304.2 L447.73 302.58 L447.95 300.96 L448.21 299.34 L448.5 297.72 L448.83 296.1 L449.19 294.48 L449.58 292.86 L450.01 291.24 L450.47 289.62 L450.97 288.01 L451.5 286.39 L452.06 284.77 L452.66 283.15 L453.29 281.53 L453.96 279.91 L454.66 278.29 L455.39 276.67 L456.15 275.05 L456.95 273.44 L457.79 271.82 L458.65 270.2 L459.56 268.58 L460.49 266.96 L461.46 265.34 L462.45 263.73 L463.49 262.11 L464.55 260.49 L465.65 258.87 L466.78 257.25 L467.95 255.63 L469.14 254.02 L470.37 252.4 L471.64 250.78 L472.93 249.16 L474.26 247.54 L475.61 245.93 L477 244.31 L478.43 242.69 L479.88 241.07 L481.37 239.46 L482.88 237.84 L484.43 236.22 L486.01 234.61 L487.62 232.99 L489.27 231.37 L490.94 229.76 L492.64 228.14 L494.38 226.52 L496.14 224.91 L497.94 223.29 L499.76 221.67 L501.62 220.06 L503.5 218.44 L505.42 216.83 L507.36 215.21 L509.34 213.59 L511.34 211.98 L513.37 210.36 L515.43 208.75 L517.52 207.13 L519.64 205.52 L521.79 203.9 L523.96 202.29 L526.17 200.68 L528.4 199.06 L530.66 197.45 L532.94 195.83 L535.26 194.22 L537.6 192.61 L539.97 190.99 L542.36 189.38 L544.78 187.77 L547.23 186.16 L549.7 184.54 L552.2 182.93 L554.73 181.32 L557.28 179.71 L559.85 178.1 L562.45 176.49 L565.08 174.88 L567.73 173.27 L570.4 171.66 L573.1 170.05 L575.83 168.44 L578.57 166.83 L581.34 165.22 L584.13 163.61 L586.95 162.01 L589.79 160.4 L592.65 158.79 L595.53 157.18 L598.43 155.58 L601.36 153.97 L604.31 152.37 L607.28 150.76 L610.26 149.16 L613.27 147.56 L616.3 145.95 L619.35 144.35 L622.42 142.75 L625.51 141.15 L628.62 139.55 L631.74 137.95 L634.89 136.35 L638.05 134.75 L641.23 133.16 L644.42 131.56 L647.64 129.96 L650.87 128.37 L654.11 126.78 L657.38 125.18 L660.65 123.59 L663.95 122 L667.25 120.41 L670.57 118.82 L673.91 117.24 L677.26 115.65 L680.62 114.07 L683.99 112.49 L687.37 110.91 L690.77 109.33 L694.18 107.75 L697.59 106.18 L701.02 104.6 L704.45 103.03 L707.9 101.47 L711.35 99.9 L714.81 98.34 L718.27 96.78 L721.74 95.22 L725.21 93.67 L728.69 92.12 L732.17 90.57 L735.64 89.03 L739.12 87.49 L742.6 85.95 L746.08 84.43 L749.55 82.9 L753.02 81.39 L756.48 79.88 L759.93 78.37 L763.36 76.88 L766.79 75.39 L770.19 73.91 L773.58 72.44 L776.94 70.98 L780.28 69.54 L783.59 68.11 L786.85 66.69 L790.08 65.29 L793.26 63.91 L796.38 62.55 L799.44 61.22 L802.43 59.91 L805.33 58.62M996.21 57.38 L991.39 56.17 L986.7 55"/>
<path stroke="#808080" stroke-opacity="0.4" d="M486.58 378.73 L485.1 377.15 L483.65 375.56 L482.23 373.98 L480.84 372.4 L479.48 370.82 L478.15 369.24 L476.85 367.65 L475.58 366.07 L474.34 364.49 L473.14 362.9 L471.96 361.32 L470.81 359.74 L469.7 358.15 L468.62 356.57 L467.56 354.99 L466.54 353.4 L465.55 351.82 L464.59 350.24 L463.67 348.65 L462.77 347.07 L461.91 345.48 L461.07 343.9 L460.27 342.31 L459.51 340.73 L458.77 339.14 L458.07 337.56 L457.39 335.98 L456.75 334.39 L456.14 332.81 L455.57 331.22 L455.02 329.64 L454.51 328.05 L454.03 326.47 L453.59 324.88 L453.17 323.3 L452.79 321.71 L452.44 320.13 L452.12 318.54 L451.84 316.96 L451.59 315.37 L451.37 313.79 L451.18 312.2 L451.03 310.62 L450.9 309.03 L450.81 307.45 L450.76 305.86 L450.73 304.28 L450.74 302.69 L450.78 301.11 L450.86 299.52 L450.96 297.94 L451.1 296.35 L451.27 294.77 L451.47 293.18 L451.71 291.6 L451.98 290.02 L452.28 288.43 L452.61 286.85 L452.98 285.26 L453.38 283.68 L453.81 282.1 L454.27 280.51 L454.76 278.93 L455.29 277.35 L455.85 275.76 L456.44 274.18 L457.06 272.6 L457.72 271.02 L458.4 269.43 L459.12 267.85 L459.87 266.27 L460.65 264.69 L461.47 263.11 L462.31 261.53 L463.19 259.95 L464.09 258.36 L465.03 256.78 L466 255.2 L467 253.62 L468.04 252.04 L469.1 250.46 L470.19 248.88 L471.32 247.31 L472.47 245.73 L473.66 244.15 L474.87 242.57 L476.12 240.99 L477.4 239.42 L478.7 237.84 L480.04 236.26 L481.4 234.69 L482.8 233.11 L484.22 231.53 L485.68 229.96 L487.16 228.38 L488.67 226.81 L490.22 225.24 L491.79 223.66 L493.38 222.09 L495.01 220.52 L496.67 218.94 L498.35 217.37 L500.06 215.8 L501.8 214.23 L503.57 212.66 L505.36 211.09 L507.18 209.52 L509.03 207.96 L510.91 206.39 L512.81 204.82 L514.74 203.26 L516.69 201.69 L518.67 200.13 L520.68 198.56 L522.71 197 L524.77 195.44 L526.85 193.87 L528.96 192.31 L531.09 190.75 L533.25 189.19 L535.43 187.64 L537.64 186.08 L539.87 184.52 L542.12 182.97 L544.4 181.41 L546.7 179.86 L549.02 178.31 L551.36 176.76 L553.73 175.21 L556.11 173.66 L558.52 172.11 L560.95 170.56 L563.41 169.02 L565.88 167.47 L568.37 165.93 L570.88 164.39 L573.42 162.85 L575.97 161.31 L578.54 159.78 L581.13 158.24 L583.73 156.71 L586.36 155.18 L589 153.65 L591.66 152.12 L594.33 150.6 L597.02 149.08 L599.73 147.56 L602.45 146.04 L605.19 144.52 L607.94 143.01 L610.71 141.5 L613.48 139.99 L616.27 138.48 L619.08 136.98 L621.89 135.48 L624.71 133.99 L627.55 132.49 L630.39 131 L633.25 129.52 L636.11 128.03 L638.98 126.55 L641.86 125.08 L644.74 123.61 L647.63 122.14 L650.52 120.68 L653.41 119.23 L656.31 117.78 L659.21 116.33 L662.11 114.89 L665 113.46 L667.9 112.03 L670.79 110.61 L673.68 109.19 L676.56 107.78 L679.44 106.39 L682.3 104.99 L685.16 103.61 L688 102.24 L690.83 100.87 L693.64 99.52 L696.44 98.17 L699.21 96.84 L701.96 95.52 L704.69 94.21 L707.39 92.92 L710.05 91.64 L712.68 90.37 L715.28 89.12 L717.83 87.89 L720.34 86.68 L722.8 85.48M1077.75 84.31 L1073.18 83.15 L1068.67 82.02 L1064.22 80.92 L1059.85 79.83 L1055.56 78.78 L1051.34 77.76 L1047.21 76.77 L1043.17 75.81 L1039.22 74.88 L1035.38 74 L1031.65 73.15 L1028.02 72.34 L1024.52 71.58 L1021.13 70.87 L1017.88 70.2 L1014.76 69.58 L1011.77 69.02 L1008.93 68.51 L1006.23 68.06 L1003.68 67.67 L1001.28 67.34 L999.03 67.07 L996.94 66.86 L994.99 66.72 L993.2 66.64 L991.56 66.64 L990.06 66.69 L988.71 66.81 L987.5 67"/>
<path stroke="#808080" stroke-opacity="0.4" d="M653.93 363.76 L654.37 362.39 L654.83 361.02 L655.29 359.65 L655.77 358.27 L656.26 356.9 L656.76 355.53 L657.28 354.15 L657.81 352.78 L658.36 351.4 L658.91 350.02 L659.48 348.64 L660.07 347.27 L660.66 345.89 L661.27 344.51 L661.9 343.13 L662.53 341.75 L663.18 340.37 L663.84 338.98 L664.52 337.6 L665.2 336.22 L665.91 334.84 L666.62 333.46 L667.35 332.07 L668.08 330.69 L668.84 329.31 L669.6 327.92 L670.38 326.54 L671.17 325.16 L671.97 323.77 L672.79 322.39 L673.62 321 L674.46 319.62 L675.31 318.24 L676.18 316.85 L677.06 315.47 L677.95 314.08 L678.85 312.7 L679.77 311.32 L680.7 309.93 L681.64 308.55 L682.59 307.17 L683.56 305.79 L684.53 304.4 L685.52 303.02 L686.52 301.64 L687.53 300.26 L688.56 298.88 L689.59 297.5 L690.64 296.12 L691.7 294.74 L692.77 293.36 L693.85 291.98 L694.94 290.6 L696.04 289.23 L697.16 287.85 L698.28 286.47 L699.42 285.1 L700.57 283.73 L701.72 282.35 L702.89 280.98 L704.07 279.61 L705.26 278.24 L706.46 276.87 L707.67 275.5 L708.9 274.13 L710.13 272.76 L711.37 271.4 L712.62 270.03 L713.88 268.67 L715.15 267.31 L716.43 265.94 L717.72 264.58 L719.02 263.22 L720.33 261.87 L721.64 260.51 L722.97 259.16 L724.31 257.8 L725.65 256.45 L727 255.1 L728.37 253.75 L729.74 252.4 L731.12 251.06 L732.5 249.72 L733.9 248.37 L735.3 247.03 L736.71 245.69 L738.13 244.36 L739.56 243.02 L740.99 241.69 L742.43 240.36 L743.88 239.03 L745.34 237.71 L746.8 236.38 L748.27 235.06 L749.75 233.74 L751.23 232.42 L752.72 231.11 L754.22 229.8 L755.72 228.49 L757.23 227.18 L758.74 225.87 L760.27 224.57 L761.79 223.27 L763.32 221.98 L764.86 220.68 L766.4 219.39 L767.95 218.11 L769.5 216.82 L771.06 215.54 L772.62 214.27 L774.19 212.99 L775.76 211.72 L777.34 210.46 L778.91 209.19 L780.5 207.93 L782.08 206.68 L783.68 205.43 L785.27 204.18 L786.87 202.94 L788.47 201.7 L790.07 200.46 L791.68 199.23 L793.29 198.01 L794.9 196.79 L796.52 195.57 L798.13 194.36 L799.75 193.15 L801.37 191.95 L803 190.75 L804.62 189.56 L806.25 188.38 L807.87 187.2 L809.5 186.02 L811.13 184.85 L812.76 183.69 L814.39 182.54 L816.03 181.39 L817.66 180.24 L819.29 179.11 L820.93 177.98 L822.56 176.85 L824.19 175.74 L825.82 174.63 L827.46 173.53 L829.09 172.44 L830.72 171.35 L832.35 170.27 L833.98 169.2 L835.61 168.14 L837.24 167.09 L838.87 166.05 L840.49 165.01 L842.11 163.99 L843.74 162.97 L845.36 161.96 L846.98 160.97 L848.59 159.98 L850.21 159 L851.82 158.04 L853.43 157.08 L855.04 156.14 L856.65 155.21 L858.25 154.29 L859.85 153.38 L861.45 152.48 L863.05 151.6 L864.64 150.72 L866.23 149.86 L867.82 149.02 L869.41 148.19 L870.99 147.37 L872.58 146.56 L874.15 145.77 L875.73 145 L877.3 144.24 L878.88 143.49 L880.45 142.76 L882.01 142.05 L883.58 141.35 L885.14 140.67 L886.7 140"/>
<path stroke="#808080" stroke-opacity="0.4" d="M559.56 367.14 L559.74 365.74 L559.93 364.34 L560.14 362.94 L560.38 361.54 L560.63 360.14 L560.9 358.74 L561.18 357.34 L561.49 355.94 L561.82 354.54 L562.16 353.13 L562.53 351.73 L562.91 350.32 L563.31 348.92 L563.74 347.51 L564.18 346.11 L564.64 344.7 L565.12 343.29 L565.61 341.88 L566.13 340.48 L566.67 339.07 L567.22 337.66 L567.8 336.25 L568.39 334.84 L569 333.43 L569.63 332.02 L570.28 330.61 L570.95 329.2 L571.64 327.79 L572.35 326.38 L573.08 324.97 L573.82 323.56 L574.58 322.15 L575.37 320.73 L576.17 319.32 L576.99 317.91 L577.83 316.5 L578.68 315.09 L579.56 313.68 L580.45 312.27 L581.36 310.86 L582.3 309.45 L583.24 308.04 L584.21 306.63 L585.2 305.22 L586.2 303.81 L587.22 302.4 L588.26 300.99 L589.32 299.58 L590.39 298.18 L591.48 296.77 L592.59 295.36 L593.72 293.95 L594.87 292.55 L596.03 291.14 L597.21 289.74 L598.4 288.33 L599.62 286.93 L600.85 285.53 L602.1 284.12 L603.36 282.72 L604.64 281.32 L605.94 279.92 L607.25 278.52 L608.58 277.12 L609.93 275.72 L611.29 274.33 L612.67 272.93 L614.06 271.53 L615.47 270.14 L616.9 268.75 L618.34 267.35 L619.79 265.96 L621.27 264.57 L622.75 263.18 L624.25 261.8 L625.77 260.41 L627.3 259.03 L628.84 257.64 L630.4 256.26 L631.98 254.88 L633.57 253.5 L635.17 252.12 L636.78 250.74 L638.41 249.37 L640.05 247.99 L641.71 246.62 L643.38 245.25 L645.06 243.88 L646.75 242.52 L648.46 241.15 L650.18 239.79 L651.91 238.43 L653.66 237.07 L655.41 235.71 L657.18 234.35 L658.96 233 L660.75 231.65 L662.55 230.3 L664.36 228.95 L666.19 227.61 L668.02 226.27 L669.86 224.93 L671.72 223.59 L673.58 222.26 L675.46 220.92 L677.34 219.59 L679.23 218.27 L681.14 216.94 L683.05 215.62 L684.97 214.31 L686.9 212.99 L688.83 211.68 L690.78 210.37 L692.73 209.07 L694.69 207.77 L696.66 206.47 L698.64 205.17 L700.62 203.88 L702.61 202.6 L704.6 201.31 L706.61 200.03 L708.61 198.76 L710.63 197.49 L712.65 196.22 L714.67 194.96 L716.7 193.7 L718.73 192.44 L720.77 191.19 L722.81 189.95 L724.86 188.71 L726.91 187.48 L728.97 186.25 L731.02 185.02 L733.08 183.8 L735.15 182.59 L737.21 181.38 L739.28 180.18 L741.35 178.98 L743.42 177.79 L745.49 176.61 L747.57 175.43 L749.64 174.26 L751.71 173.1 L753.79 171.94 L755.86 170.79 L757.94 169.65 L760.01 168.51 L762.09 167.39 L764.16 166.27 L766.23 165.16 L768.3 164.05 L770.36 162.96 L772.43 161.87 L774.49 160.79 L776.54 159.73 L778.6 158.67 L780.65 157.62 L782.7 156.58 L784.74 155.55 L786.78 154.53 L788.82 153.52 L790.85 152.52 L792.87 151.53 L794.89 150.56 L796.9 149.59 L798.91 148.64 L800.91 147.7 L802.91 146.77 L804.9 145.86 L806.88 144.96 L808.85 144.07 L810.82 143.2 L812.78 142.34 L814.73 141.49 L816.67 140.66 L818.61 139.84 L820.53 139.04 L822.45 138.25 L824.36 137.49 L826.26 136.73 L828.15 136 L830.03 135.28 L831.9 134.57 L833.77 133.89 L835.62 133.22 L837.47 132.58 L839.3 131.95 L841.13 131.34 L842.94 130.75 L844.75 130.18 L846.54 129.63 L848.33 129.1 L850.11 128.59 L851.88 128.1 L853.64 127.63 L855.39 127.19 L857.13 126.77 L858.86 126.36 L860.58 125.99 L862.29 125.63 L864 125.3"/>
<path stroke="#808080" stroke-opacity="0.4" d="M561.64 409.03 L559.78 407.46 L557.94 405.89 L556.12 404.31 L554.34 402.74 L552.57 401.17 L550.83 399.59 L549.11 398.02 L547.42 396.45 L545.76 394.87 L544.11 393.3 L542.5 391.72 L540.91 390.15 L539.34 388.57 L537.8 387 L536.29 385.42 L534.8 383.84 L533.34 382.27 L531.91 380.69 L530.5 379.11 L529.11 377.53 L527.76 375.96 L526.43 374.38 L525.13 372.8 L523.85 371.22 L522.6 369.64 L521.38 368.06 L520.19 366.49 L519.02 364.91 L517.88 363.33 L516.77 361.75 L515.68 360.17 L514.62 358.59 L513.59 357.01 L512.59 355.43 L511.62 353.85 L510.67 352.27 L509.76 350.69 L508.87 349.11 L508 347.52 L507.17 345.94 L506.37 344.36 L505.59 342.78 L504.84 341.2 L504.12 339.62 L503.43 338.04 L502.77 336.46 L502.14 334.88 L501.53 333.29 L500.96 331.71 L500.41 330.13 L499.89 328.55 L499.4 326.97 L498.94 325.39 L498.51 323.8 L498.11 322.22 L497.73 320.64 L497.39 319.06 L497.07 317.48 L496.79 315.9 L496.53 314.31 L496.3 312.73 L496.1 311.15 L495.93 309.57 L495.79 307.99 L495.68 306.41 L495.6 304.83 L495.55 303.24 L495.53 301.66 L495.53 300.08 L495.57 298.5 L495.63 296.92 L495.72 295.34 L495.85 293.76 L496 292.18 L496.18 290.6 L496.39 289.02 L496.63 287.43 L496.9 285.85 L497.19 284.27 L497.52 282.69 L497.87 281.11 L498.26 279.53 L498.67 277.95 L499.11 276.38 L499.58 274.8 L500.08 273.22 L500.61 271.64 L501.17 270.06 L501.75 268.48 L502.36 266.9 L503.01 265.32 L503.68 263.75 L504.38 262.17 L505.1 260.59 L505.86 259.01 L506.64 257.44 L507.45 255.86 L508.29 254.28 L509.16 252.71 L510.06 251.13 L510.98 249.56 L511.93 247.98 L512.91 246.41 L513.91 244.83 L514.95 243.26 L516.01 241.68 L517.09 240.11 L518.21 238.54 L519.35 236.97 L520.52 235.39 L521.71 233.82 L522.93 232.25 L524.18 230.68 L525.46 229.11 L526.76 227.54 L528.08 225.97 L529.44 224.4 L530.81 222.83 L532.22 221.26 L533.65 219.69 L535.1 218.13 L536.58 216.56 L538.09 215 L539.62 213.43 L541.17 211.87 L542.75 210.3 L544.35 208.74 L545.98 207.17 L547.63 205.61 L549.31 204.05 L551.01 202.49 L552.73 200.93 L554.48 199.37 L556.25 197.81 L558.04 196.26 L559.85 194.7 L561.69 193.14 L563.55 191.59 L565.43 190.04 L567.34 188.48 L569.26 186.93 L571.21 185.38 L573.18 183.83 L575.17 182.28 L577.18 180.73 L579.21 179.19 L581.26 177.64 L583.33 176.1 L585.42 174.56 L587.53 173.01 L589.66 171.47 L591.81 169.94 L593.97 168.4 L596.16 166.86 L598.36 165.33 L600.58 163.8 L602.82 162.27 L605.07 160.74 L607.34 159.21 L609.63 157.68 L611.93 156.16 L614.25 154.64 L616.59 153.12 L618.93 151.6 L621.3 150.09 L623.67 148.58 L626.06 147.06 L628.47 145.56 L630.88 144.05 L633.31 142.55 L635.75 141.05 L638.2 139.55 L640.67 138.06 L643.14 136.57 L645.62 135.08 L648.11 133.6 L650.61 132.12 L653.11 130.64 L655.63 129.17 L658.15 127.7 L660.67 126.24 L663.2 124.78 L665.74 123.33 L668.28 121.88 L670.82 120.43 L673.36 118.99 L675.9 117.56 L678.44 116.13 L680.98 114.71 L683.52 113.3 L686.06 111.89 L688.59 110.49 L691.11 109.09 L693.62 107.71 L696.13 106.33 L698.63 104.96 L701.11 103.61 L703.58 102.26 L706.04 100.92 L708.47 99.59 L710.89 98.28 L713.29 96.97 L715.66 95.68 L718 94.4 L720.31 93.14 L722.6 91.89 L724.84 90.66 L727.05 89.45 L729.22 88.25 L731.34 87.08 L733.41 85.92 L735.42 84.79 L737.38 83.68 L739.28 82.59 L741.1 81.53 L742.85 80.5 L744.52 79.49 L746.11 78.52 L747.6 77.58M1055.49 76.67 L1051.5 75.8"/>
<path stroke="#808080" stroke-opacity="0.4" d="M589.79 396.56 L590.35 395.55 L590.92 394.55 L591.49 393.53 L592.07 392.52 L592.66 391.5 L593.26 390.48 L593.86 389.46 L594.47 388.43 L595.08 387.4 L595.71 386.36 L596.34 385.32 L596.98 384.28 L597.63 383.24 L598.28 382.19 L598.94 381.14 L599.62 380.09 L600.3 379.04 L600.98 377.98 L601.68 376.92 L602.38 375.86 L603.1 374.79 L603.82 373.72 L604.55 372.65 L605.29 371.58 L606.03 370.51 L606.79 369.43 L607.56 368.35 L608.33 367.27 L609.11 366.19 L609.91 365.1 L610.71 364.01 L611.52 362.92 L612.34 361.83 L613.17 360.74 L614.01 359.65 L614.86 358.55 L615.71 357.45 L616.58 356.35 L617.46 355.25 L618.34 354.15 L619.24 353.05 L620.15 351.94 L621.06 350.84 L621.99 349.73 L622.92 348.62 L623.86 347.51 L624.82 346.4 L625.78 345.29 L626.75 344.18 L627.73 343.06 L628.73 341.95 L629.73 340.83 L630.74 339.71 L631.76 338.6 L632.79 337.48 L633.83 336.36 L634.88 335.24 L635.94 334.12 L637.01 333 L638.08 331.88 L639.17 330.76 L640.27 329.64 L641.37 328.51 L642.49 327.39 L643.62 326.27 L644.75 325.14 L645.89 324.02 L647.05 322.9 L648.21 321.77 L649.38 320.65 L650.56 319.53 L651.75 318.4 L652.95 317.28 L654.16 316.16 L655.38 315.03 L656.6 313.91 L657.84 312.79 L659.08 311.66 L660.34 310.54 L661.6 309.42 L662.87 308.3 L664.15 307.18 L665.43 306.06 L666.73 304.94 L668.03 303.82 L669.34 302.7 L670.67 301.58 L671.99 300.47 L673.33 299.35 L674.68 298.24 L676.03 297.12 L677.39 296.01 L678.76 294.9 L680.14 293.78 L681.52 292.67 L682.91 291.56 L684.31 290.46 L685.72 289.35 L687.13 288.24 L688.55 287.14 L689.98 286.04 L691.42 284.94 L692.86 283.84 L694.31 282.74 L695.77 281.64 L697.23 280.55 L698.7 279.45 L700.18 278.36 L701.66 277.27 L703.15 276.18 L704.65 275.1 L706.15 274.01 L707.65 272.93 L709.17 271.85 L710.69 270.77 L712.21 269.7 L713.74 268.62 L715.28 267.55 L716.82 266.48 L718.37 265.42 L719.92 264.35 L721.48 263.29 L723.04 262.23 L724.61 261.18 L726.19 260.12 L727.76 259.07 L729.35 258.03 L730.93 256.98 L732.52 255.94 L734.12 254.9 L735.72 253.86 L737.32 252.83 L738.93 251.8 L740.54 250.77 L742.16 249.75 L743.77 248.73 L745.4 247.72 L747.02 246.7 L748.65 245.7 L750.28 244.69 L751.92 243.69 L753.56 242.69 L755.2 241.7 L756.84 240.71 L758.49 239.72 L760.14 238.74 L761.79 237.77 L763.44 236.79 L765.1 235.82 L766.75 234.86 L768.41 233.9 L770.08 232.95 L771.74 232 L773.4 231.05 L775.07 230.11 L776.74 229.18 L778.41 228.25 L780.08 227.32 L781.75 226.4 L783.42 225.49 L785.1 224.58 L786.77 223.68 L788.44 222.78 L790.12 221.89 L791.8 221 L793.47 220.12 L795.15 219.25 L796.83 218.38 L798.5 217.52 L800.18 216.66 L801.86 215.81 L803.54 214.97 L805.21 214.13 L806.89 213.31 L808.56 212.48 L810.24 211.67 L811.92 210.86 L813.59 210.06 L815.26 209.26 L816.94 208.48 L818.61 207.7 L820.28 206.93 L821.95 206.16 L823.62 205.41 L825.29 204.66 L826.96 203.92 L828.62 203.19 L830.29 202.46 L831.95 201.75 L833.61 201.04 L835.27 200.34 L836.93 199.65 L838.59 198.97 L840.25 198.3 L841.9 197.64 L843.55 196.98 L845.2 196.34 L846.85 195.7 L848.5 195.08 L850.15 194.46 L851.8 193.86 L853.44 193.26 L855.08 192.67 L856.72 192.1 L858.36 191.53 L860 190.98 L861.63 190.43 L863.27 189.9 L864.9 189.38 L866.53 188.86 L868.16 188.36 L869.79 187.87 L871.41 187.39 L873.04 186.92 L874.66 186.46 L876.28 186.02 L877.9 185.58 L879.52 185.16 L881.14 184.75 L882.76 184.35 L884.38 183.97 L885.99 183.59 L887.61 183.23 L889.22 182.88 L890.83 182.54 L892.44 182.21 L894.06 181.9 L895.67 181.6 L897.28 181.31 L898.89 181.04 L900.5 180.78 L902.11 180.53 L903.72 180.29 L905.33 180.07 L906.94 179.86 L908.55 179.66 L910.16 179.47 L911.77 179.3 L913.39 179.14 L915 179"/>
<path stroke="#808080" stroke-opacity="0.4" d="M808.8 476.38 L807.05 476.1 L805.29 475.82 L803.52 475.51 L801.74 475.2 L799.96 474.87 L798.16 474.52 L796.36 474.16 L794.55 473.78 L792.73 473.39 L790.9 472.99 L789.07 472.57 L787.22 472.14 L785.37 471.69 L783.51 471.23 L781.64 470.76 L779.76 470.27 L777.88 469.77 L775.98 469.26 L774.08 468.73 L772.17 468.19 L770.25 467.64 L768.33 467.08 L766.4 466.5 L764.45 465.91 L762.51 465.31 L760.55 464.7 L758.59 464.08 L756.62 463.44 L754.64 462.79 L752.66 462.13 L750.67 461.46 L748.67 460.78 L746.67 460.09 L744.66 459.39 L742.65 458.67 L740.63 457.95 L738.6 457.22 L736.57 456.47 L734.53 455.72 L732.49 454.96 L730.45 454.18 L728.4 453.4 L726.34 452.61 L724.28 451.81 L722.22 451 L720.15 450.18 L718.08 449.35 L716 448.51 L713.93 447.67 L711.85 446.81 L709.76 445.95 L707.68 445.08 L705.59 444.21 L703.5 443.32 L701.41 442.43 L699.32 441.53 L697.22 440.62 L695.12 439.71 L693.03 438.78 L690.93 437.85 L688.83 436.92 L686.74 435.98 L684.64 435.03 L682.54 434.07 L680.44 433.11 L678.35 432.14 L676.25 431.17 L674.16 430.18 L672.07 429.2 L669.98 428.21 L667.89 427.21 L665.8 426.2 L663.72 425.19 L661.64 424.18 L659.56 423.16 L657.48 422.13 L655.41 421.1 L653.34 420.07 L651.28 419.03 L649.22 417.98 L647.16 416.93 L645.11 415.88 L643.06 414.82 L641.02 413.75 L638.98 412.68 L636.95 411.61 L634.93 410.53 L632.91 409.45 L630.89 408.37 L628.88 407.28 L626.88 406.19 L624.89 405.09 L622.9 403.99 L620.92 402.89 L618.95 401.78 L616.98 400.67 L615.02 399.55 L613.07 398.44 L611.13 397.31 L609.2 396.19 L607.27 395.06 L605.36 393.93 L603.45 392.8 L601.55 391.66 L599.66 390.52 L597.78 389.38 L595.92 388.24 L594.06 387.09 L592.21 385.94 L590.37 384.78 L588.54 383.63 L586.72 382.47 L584.91 381.31 L583.11 380.15 L581.33 378.98 L579.56 377.82 L577.79 376.65 L576.04 375.48 L574.3 374.3 L572.57 373.13 L570.86 371.95 L569.16 370.77 L567.47 369.59 L565.79 368.41 L564.12 367.22 L562.47 366.04 L560.83 364.85 L559.2 363.66 L557.59 362.47 L555.99 361.28 L554.41 360.08 L552.83 358.89 L551.28 357.69 L549.73 356.49 L548.2 355.29 L546.68 354.09 L545.18 352.89 L543.7 351.69 L542.22 350.48 L540.76 349.28 L539.32 348.07 L537.89 346.87 L536.48 345.66 L535.08 344.45 L533.7 343.24 L532.33 342.03 L530.98 340.82 L529.64 339.61 L528.32 338.4 L527.01 337.18 L525.72 335.97 L524.45 334.76 L523.19 333.54 L521.95 332.33 L520.72 331.11 L519.51 329.9 L518.32 328.68 L517.14 327.47 L515.98 326.25 L514.84 325.03 L513.71 323.82 L512.6 322.6 L511.5 321.38 L510.42 320.17 L509.36 318.95 L508.32 317.73 L507.29 316.52 L506.28 315.3 L505.28 314.08 L504.3 312.87 L503.34 311.65 L502.4 310.43 L501.47 309.22 L500.56 308 L499.67 306.79 L498.79 305.58 L497.93 304.36 L497.09 303.15 L496.26 301.94 L495.46 300.72 L494.66 299.51 L493.89 298.3 L493.13 297.09 L492.39 295.88 L491.67 294.68 L490.96 293.47 L490.27 292.26 L489.6 291.06 L488.94 289.85 L488.31 288.65 L487.68 287.45 L487.08 286.25 L486.49 285.05 L485.92 283.85 L485.36 282.65 L484.82 281.45 L484.3 280.26 L483.79 279.06 L483.31 277.87 L482.83 276.68 L482.37 275.49 L481.93 274.31 L481.51 273.12 L481.1 271.94 L480.71 270.75 L480.33 269.57 L479.97 268.4 L479.62 267.22 L479.29 266.04 L478.98 264.87 L478.68 263.7 L478.39 262.53 L478.12 261.37 L477.87 260.2 L477.63 259.04 L477.4 257.88 L477.19 256.73 L476.99 255.57 L476.81 254.42 L476.64 253.27 L476.49 252.12 L476.35 250.98 L476.22 249.84 L476.1 248.7 L476 247.56 L475.91 246.43 L475.84 245.3 L475.78 244.18 L475.73 243.05 L475.69 241.93 L475.66 240.82 L475.65 239.7 L475.64 238.59 L475.65 237.49 L475.67 236.39 L475.7 235.29 L475.74 234.19 L475.79 233.1 L475.85 232.01 L475.92 230.93 L476 229.85 L476.09 228.78 L476.19 227.7 L476.29 226.64 L476.41 225.58 L476.53 224.52 L476.66 223.47 L476.8 222.42 L476.95 221.37 L477.1 220.33 L477.26 219.3 L477.42 218.27 L477.59 217.25 L477.76 216.23 L477.94 215.22 L478.13 214.21 L478.32 213.21 L478.51 212.21 L478.71 211.22 L478.91 210.24 L479.11 209.26 L479.31 208.29 L479.52 207.32 L479.72 206.36 L479.93 205.41 L480.14 204.46 L480.35 203.52 L480.56 202.59 L480.76 201.66 L480.97 200.74 L481.17 199.83 L481.37 198.92 L481.57 198.03 L481.76 197.14 L481.95 196.25 L482.14 195.38 L482.32 194.51 L482.5 193.66 L482.67 192.81 L482.83 191.96 L482.98 191.13 L483.13 190.31 L483.27 189.49 L483.4 188.68 L483.52 187.89 L483.63 187.1 L483.73 186.32 L483.81 185.55 L483.89 184.79 L483.95 184.04 L484 183.3"/>
<path stroke="#808080" stroke-opacity="0.4" d="M898.86 515.89 L900.29 515.17 L901.72 514.42 L903.16 513.66 L904.59 512.88 L906.02 512.08 L907.46 511.26 L908.89 510.43 L910.33 509.58 L911.77 508.71 L913.2 507.83 L914.64 506.93 L916.08 506.02 L917.52 505.09 L918.97 504.15 L920.41 503.19 L921.86 502.22 L923.31 501.24 L924.76 500.24 L926.21 499.23 L927.66 498.21 L929.11 497.18 L930.57 496.13 L932.02 495.08 L933.48 494.01 L934.94 492.93 L936.4 491.84 L937.86 490.74 L939.33 489.64 L940.79 488.52 L942.26 487.39 L943.72 486.26 L945.19 485.11 L946.66 483.96 L948.13 482.8 L949.59 481.63 L951.06 480.45 L952.53 479.26 L954 478.07 L955.47 476.87 L956.95 475.66 L958.42 474.45 L959.89 473.23 L961.36 472 L962.82 470.77 L964.29 469.53 L965.76 468.28 L967.23 467.03 L968.69 465.78 L970.16 464.51 L971.62 463.25 L973.09 461.97 L974.55 460.69 L976.01 459.41 L977.46 458.12 L978.92 456.83 L980.37 455.53 L981.83 454.23 L983.28 452.92 L984.72 451.61 L986.17 450.3 L987.61 448.98 L989.05 447.66 L990.48 446.33 L991.92 445 L993.35 443.66 L994.77 442.33 L996.2 440.99 L997.62 439.64 L999.03 438.29 L1000.44 436.94 L1001.85 435.59 L1003.26 434.23 L1004.66 432.87 L1006.05 431.51 L1007.44 430.14 L1008.83 428.78 L1010.21 427.41 L1011.59 426.03 L1012.96 424.66 L1014.32 423.28 L1015.69 421.9 L1017.04 420.51 L1018.39 419.13 L1019.74 417.74 L1021.08 416.35 L1022.41 414.96 L1023.74 413.56 L1025.06 412.17 L1026.37 410.77 L1027.68 409.37 L1028.98 407.97 L1030.28 406.56 L1031.57 405.16 L1032.85 403.75 L1034.13 402.34 L1035.4 400.93 L1036.66 399.52 L1037.91 398.11 L1039.16 396.69 L1040.4 395.27 L1041.63 393.86 L1042.85 392.44 L1044.07 391.02 L1045.28 389.59 L1046.48 388.17 L1047.67 386.75 L1048.86 385.32 L1050.03 383.89 L1051.2 382.46 L1052.36 381.04 L1053.51 379.61 L1054.66 378.17 L1055.79 376.74 L1056.91 375.31 L1058.03 373.87 L1059.14 372.44 L1060.24 371 L1061.32 369.57 L1062.4 368.13 L1063.47 366.69 L1064.54 365.25 L1065.59 363.81 L1066.63 362.37 L1067.66 360.93 L1068.68 359.49 L1069.7 358.05 L1070.7 356.6 L1071.69 355.16 L1072.67 353.71 L1073.65 352.27 L1074.61 350.82 L1075.56 349.38 L1076.5 347.93 L1077.43 346.48 L1078.35 345.04 L1079.26 343.59 L1080.16 342.14 L1081.05 340.69 L1081.93 339.25 L1082.8 337.8 L1083.66 336.35 L1084.5 334.9 L1085.34 333.45 L1086.16 332 L1086.97 330.55 L1087.77 329.1 L1088.56 327.65 L1089.34 326.2 L1090.11 324.75 L1090.87 323.3 L1091.61 321.85 L1092.35 320.4 L1093.07 318.95 L1093.78 317.5 L1094.48 316.04 L1095.16 314.59 L1095.84 313.14 L1096.5 311.69 L1097.16 310.24 L1097.8 308.79 L1098.43 307.34 L1099.04 305.89 L1099.65 304.45 L1100.24 303 L1100.82 301.55 L1101.39 300.1 L1101.95 298.65 L1102.49 297.2 L1103.03 295.76 L1103.55 294.31 L1104.06 292.86 L1104.56 291.41 L1105.04 289.97 L1105.51 288.52 L1105.97 287.08 L1106.42 285.63 L1106.86 284.19 L1107.29 282.75 L1107.7 281.3 L1108.1 279.86 L1108.49 278.42 L1108.86 276.98 L1109.23 275.54 L1109.58 274.1 L1109.92 272.66 L1110.25 271.23 L1110.56 269.79 L1110.86 268.35 L1111.16 266.92 L1111.44 265.48 L1111.7 264.05 L1111.96 262.62 L1112.2 261.19 L1112.43 259.76 L1112.65 258.33 L1112.86 256.9 L1113.06 255.47 L1113.24 254.05 L1113.41 252.62 L1113.57 251.2 L1113.72 249.78 L1113.86 248.36 L1113.98 246.94 L1114.1 245.52 L1114.2 244.1 L1114.29 242.69 L1114.37 241.27 L1114.44 239.86 L1114.49 238.45 L1114.54 237.04 L1114.57 235.64 L1114.6 234.23 L1114.61 232.83 L1114.61 231.42 L1114.6 230.02 L1114.58 228.63 L1114.55 227.23 L1114.51 225.84 L1114.45 224.44 L1114.39 223.05 L1114.32 221.67 L1114.23 220.28 L1114.14 218.9 L1114.04 217.52 L1113.92 216.14 L1113.8 214.76 L1113.67 213.39 L1113.52 212.02 L1113.37 210.65 L1113.21 209.28 L1113.04 207.92 L1112.86 206.56 L1112.67 205.2 L1112.48 203.85 L1112.27 202.5 L1112.06 201.15 L1111.84 199.81 L1111.61 198.47 L1111.37 197.13 L1111.12 195.79 L1110.87 194.46 L1110.61 193.14 L1110.34 191.82 L1110.07 190.5 L1109.79 189.18 L1109.5 187.87 L1109.21 186.56 L1108.91 185.26 L1108.61 183.96 L1108.3 182.67 L1107.98 181.38 L1107.66 180.1 L1107.34 178.82 L1107.01 177.55 L1106.68 176.28 L1106.34 175.02 L1106 173.76 L1105.66 172.51 L1105.32 171.26 L1104.97 170.02 L1104.62 168.79 L1104.27 167.56 L1103.92 166.34 L1103.56 165.13 L1103.21 163.92 L1102.86 162.72 L1102.5 161.53 L1102.15 160.34 L1101.8 159.17 L1101.46 158 L1101.11 156.84 L1100.77 155.68 L1100.43 154.54 L1100.09 153.4 L1099.76 152.28 L1099.44 151.16 L1099.12 150.05 L1098.81 148.95 L1098.5 147.86 L1098.21 146.79 L1097.92 145.72 L1097.64 144.66 L1097.37 143.62 L1097.11 142.59 L1096.86 141.56 L1096.63 140.56 L1096.41 139.56 L1096.2 138.58 L1096.01 137.61 L1095.83 136.65 L1095.67 135.71 L1095.53 134.78 L1095.41 133.87 L1095.31 132.97 L1095.23 132.08 L1095.17 131.22 L1095.13 130.37 L1095.12 129.53 L1095.13 128.72 L1095.17 127.92 L1095.23 127.14 L1095.33 126.37 L1095.45 125.63 L1095.61 124.9 L1095.8 124.2"/>
<path stroke="#808080" stroke-opacity="0.4" d="M535.97 468.57 L532.44 467 L528.93 465.43 L525.45 463.86 L521.99 462.29 L518.56 460.72 L515.16 459.15 L511.78 457.58 L508.43 456 L505.1 454.43 L501.8 452.85 L498.53 451.28 L495.29 449.7 L492.07 448.13 L488.88 446.55 L485.72 444.97 L482.59 443.39 L479.49 441.81 L476.42 440.23 L473.38 438.66 L470.36 437.07 L467.38 435.49 L464.43 433.91 L461.51 432.33 L458.62 430.75 L455.76 429.17 L452.93 427.58 L450.14 426 L447.37 424.42 L444.64 422.83 L441.94 421.25 L439.28 419.66 L436.64 418.08 L434.04 416.49 L431.47 414.9 L428.94 413.32 L426.44 411.73 L423.98 410.14 L421.54 408.56 L419.15 406.97 L416.78 405.38 L414.46 403.79 L412.16 402.2 L409.91 400.62 L407.68 399.03 L405.5 397.44 L403.35 395.85 L401.23 394.26 L399.15 392.67 L397.11 391.08 L395.11 389.49 L393.14 387.9 L391.2 386.31 L389.31 384.72 L387.45 383.13 L385.63 381.53 L383.85 379.94 L382.1 378.35 L380.39 376.76 L378.72 375.17 L377.09 373.58 L375.49 371.98 L373.94 370.39 L372.42 368.8 L370.94 367.21 L369.5 365.61 L368.1 364.02 L366.74 362.43 L365.41 360.84 L364.13 359.24 L362.88 357.65 L361.67 356.06 L360.51 354.46 L359.38 352.87 L358.29 351.28 L357.24 349.68 L356.23 348.09 L355.27 346.5 L354.34 344.9 L353.45 343.31 L352.6 341.71 L351.79 340.12 L351.02 338.53 L350.29 336.93 L349.6 335.34 L348.96 333.74 L348.35 332.15 L347.78 330.56 L347.25 328.96 L346.77 327.37 L346.32 325.77 L345.92 324.18 L345.55 322.58 L345.23 320.99 L344.95 319.4 L344.7 317.8 L344.5 316.21 L344.34 314.61 L344.22 313.02 L344.14 311.42 L344.1 309.83 L344.1 308.24 L344.15 306.64 L344.23 305.05 L344.35 303.45 L344.52 301.86 L344.73 300.27 L344.97 298.67 L345.26 297.08 L345.59 295.48 L345.95 293.89 L346.36 292.3 L346.81 290.7 L347.3 289.11 L347.83 287.52 L348.4 285.92 L349.01 284.33 L349.66 282.74 L350.36 281.14 L351.09 279.55 L351.86 277.96 L352.67 276.36 L353.52 274.77 L354.41 273.18 L355.35 271.59 L356.32 269.99 L357.33 268.4 L358.38 266.81 L359.47 265.22 L360.6 263.63 L361.77 262.03 L362.97 260.44 L364.22 258.85 L365.51 257.26 L366.83 255.67 L368.19 254.08 L369.6 252.49 L371.04 250.9 L372.52 249.31 L374.03 247.72 L375.59 246.13 L377.18 244.54 L378.81 242.95 L380.48 241.36 L382.19 239.77 L383.93 238.18 L385.71 236.59 L387.53 235.01 L389.38 233.42 L391.28 231.83 L393.2 230.24 L395.17 228.66 L397.17 227.07 L399.21 225.48 L401.28 223.9 L403.39 222.31 L405.53 220.73 L407.71 219.14 L409.92 217.56 L412.17 215.97 L414.46 214.39 L416.78 212.81 L419.13 211.22 L421.52 209.64 L423.94 208.06 L426.39 206.48 L428.88 204.89 L431.4 203.31 L433.95 201.73 L436.54 200.15 L439.16 198.58 L441.81 197 L444.49 195.42 L447.2 193.84 L449.95 192.26 L452.72 190.69 L455.53 189.11M1345.83 187.54 L1342.21 185.96 L1338.55 184.39 L1334.86 182.82 L1331.15 181.24 L1327.4 179.67 L1323.63 178.1 L1319.83 176.53 L1316 174.96 L1312.14 173.39 L1308.26 171.83 L1304.35 170.26 L1300.41 168.7 L1296.45 167.13 L1292.47 165.57 L1288.45 164.01 L1284.42 162.44 L1280.36 160.88 L1276.27 159.33 L1272.17 157.77 L1268.04 156.21 L1263.89 154.66 L1259.71 153.1 L1255.52 151.55 L1251.3 150"/>
<path stroke="#808080" stroke-opacity="0.4" d="M964 467 L963.07 465.97 L962.15 464.94 L961.23 463.9 L960.3 462.85 L959.38 461.79 L958.46 460.73 L957.54 459.65 L956.62 458.57 L955.69 457.48 L954.77 456.39 L953.85 455.29 L952.93 454.18 L952.01 453.06 L951.08 451.94 L950.16 450.82 L949.24 449.68 L948.31 448.54 L947.39 447.4 L946.46 446.25 L945.54 445.09 L944.61 443.93 L943.69 442.76 L942.76 441.59 L941.83 440.41 L940.9 439.23 L939.97 438.04 L939.04 436.85 L938.11 435.65 L937.18 434.45 L936.24 433.24 L935.31 432.03 L934.37 430.81 L933.44 429.6 L932.5 428.37 L931.56 427.15 L930.62 425.91 L929.68 424.68 L928.74 423.44 L927.8 422.2 L926.86 420.95 L925.92 419.7 L924.97 418.45 L924.03 417.19 L923.08 415.93 L922.14 414.67 L921.19 413.41 L920.24 412.14 L919.29 410.87 L918.35 409.59 L917.4 408.32 L916.45 407.04 L915.5 405.75 L914.54 404.47 L913.59 403.18 L912.64 401.89 L911.69 400.6 L910.74 399.3 L909.78 398 L908.83 396.71 L907.87 395.4 L906.92 394.1 L905.97 392.79 L905.01 391.49 L904.06 390.18 L903.1 388.86 L902.15 387.55 L901.19 386.23 L900.24 384.92 L899.28 383.6 L898.33 382.28 L897.37 380.95 L896.42 379.63 L895.47 378.3 L894.51 376.98 L893.56 375.65 L892.61 374.32 L891.66 372.99 L890.7 371.65 L889.75 370.32 L888.8 368.98 L887.85 367.65 L886.9 366.31 L885.95 364.97 L885.01 363.63 L884.06 362.29 L883.12 360.95 L882.17 359.6 L881.23 358.26 L880.28 356.91 L879.34 355.57 L878.4 354.22 L877.46 352.87 L876.53 351.52 L875.59 350.18 L874.65 348.83 L873.72 347.48 L872.79 346.12 L871.86 344.77 L870.93 343.42 L870 342.07 L869.08 340.71 L868.15 339.36 L867.23 338.01 L866.31 336.65 L865.39 335.3 L864.47 333.94 L863.56 332.59 L862.65 331.23 L861.74 329.87 L860.83 328.52 L859.92 327.16 L859.02 325.8 L858.12 324.45 L857.22 323.09 L856.32 321.73 L855.43 320.38 L854.53 319.02 L853.64 317.66 L852.76 316.3 L851.87 314.95 L850.99 313.59 L850.11 312.23 L849.24 310.88 L848.36 309.52 L847.49 308.17 L846.63 306.81 L845.76 305.45 L844.9 304.1 L844.04 302.74 L843.19 301.39 L842.33 300.04 L841.48 298.68 L840.64 297.33 L839.79 295.98 L838.95 294.63 L838.12 293.28 L837.29 291.92 L836.46 290.57 L835.63 289.23 L834.81 287.88 L833.99 286.53 L833.17 285.18 L832.36 283.84 L831.55 282.49 L830.75 281.15 L829.94 279.8 L829.15 278.46 L828.35 277.12 L827.56 275.78 L826.77 274.44 L825.99 273.1 L825.21 271.77 L824.44 270.43 L823.67 269.1 L822.9 267.77 L822.13 266.43 L821.37 265.1 L820.62 263.78 L819.87 262.45 L819.12 261.12 L818.37 259.8 L817.63 258.48 L816.9 257.15 L816.17 255.84 L815.44 254.52 L814.71 253.2 L813.99 251.89 L813.28 250.58 L812.57 249.27 L811.86 247.96 L811.15 246.65 L810.45 245.35 L809.76 244.05 L809.07 242.75 L808.38 241.45 L807.7 240.16 L807.02 238.86 L806.34 237.57 L805.67 236.29 L805 235"/>
<path stroke="#2d708e" d="M429.2 245.3 L430.54 243.73 L431.91 242.15 L433.31 240.58 L434.75 239.01 L436.21 237.44 L437.71 235.87 L439.25 234.3 L440.81 232.73 L442.41 231.16 L444.04 229.59 L445.7 228.02 L447.4 226.45 L449.12 224.88 L450.88 223.31 L452.67 221.75 L454.49 220.18 L456.33 218.61 L458.21 217.05 L460.13 215.48 L462.07 213.92 L464.04 212.36 L466.04 210.79 L468.07 209.23 L470.13 207.67 L472.22 206.11 L474.33 204.55 L476.48 202.99 L478.66 201.43 L480.86 199.87 L483.09 198.31 L485.35 196.75 L487.64 195.2 L489.95 193.64 L492.29 192.09 L494.66 190.53 L497.06 188.98 L499.48 187.43 L501.92 185.88 L504.4 184.33 L506.9 182.78 L509.42 181.23 L511.97 179.69 L514.54 178.14 L517.14 176.6 L519.76 175.06 L522.4 173.51 L525.07 171.97 L527.76 170.43 L530.47 168.9 L533.21 167.36 L535.97 165.83 L538.75 164.29 L541.55 162.76 L544.37 161.23 L547.21 159.7 L550.07 158.18 L552.95 156.65 L555.85 155.13 L558.76 153.61 L561.7 152.09 L564.65 150.58 L567.62 149.06 L570.61 147.55 L573.61 146.04 L576.63 144.53 L579.66 143.03 L582.71 141.53 L585.77 140.03 L588.85 138.53 L591.94 137.04 L595.04 135.55 L598.15 134.06 L601.27 132.58 L604.4 131.1M429.8 249.3 L431.33 247.68 L432.89 246.06 L434.48 244.45 L436.11 242.83 L437.78 241.21 L439.48 239.6 L441.21 237.98 L442.98 236.36 L444.79 234.74 L446.63 233.13 L448.5 231.51 L450.41 229.89 L452.35 228.28 L454.32 226.66 L456.33 225.04 L458.37 223.42 L460.45 221.81 L462.55 220.19 L464.69 218.57 L466.87 216.96 L469.07 215.34 L471.31 213.73 L473.58 212.11 L475.89 210.49 L478.22 208.88 L480.59 207.26 L482.98 205.64 L485.41 204.03 L487.87 202.41 L490.36 200.8 L492.89 199.18 L495.44 197.57 L498.02 195.95 L500.63 194.33 L503.28 192.72 L505.95 191.1 L508.65 189.49 L511.38 187.87 L514.14 186.26 L516.93 184.65 L519.75 183.03 L522.6 181.42 L525.47 179.8 L528.37 178.19 L531.3 176.57 L534.26 174.96 L537.24 173.35 L540.26 171.73 L543.29 170.12 L546.36 168.51 L549.45 166.89 L552.57 165.28 L555.71 163.67 L558.88 162.06 L562.07 160.44 L565.29 158.83 L568.53 157.22 L571.8 155.61 L575.09 154 L578.41 152.39 L581.74 150.78 L585.11 149.17 L588.49 147.56 L591.9 145.95 L595.33 144.34 L598.78 142.73 L602.26 141.12 L605.75 139.51 L609.27 137.9 L612.8 136.3 L616.36 134.69 L619.94 133.08 L623.54 131.48 L627.16 129.87 L630.79 128.26 L634.45 126.66 L638.12 125.06 L641.81 123.45 L645.52 121.85 L649.25 120.25 L653 118.64 L656.76 117.04 L660.53 115.44 L664.33 113.84 L668.13 112.24 L671.96 110.65 L675.8 109.05 L679.65 107.45 L683.51 105.86 L687.39 104.27 L691.28 102.67 L695.18 101.08 L699.1 99.49 L703.02 97.9 L706.96 96.32 L710.91 94.73 L714.86 93.15 L718.82 91.56 L722.79 89.98 L726.77 88.41 L730.75 86.83 L734.74 85.26 L738.73 83.69 L742.73 82.12 L746.73 80.56 L750.73 79 L754.72 77.44 L758.72 75.89 L762.71 74.34 L766.7 72.8M441.5 245 L443.75 243.53 L446.03 242.06 L448.34 240.6 L450.67 239.13 L453.03 237.66 L455.42 236.2 L457.83 234.74 L460.27 233.28 L462.73 231.82 L465.22 230.36 L467.73 228.9 L470.27 227.45 L472.83 226 L475.42 224.54 L478.03 223.09 L480.66 221.64 L483.32 220.2 L486 218.75 L488.7 217.31 L491.43 215.86 L494.17 214.42 L496.94 212.99 L499.73 211.55 L502.54 210.12 L505.37 208.68 L508.22 207.25 L511.09 205.83 L513.98 204.4 L516.89 202.98 L519.82 201.56 L522.77 200.14 L525.74 198.72 L528.72 197.31 L531.72 195.9 L534.74 194.49 L537.77 193.09 L540.82 191.68 L543.88 190.28 L546.96 188.89 L550.06 187.49 L553.17 186.1 L556.29 184.72 L559.43 183.33 L562.58 181.96 L565.74 180.58 L568.91 179.21 L572.1 177.84 L575.3 176.47 L578.5 175.11 L581.72 173.76 L584.95 172.4 L588.19 171.06 L591.43 169.71 L594.68 168.37 L597.94 167.04 L601.21 165.71 L604.48 164.39 L607.76 163.07 L611.04 161.76 L614.33 160.45 L617.62 159.15 L620.92 157.85 L624.22 156.56 L627.52 155.28 L630.82 154 L634.12 152.73 L637.42 151.47 L640.72 150.21 L644.02 148.96 L647.31 147.72 L650.61 146.49 L653.9 145.26 L657.18 144.05 L660.46 142.84 L663.74 141.64 L667 140.45 L670.26 139.27 L673.51 138.1 L676.75 136.94 L679.98 135.79 L683.2 134.65 L686.41 133.52 L689.61 132.4 L692.79 131.3 L695.95 130.2 L699.1 129.12 L702.24 128.06 L705.35 127 L708.45 125.96 L711.53 124.94 L714.58 123.93 L717.62 122.93 L720.63 121.95 L723.62 120.99 L726.59 120.04 L729.53 119.11 L732.44 118.2 L735.32 117.31 L738.18 116.44 L741.01 115.58 L743.8 114.75 L746.57 113.93 L749.3 113.14 L752 112.37 L754.66 111.62 L757.29 110.9 L759.88 110.2 L762.44 109.52 L764.95 108.87 L767.43 108.24 L769.87 107.64 L772.27 107.07 L774.63 106.52 L776.95 106 L779.23 105.51 L781.46 105.05 L783.65 104.62 L785.8 104.21 L787.91 103.84 L789.97 103.5 L791.99 103.19 L793.97 102.91 L795.9 102.67 L797.79 102.45 L799.64 102.27 L801.45 102.13 L803.21 102.01 L804.93 101.93 L806.61 101.88 L808.25 101.87 L809.85 101.88 L811.42 101.94 L812.94 102.02 L814.42 102.14 L815.87 102.29 L817.29 102.47 L818.66 102.69 L820.01 102.94 L821.32 103.22 L822.6 103.53 L823.85 103.88 L825.07 104.25 L826.26 104.66 L827.43 105.09 L828.56 105.56 L829.68 106.05 L830.77 106.57 L831.83 107.12 L832.88 107.7 L833.9 108.3M445.5 246.5 L447.46 244.91 L449.45 243.32 L451.48 241.73 L453.54 240.14 L455.63 238.56 L457.75 236.97 L459.9 235.38 L462.09 233.79 L464.3 232.21 L466.55 230.62 L468.83 229.03 L471.14 227.45 L473.48 225.86 L475.86 224.28 L478.26 222.69 L480.69 221.11 L483.15 219.52 L485.64 217.94 L488.17 216.35 L490.72 214.77 L493.3 213.19 L495.91 211.6 L498.54 210.02 L501.21 208.44 L503.9 206.86 L506.62 205.28 L509.37 203.7 L512.15 202.12 L514.95 200.54 L517.78 198.96 L520.64 197.38 L523.53 195.81 L526.44 194.23 L529.37 192.65 L532.33 191.08 L535.32 189.5 L538.33 187.93 L541.37 186.35 L544.43 184.78 L547.51 183.21 L550.62 181.64 L553.76 180.07 L556.91 178.5 L560.09 176.93 L563.29 175.36 L566.52 173.79 L569.76 172.22 L573.03 170.66 L576.32 169.09 L579.63 167.53 L582.96 165.97 L586.31 164.41 L589.68 162.85 L593.07 161.29 L596.48 159.73 L599.91 158.17 L603.36 156.62 L606.83 155.06 L610.31 153.51 L613.81 151.96 L617.33 150.41 L620.86 148.86 L624.41 147.31 L627.98 145.77 L631.56 144.23 L635.16 142.69 L638.77 141.15 L642.39 139.61 L646.03 138.07 L649.68 136.54 L653.34 135.01 L657.02 133.48 L660.71 131.96 L664.4 130.43 L668.11 128.91 L671.83 127.39 L675.56 125.88 L679.29 124.37 L683.03 122.86 L686.78 121.35 L690.54 119.85 L694.3 118.35 L698.07 116.86 L701.84 115.37 L705.62 113.88 L709.4 112.4 L713.18 110.93 L716.96 109.46 L720.74 107.99 L724.52 106.53 L728.3 105.07 L732.08 103.63 L735.85 102.19 L739.62 100.75 L743.38 99.32 L747.13 97.91 L750.88 96.5 L754.62 95.09 L758.34 93.7 L762.05 92.32 L765.75 90.95 L769.43 89.59 L773.09 88.24 L776.73 86.91 L780.35 85.59 L783.94 84.28 L787.51 83 L791.05 81.72 L794.56 80.47 L798.03 79.24 L801.47 78.02 L804.87 76.83 L808.22 75.67 L811.53 74.53 L814.78 73.42 L817.99 72.34 L821.14 71.29 L824.22 70.28 L827.24 69.3 L830.2 68.37 L833.08 67.47 L835.88 66.63 L838.61 65.83 L841.25 65.08 L843.8 64.39 L846.27 63.76 L848.64 63.19 L850.92 62.68 L853.1 62.24 L855.19 61.87 L857.18 61.57 L859.07 61.35 L860.87 61.2 L862.57 61.12 L864.19 61.13 L865.72 61.21 L867.17 61.36 L868.54 61.6 L869.85 61.9 L871.08 62.28 L872.26 62.72 L873.37 63.24 L874.44 63.81 L875.46 64.45 L876.44 65.15 L877.39 65.9 L878.3 66.7M466.8 242.7 L468.47 241.08 L470.17 239.45 L471.91 237.83 L473.67 236.21 L475.47 234.59 L477.3 232.96 L479.17 231.34 L481.06 229.72 L482.99 228.09 L484.95 226.47 L486.94 224.85 L488.97 223.22 L491.02 221.6 L493.1 219.98 L495.22 218.36 L497.37 216.73 L499.55 215.11 L501.75 213.49 L503.99 211.86 L506.26 210.24 L508.56 208.62 L510.89 207 L513.24 205.37 L515.63 203.75 L518.05 202.13 L520.49 200.5 L522.97 198.88 L525.47 197.26 L528 195.63 L530.56 194.01 L533.15 192.39 L535.76 190.77 L538.41 189.14 L541.08 187.52 L543.78 185.9 L546.5 184.27 L549.26 182.65 L552.04 181.03 L554.84 179.41 L557.67 177.78 L560.53 176.16 L563.41 174.54 L566.32 172.91 L569.26 171.29 L572.22 169.67 L575.2 168.05 L578.21 166.42 L581.25 164.8 L584.31 163.18 L587.39 161.55 L590.5 159.93 L593.63 158.31 L596.78 156.69 L599.96 155.06 L603.15 153.44 L606.38 151.82 L609.62 150.2 L612.89 148.57 L616.18 146.95 L619.49 145.33 L622.82 143.7 L626.17 142.08 L629.54 140.46 L632.94 138.84 L636.35 137.21 L639.78 135.59 L643.24 133.97 L646.71 132.35 L650.2 130.72 L653.72 129.1 L657.25 127.48 L660.8 125.85 L664.36 124.23 L667.95 122.61 L671.55 120.99 L675.17 119.36 L678.81 117.74 L682.47 116.12 L686.14 114.5 L689.82 112.87 L693.53 111.25 L697.25 109.63 L700.98 108.01 L704.73 106.39 L708.5 104.76 L712.27 103.14 L716.07 101.52 L719.88 99.9 L723.7 98.27 L727.53 96.65 L731.38 95.03 L735.24 93.41 L739.11 91.79 L743 90.16 L746.89 88.54 L750.8 86.92 L754.72 85.3 L758.65 83.68 L762.6 82.06 L766.55 80.43 L770.51 78.81 L774.48 77.19 L778.46 75.57 L782.45 73.95 L786.45 72.33 L790.46 70.71 L794.47 69.09 L798.49 67.47 L802.52 65.85 L806.56 64.23 L810.6 62.61 L814.65 60.99 L818.71 59.37 L822.76 57.75 L826.83 56.13 L830.9 54.52 L834.97 52.9 L839.04 51.28 L843.12 49.67 L847.2 48.06 L851.27 46.45 L855.35 44.84 L859.42 43.23 L863.48 41.63 L867.53 40.03 L871.57 38.44 L875.57 36.86 L879.53 35.3 L883.4 33.77 L887.09 32.3M913.32 30.97 L909.21 29.97 L907.11 29.77 L906.92 30.52 L907.48 31.76 L908.27 33.19 L909.14 34.71 L910.05 36.26 L910.97 37.83 L911.91 39.41 L912.85 41.01 L913.79 42.61 L914.74 44.21 L915.69 45.82 L916.64 47.43 L917.59 49.05 L918.54 50.66 L919.49 52.27 L920.44 53.89 L921.39 55.51 L922.34 57.12 L923.28 58.74 L924.23 60.36 L925.17 61.98 L926.11 63.6 L927.06 65.22 L927.99 66.84 L928.93 68.46 L929.87 70.08 L930.8 71.7M474 241 L475.41 239.4 L476.86 237.81 L478.33 236.21 L479.84 234.61 L481.37 233.02 L482.94 231.42 L484.54 229.82 L486.17 228.23 L487.82 226.63 L489.51 225.03 L491.23 223.44 L492.98 221.84 L494.76 220.25 L496.56 218.66 L498.4 217.06 L500.26 215.47 L502.16 213.87 L504.08 212.28 L506.03 210.69 L508.01 209.09 L510.02 207.5 L512.06 205.91 L514.12 204.32 L516.21 202.72 L518.33 201.13 L520.48 199.54 L522.65 197.95 L524.85 196.36 L527.08 194.77 L529.34 193.18 L531.62 191.59 L533.93 190 L536.26 188.42 L538.62 186.83 L541 185.24 L543.41 183.66 L545.85 182.07 L548.31 180.48 L550.79 178.9 L553.3 177.31 L555.83 175.73 L558.39 174.15 L560.97 172.56 L563.57 170.98 L566.2 169.4 L568.85 167.82 L571.52 166.24 L574.21 164.66 L576.93 163.08 L579.67 161.5 L582.43 159.93 L585.21 158.35 L588.01 156.78 L590.83 155.2 L593.67 153.63 L596.53 152.06 L599.42 150.49 L602.32 148.91 L605.24 147.35 L608.17 145.78 L611.13 144.21 L614.1 142.65 L617.1 141.08 L620.1 139.52 L623.13 137.96 L626.17 136.4 L629.23 134.84 L632.3 133.28 L635.39 131.73 L638.49 130.17 L641.61 128.62 L644.74 127.07 L647.88 125.53 L651.04 123.98 L654.2 122.44 L657.38 120.9 L660.57 119.36 L663.77 117.82 L666.98 116.29 L670.2 114.76 L673.42 113.23 L676.66 111.71 L679.9 110.19 L683.14 108.67 L686.39 107.16 L689.65 105.65 L692.91 104.14 L696.17 102.64 L699.43 101.15 L702.69 99.65 L705.95 98.17 L709.21 96.69 L712.46 95.22 L715.71 93.75 L718.95 92.29 L722.18 90.83 L725.4 89.39 L728.61 87.95 L731.81 86.52 L734.98 85.11 L738.14 83.7 L741.28 82.3 L744.38 80.92 L747.46 79.55 L750.51 78.19 L753.52 76.85 L756.49 75.53 L759.41 74.22 L762.28 72.93 L765.1 71.67M1036.31 70.43 L1031.54 69.21 L1026.85 68.02 L1022.24 66.86 L1017.73 65.73 L1013.31 64.64 L1009.01 63.59 L1004.83 62.58 L1000.78 61.62 L996.86 60.7 L993.1 59.85 L989.5 59.05 L986.07 58.31 L982.82 57.64 L979.76 57.04 L976.9 56.53 L974.24 56.09 L971.8 55.74 L969.56 55.47 L967.55 55.3 L965.74 55.22 L964.15 55.23 L962.76 55.33 L961.57 55.53 L960.56 55.82 L959.74 56.19 L959.07 56.65 L958.57 57.19 L958.2 57.8M444 244 L445.41 242.41 L446.85 240.82 L448.33 239.23 L449.84 237.64 L451.38 236.05 L452.96 234.46 L454.56 232.87 L456.2 231.28 L457.87 229.69 L459.58 228.1 L461.31 226.51 L463.08 224.92 L464.88 223.33 L466.71 221.75 L468.57 220.16 L470.46 218.57 L472.38 216.98 L474.33 215.4 L476.31 213.81 L478.33 212.23 L480.37 210.64 L482.44 209.06 L484.54 207.47 L486.68 205.89 L488.84 204.3 L491.03 202.72 L493.25 201.14 L495.5 199.56 L497.77 197.97 L500.08 196.39 L502.41 194.81 L504.77 193.23 L507.16 191.65 L509.57 190.07 L512.01 188.49 L514.48 186.92 L516.98 185.34 L519.5 183.76 L522.05 182.19 L524.62 180.61 L527.22 179.04 L529.85 177.46 L532.5 175.89 L535.17 174.32 L537.87 172.75 L540.59 171.18 L543.34 169.61 L546.11 168.04 L548.91 166.47 L551.72 164.9 L554.56 163.34 L557.42 161.77 L560.31 160.21 L563.21 158.64 L566.14 157.08 L569.09 155.52 L572.06 153.96 L575.04 152.41 L578.05 150.85 L581.08 149.29 L584.13 147.74 L587.19 146.19 L590.28 144.64 L593.38 143.09 L596.5 141.54 L599.63 140 L602.78 138.45 L605.95 136.91 L609.13 135.37 L612.33 133.83 L615.54 132.3 L618.77 130.77 L622.01 129.23 L625.26 127.71 L628.53 126.18 L631.8 124.66 L635.09 123.14 L638.38 121.62 L641.69 120.11 L645 118.6 L648.33 117.09 L651.65 115.59 L654.99 114.09 L658.33 112.59 L661.67 111.1 L665.02 109.62 L668.37 108.13 L671.72 106.66 L675.07 105.19 L678.42 103.72 L681.77 102.26 L685.11 100.81 L688.44 99.36 L691.77 97.92 L695.09 96.49 L698.4 95.07 L701.7 93.65 L704.98 92.24 L708.24 90.85 L711.49 89.46M1089.84 88.09 L1084.91 86.73 L1080.01 85.38 L1075.15 84.04 L1070.31 82.72 L1065.52 81.41 L1060.77 80.12 L1056.06 78.85 L1051.4 77.6 L1046.8 76.37 L1042.25 75.16 L1037.77 73.98 L1033.36 72.82 L1029.02 71.69 L1024.77 70.59 L1020.6 69.53 L1016.53 68.5 L1012.56 67.51 L1008.69 66.56 L1004.94 65.65 L1001.32 64.79 L997.82 63.98 L994.46 63.23 L991.25 62.53 L988.19 61.9 L985.28 61.33 L982.54 60.83 L979.97 60.39 L977.57 60.04 L975.34 59.76 L973.28 59.55 L971.4 59.43 L969.69 59.39 L968.15 59.42 L966.77 59.54 L965.55 59.74 L964.48 60.02 L963.56 60.37 L962.77 60.8 L962.11 61.3 L961.56 61.86 L961.13 62.49 L960.79 63.19 L960.55 63.94 L960.39 64.74 L960.31 65.6 L960.3 66.5"/>
<path stroke="#38588c" d="M849.2 210.5 L850.28 209.11 L851.37 207.71 L852.45 206.33 L853.54 204.94 L854.63 203.56 L855.73 202.17 L856.82 200.8 L857.92 199.42 L859.02 198.05 L860.12 196.68 L861.22 195.31 L862.33 193.95 L863.43 192.59 L864.54 191.23 L865.65 189.88 L866.76 188.53 L867.87 187.18 L868.98 185.84 L870.09 184.5 L871.21 183.17 L872.33 181.84 L873.44 180.51 L874.56 179.19 L875.68 177.87 L876.8 176.56 L877.92 175.25 L879.04 173.95 L880.16 172.65 L881.28 171.36 L882.4 170.07 L883.52 168.79 L884.64 167.51 L885.77 166.24 L886.89 164.97 L888.01 163.71 L889.13 162.46 L890.26 161.21 L891.38 159.97 L892.5 158.73 L893.63 157.51 L894.75 156.29 L895.87 155.07 L896.99 153.87 L898.12 152.67 L899.24 151.48 L900.36 150.3 L901.49 149.13 L902.61 147.96 L903.73 146.81 L904.85 145.66 L905.98 144.53 L907.1 143.4 L908.22 142.28 L909.35 141.18 L910.47 140.08 L911.59 139 L912.72 137.92 L913.84 136.86 L914.97 135.81 L916.1 134.78 L917.23 133.75 L918.35 132.74 L919.48 131.74 L920.62 130.76 L921.75 129.79 L922.89 128.84 L924.03 127.9 L925.17 126.98 L926.31 126.07 L927.46 125.18 L928.61 124.31 L929.76 123.45 L930.92 122.61 L932.08 121.79 L933.25 120.99 L934.42 120.21 L935.6 119.45 L936.78 118.7 L937.97 117.98 L939.17 117.28 L940.38 116.61 L941.59 115.95 L942.81 115.32 L944.05 114.71 L945.29 114.13 L946.54 113.57 L947.81 113.03 L949.09 112.52 L950.38 112.04 L951.68 111.58 L953 111.15 L954.33 110.74 L955.68 110.37 L957.04 110.02 L958.43 109.7 L959.83 109.4 L961.25 109.14 L962.69 108.91 L964.14 108.7 L965.62 108.53 L967.13 108.38 L968.65 108.26 L970.2 108.18 L971.77 108.12 L973.36 108.1 L974.98 108.1 L976.63 108.14 L978.3 108.2 L980 108.3M844 212 L844.83 210.47 L845.66 208.94 L846.5 207.41 L847.33 205.88 L848.18 204.35 L849.02 202.83 L849.87 201.3 L850.72 199.78 L851.58 198.25 L852.44 196.73 L853.3 195.21 L854.16 193.69 L855.03 192.17 L855.9 190.66 L856.78 189.14 L857.65 187.63 L858.53 186.11 L859.41 184.6 L860.3 183.09 L861.18 181.58 L862.07 180.08 L862.96 178.57 L863.85 177.07 L864.75 175.57 L865.65 174.07 L866.54 172.57 L867.45 171.08 L868.35 169.59 L869.25 168.1 L870.16 166.61 L871.07 165.12 L871.98 163.64 L872.89 162.16 L873.8 160.68 L874.71 159.2 L875.63 157.73 L876.54 156.26 L877.46 154.79 L878.38 153.33 L879.3 151.86 L880.22 150.41 L881.14 148.95 L882.06 147.5 L882.98 146.05 L883.91 144.61 L884.83 143.17 L885.75 141.73 L886.68 140.3 L887.6 138.87 L888.53 137.45 L889.45 136.03 L890.38 134.62 L891.31 133.21 L892.23 131.81 L893.16 130.41 L894.08 129.02 L895.01 127.63 L895.94 126.25 L896.86 124.88 L897.79 123.51 L898.71 122.16 L899.64 120.8 L900.57 119.46 L901.49 118.12 L902.42 116.8 L903.34 115.48 L904.27 114.17 L905.2 112.87 L906.12 111.58 L907.05 110.3 L907.98 109.04 L908.9 107.78 L909.83 106.54 L910.76 105.31 L911.69 104.09 L912.62 102.89 L913.55 101.7 L914.49 100.53 L915.42 99.37 L916.36 98.23 L917.3 97.11 L918.25 96.01 L919.2 94.92 L920.15 93.86 L921.11 92.82 L922.07 91.8 L923.04 90.81 L924.02 89.84 L925.01 88.89 L926 87.98 L927.01 87.09 L928.02 86.23 L929.05 85.4 L930.09 84.61 L931.15 83.85 L932.23 83.12 L933.32 82.43 L934.44 81.78 L935.57 81.17 L936.73 80.6 L937.92 80.07 L939.14 79.59 L940.38 79.15 L941.66 78.75 L942.97 78.41 L944.32 78.11 L945.71 77.85 L947.14 77.65 L948.62 77.5 L950.13 77.4 L951.7 77.35 L953.32 77.35 L954.98 77.4 L956.7 77.5M825 209.7 L824.77 208.23 L824.54 206.76 L824.31 205.3 L824.1 203.84 L823.88 202.37 L823.67 200.91 L823.46 199.46 L823.26 198 L823.06 196.54 L822.87 195.09 L822.68 193.64 L822.49 192.19 L822.31 190.75 L822.13 189.3 L821.96 187.86 L821.79 186.42 L821.62 184.98 L821.46 183.55 L821.3 182.11 L821.14 180.68 L820.99 179.26 L820.85 177.83 L820.7 176.41 L820.56 174.99 L820.42 173.58 L820.29 172.16 L820.16 170.75 L820.03 169.35 L819.91 167.94 L819.79 166.54 L819.67 165.15 L819.55 163.76 L819.44 162.37 L819.33 160.98 L819.22 159.6 L819.12 158.23 L819.02 156.86 L818.92 155.49 L818.82 154.13 L818.72 152.77 L818.62 151.42 L818.53 150.07 L818.44 148.73 L818.34 147.39 L818.25 146.06 L818.16 144.73 L818.07 143.41 L817.98 142.1 L817.89 140.79 L817.8 139.49 L817.71 138.2 L817.62 136.92 L817.53 135.64 L817.44 134.37 L817.34 133.11 L817.24 131.85 L817.14 130.61 L817.04 129.37 L816.93 128.14 L816.82 126.93 L816.71 125.72 L816.59 124.52 L816.47 123.34 L816.34 122.16 L816.2 121M838.7 211.7 L838.84 210.1 L838.98 208.5 L839.12 206.89 L839.27 205.29 L839.43 203.69 L839.59 202.09 L839.75 200.49 L839.92 198.89 L840.09 197.29 L840.27 195.69 L840.45 194.09 L840.64 192.49 L840.83 190.89 L841.03 189.29 L841.23 187.69 L841.43 186.09 L841.64 184.49 L841.85 182.9 L842.07 181.3 L842.29 179.7 L842.52 178.1 L842.75 176.51 L842.99 174.91 L843.22 173.32 L843.47 171.72 L843.71 170.12 L843.97 168.53 L844.22 166.94 L844.48 165.34 L844.75 163.75 L845.01 162.16 L845.28 160.56 L845.56 158.97 L845.84 157.38 L846.12 155.79 L846.41 154.2 L846.7 152.61 L847 151.02 L847.3 149.43 L847.6 147.84 L847.9 146.26 L848.21 144.67 L848.53 143.09 L848.85 141.5 L849.17 139.92 L849.49 138.33 L849.82 136.75 L850.15 135.17 L850.48 133.59 L850.82 132.01 L851.16 130.43 L851.5 128.85 L851.85 127.28 L852.2 125.7 L852.55 124.13 L852.91 122.56 L853.27 120.99 L853.63 119.42 L853.99 117.85 L854.36 116.29 L854.73 114.72 L855.1 113.16 L855.48 111.6 L855.85 110.04 L856.23 108.48 L856.61 106.93 L856.99 105.38 L857.38 103.83 L857.76 102.28 L858.15 100.74 L858.54 99.2 L858.92 97.66 L859.31 96.13 L859.7 94.6 L860.1 93.08 L860.49 91.56 L860.88 90.04 L861.27 88.53 L861.66 87.02 L862.05 85.52 L862.43 84.03 L862.82 82.54 L863.2 81.06 L863.58 79.59 L863.95 78.13 L864.32 76.67 L864.69 75.23 L865.05 73.8 L865.4 72.38 L865.74 70.97 L866.07 69.58 L866.4 68.21 L866.7 66.85 L866.99 65.51 L867.27 64.2 L867.52 62.91 L867.74 61.64 L867.94 60.41 L868.1 59.21 L868.23 58.05 L868.31 56.94 L868.33 55.87 L868.3 54.85 L868.19 53.89 L868 53"/>
<path stroke="#2ab07f" d="M532.4 317 L532.21 315.39 L532.05 313.79 L531.91 312.18 L531.8 310.58 L531.72 308.97 L531.67 307.36 L531.64 305.76 L531.64 304.15 L531.67 302.55 L531.73 300.94 L531.81 299.33 L531.92 297.73 L532.06 296.12 L532.22 294.52 L532.42 292.91 L532.64 291.3 L532.89 289.7 L533.16 288.09 L533.46 286.49 L533.79 284.88 L534.15 283.28 L534.53 281.67 L534.95 280.07 L535.38 278.46 L535.85 276.86 L536.34 275.25 L536.86 273.65 L537.41 272.04 L537.98 270.44 L538.58 268.83 L539.21 267.23 L539.87 265.63 L540.55 264.02 L541.25 262.42 L541.99 260.81 L542.75 259.21 L543.54 257.61 L544.35 256 L545.19 254.4 L546.06 252.8 L546.95 251.19 L547.87 249.59 L548.81 247.99 L549.78 246.39 L550.78 244.78 L551.8 243.18 L552.85 241.58 L553.92 239.98 L555.02 238.38 L556.14 236.77 L557.29 235.17 L558.47 233.57 L559.67 231.97 L560.89 230.37 L562.14 228.77 L563.42 227.17 L564.72 225.57 L566.04 223.97 L567.39 222.37 L568.76 220.78 L570.16 219.18 L571.58 217.58 L573.02 215.98 L574.49 214.38 L575.98 212.79 L577.5 211.19 L579.04 209.59 L580.6 208 L582.18 206.4 L583.79 204.81 L585.42 203.21 L587.08 201.62 L588.75 200.02 L590.45 198.43 L592.17 196.83 L593.91 195.24 L595.68 193.65 L597.46 192.06 L599.27 190.47 L601.1 188.88 L602.95 187.29 L604.82 185.7 L606.71 184.11 L608.62 182.52 L610.56 180.93 L612.51 179.34 L614.48 177.76 L616.48 176.17 L618.49 174.59 L620.52 173 L622.57 171.42 L624.64 169.83 L626.73 168.25 L628.84 166.67 L630.96 165.09 L633.1 163.51 L635.27 161.93 L637.44 160.35 L639.64 158.78 L641.85 157.2 L644.08 155.63 L646.33 154.05 L648.59 152.48 L650.87 150.91 L653.16 149.34 L655.47 147.77 L657.8 146.21 L660.14 144.64 L662.49 143.08 L664.86 141.51 L667.24 139.95 L669.63 138.39 L672.04 136.83 L674.46 135.28 L676.89 133.72 L679.34 132.17 L681.79 130.62 L684.26 129.07 L686.74 127.53 L689.23 125.99 L691.72 124.44 L694.23 122.91 L696.75 121.37 L699.27 119.84 L701.8 118.31 L704.34 116.78 L706.88 115.26 L709.44 113.74 L711.99 112.23 L714.55 110.71 L717.11 109.21 L719.68 107.7 L722.25 106.2 L724.82 104.71 L727.39 103.22 L729.96 101.74 L732.52 100.26 L735.09 98.79 L737.65 97.32 L740.2 95.87 L742.75 94.42 L745.29 92.97 L747.81 91.54 L750.33 90.12 L752.83 88.7 L755.32 87.3 L757.79 85.9 L760.24 84.52 L762.66 83.15 L765.06 81.8 L767.43 80.46 L769.77 79.13 L772.07 77.83 L774.33 76.54 L776.55 75.27 L778.71 74.02 L780.82 72.8 L782.87 71.61 L784.85 70.44 L786.75 69.3 L788.57 68.19 L790.3 67.12 L791.93 66.08 L793.44 65.09 L794.83 64.14 L796.08 63.24 L797.19 62.39 L798.13 61.6 L798.89 60.87M531.4 323.6 L530.35 322.34 L529.31 321.07 L528.29 319.81 L527.28 318.54 L526.3 317.28 L525.33 316.01 L524.38 314.75 L523.44 313.49 L522.53 312.22 L521.63 310.96 L520.75 309.69 L519.88 308.43 L519.03 307.17 L518.2 305.91 L517.39 304.65 L516.6 303.38 L515.82 302.12 L515.06 300.86 L514.32 299.6 L513.6 298.34 L512.89 297.09 L512.2 295.83 L511.53 294.57 L510.87 293.32 L510.24 292.06 L509.62 290.81 L509.01 289.55 L508.43 288.3 L507.86 287.05 L507.31 285.8 L506.78 284.55 L506.26 283.3 L505.77 282.05 L505.29 280.81 L504.82 279.56 L504.37 278.32 L503.94 277.08 L503.53 275.84 L503.14 274.6 L502.76 273.36 L502.39 272.12 L502.05 270.89 L501.72 269.66 L501.41 268.43 L501.11 267.2 L500.83 265.97 L500.56 264.74 L500.32 263.52 L500.08 262.3 L499.87 261.08 L499.67 259.86 L499.48 258.64 L499.31 257.43 L499.16 256.22 L499.02 255.01 L498.9 253.8 L498.79 252.59 L498.69 251.39 L498.61 250.19 L498.55 249 L498.5 247.8 L498.46 246.61 L498.44 245.42 L498.43 244.23 L498.44 243.05 L498.46 241.87 L498.49 240.69 L498.53 239.52 L498.59 238.35 L498.66 237.18 L498.74 236.01 L498.84 234.85 L498.94 233.69 L499.06 232.54 L499.19 231.39 L499.33 230.24 L499.48 229.09 L499.65 227.95 L499.82 226.82 L500 225.69 L500.2 224.56 L500.4 223.43 L500.61 222.31 L500.83 221.2 L501.06 220.09 L501.3 218.98 L501.55 217.88 L501.8 216.78 L502.06 215.69 L502.33 214.6 L502.61 213.52 L502.89 212.44 L503.17 211.37 L503.47 210.3 L503.77 209.24 L504.07 208.19 L504.38 207.14 L504.69 206.09 L505 205.05 L505.32 204.02 L505.64 202.99 L505.97 201.97 L506.29 200.96 L506.62 199.95 L506.95 198.95 L507.28 197.96 L507.6 196.97 L507.93 195.99 L508.26 195.02 L508.58 194.05 L508.91 193.09 L509.23 192.14 L509.55 191.2 L509.86 190.26 L510.17 189.33 L510.47 188.41 L510.77 187.5 L511.07 186.6 L511.35 185.7 L511.63 184.82 L511.91 183.94 L512.17 183.07 L512.42 182.21 L512.67 181.36 L512.9 180.52 L513.13 179.69 L513.34 178.87 L513.54 178.06 L513.72 177.26 L513.9 176.47 L514.05 175.69 L514.2 174.93 L514.32 174.17 L514.43 173.42 L514.53 172.69 L514.6 171.96 L514.66 171.25 L514.69 170.55 L514.71 169.86 L514.7 169.18 L514.68 168.52 L514.63 167.87 L514.55 167.23 L514.45 166.6 L514.33 165.99 L514.18 165.39 L514.01 164.81 L513.8 164.23 L513.57 163.68 L513.31 163.13"/>
<path stroke="#86d549" d="M710.8 242.8 L710.22 241.62 L709.65 240.44 L709.09 239.26 L708.53 238.09 L707.98 236.92 L707.44 235.75 L706.9 234.59 L706.37 233.43 L705.84 232.27 L705.32 231.12 L704.8 229.97 L704.29 228.82 L703.78 227.68 L703.28 226.55 L702.79 225.41 L702.29 224.28 L701.81 223.16 L701.33 222.04 L700.85 220.92 L700.38 219.81 L699.91 218.7 L699.44 217.6 L698.98 216.5 L698.53 215.4 L698.07 214.31 L697.62 213.23 L697.18 212.15 L696.73 211.08 L696.29 210.01 L695.86 208.95 L695.42 207.89 L694.99 206.84 L694.56 205.79 L694.13 204.76 L693.7 203.72 L693.27 202.69 L692.85 201.67 L692.42 200.66 L692 199.65 L691.58 198.65 L691.15 197.65 L690.73 196.66 L690.31 195.68 L689.88 194.71 L689.46 193.74 L689.03 192.78 L688.61 191.83 L688.18 190.89 L687.75 189.95 L687.31 189.02 L686.88 188.1 L686.44 187.19 L686 186.29 L685.55 185.4 L685.1 184.51 L684.64 183.63 L684.18 182.77 L683.72 181.91 L683.25 181.06 L682.77 180.22 L682.29 179.39 L681.8 178.57 L681.3 177.76 L680.8 176.96 L680.29 176.17 L679.77 175.39 L679.24 174.63 L678.7 173.87 L678.15 173.12 L677.59 172.39 L677.02 171.67 L676.44 170.96 L675.85 170.26 L675.25 169.57 L674.63 168.9 L674 168.24 L673.36 167.59 L672.7 166.95 L672.03 166.33 L671.34 165.72 L670.64 165.12 L669.92 164.53 L669.18 163.96 L668.43 163.41 L667.66 162.87 L666.87 162.34 L666.06 161.83 L665.24 161.33 L664.39 160.84 L663.52 160.37 L662.63 159.92 L661.73 159.48 L660.79 159.06 L659.84 158.65 L658.86 158.26 L657.87 157.88 L656.84 157.52 L655.79 157.18 L654.72 156.85 L653.62 156.54 L652.5 156.24 L651.35 155.96 L650.17 155.7 L648.97 155.46 L647.73 155.23 L646.47 155.02 L645.19 154.83 L643.87 154.65 L642.52 154.49 L641.15 154.35 L639.74 154.22 L638.3 154.12 L636.84 154.03 L635.34 153.95 L633.81 153.9 L632.25 153.86 L630.66 153.84 L629.03 153.84 L627.38 153.86 L625.69 153.89 L623.97 153.94 L622.22 154.01 L620.43 154.1 L618.61 154.2 L616.76 154.32 L614.88 154.46 L612.96 154.62 L611.01 154.79 L609.03 154.98 L607.02 155.19 L604.97 155.41 L602.89 155.65 L600.78 155.91 L598.64 156.19 L596.46 156.48 L594.25 156.79 L592.01 157.11 L589.74 157.45 L587.44 157.81 L585.11 158.18 L582.74 158.57 L580.35 158.98 L577.93 159.4 L575.47 159.83 L572.99 160.28 L570.48 160.75 L567.94 161.23 L565.37 161.73 L562.77 162.24 L560.15 162.76 L557.5 163.3M716.3 237.5 L715.97 236.19 L715.66 234.88 L715.35 233.57 L715.05 232.27 L714.75 230.96 L714.47 229.66 L714.19 228.37 L713.92 227.07 L713.66 225.78 L713.4 224.49 L713.15 223.21 L712.91 221.92 L712.68 220.64 L712.45 219.37 L712.23 218.1 L712.02 216.83 L711.81 215.56 L711.61 214.3 L711.42 213.04 L711.23 211.78 L711.05 210.53 L710.87 209.28 L710.7 208.04 L710.54 206.8 L710.38 205.56 L710.23 204.33 L710.08 203.1 L709.94 201.88 L709.8 200.66 L709.67 199.45 L709.54 198.24 L709.41 197.03 L709.29 195.83 L709.17 194.64 L709.06 193.45 L708.95 192.27 L708.84 191.09 L708.74 189.91 L708.64 188.75 L708.54 187.59 L708.44 186.43 L708.35 185.28 L708.25 184.14 L708.16 183 L708.07 181.87 L707.98 180.75 L707.89 179.63 L707.8 178.52 L707.71 177.42 L707.62 176.32 L707.53 175.24 L707.43 174.16 L707.34 173.08 L707.24 172.02 L707.14 170.96 L707.04 169.92 L706.93 168.88 L706.82 167.85 L706.71 166.83 L706.59 165.82 L706.47 164.81 L706.34 163.82 L706.2 162.84 L706.06 161.87 L705.91 160.91 L705.75 159.95 L705.59 159.01 L705.42 158.08 L705.23 157.17 L705.04 156.26 L704.84 155.36 L704.62 154.48 L704.4 153.61 L704.16 152.75 L703.91 151.91 L703.64 151.08 L703.36 150.26 L703.07 149.45 L702.76 148.66 L702.43 147.88 L702.09 147.12 L701.73 146.37 L701.34 145.64 L700.95 144.93 L700.52 144.22 L700.08 143.54 L699.62 142.87 L699.14 142.22 L698.63 141.58 L698.09 140.96 L697.54 140.36 L696.95 139.78 L696.34 139.21 L695.7 138.66 L695.04 138.13 L694.34 137.62 L693.61 137.13 L692.86 136.66 L692.07 136.2 L691.25 135.77 L690.39 135.36 L689.5 134.97 L688.58 134.59 L687.62 134.24 L686.62 133.91 L685.59 133.6 L684.52 133.31 L683.41 133.05 L682.26 132.8 L681.07 132.58 L679.84 132.37 L678.57 132.19 L677.26 132.04 L675.9 131.9 L674.5 131.79 L673.06 131.7 L671.57 131.63 L670.04 131.59 L668.46 131.56 L666.84 131.56 L665.17 131.58 L663.46 131.63 L661.7 131.7 L659.9 131.79 L658.04 131.9 L656.15 132.03 L654.2 132.19 L652.21 132.37 L650.17 132.57 L648.09 132.79 L645.96 133.04 L643.78 133.3 L641.56 133.59 L639.29 133.9 L636.98 134.23 L634.62 134.58 L632.21 134.95 L629.76 135.34 L627.27 135.76 L624.73 136.19 L622.16 136.64 L619.53 137.11 L616.87 137.6 L614.17 138.11 L611.42 138.64 L608.64 139.19 L605.81 139.76 L602.95 140.34 L600.05 140.94 L597.11 141.56 L594.13 142.19 L591.12 142.85 L588.08 143.51 L585 144.2M721.3 238.3 L721.5 236.76 L721.71 235.22 L721.93 233.68 L722.16 232.15 L722.41 230.61 L722.67 229.07 L722.94 227.54 L723.22 226 L723.51 224.47 L723.81 222.94 L724.13 221.41 L724.46 219.88 L724.8 218.35 L725.15 216.82 L725.51 215.29 L725.88 213.76 L726.26 212.24 L726.66 210.71 L727.06 209.19 L727.48 207.67 L727.91 206.14 L728.35 204.62 L728.8 203.1 L729.26 201.59 L729.73 200.07 L730.21 198.56 L730.7 197.04 L731.2 195.53 L731.71 194.02 L732.23 192.51 L732.77 191 L733.31 189.5 L733.86 187.99 L734.42 186.49 L734.99 184.99 L735.57 183.49 L736.16 181.99 L736.76 180.5 L737.36 179 L737.98 177.51 L738.6 176.02 L739.24 174.54 L739.88 173.05 L740.53 171.57 L741.18 170.09 L741.85 168.61 L742.52 167.14 L743.2 165.67 L743.89 164.2 L744.59 162.73 L745.29 161.27 L746 159.81 L746.71 158.35 L747.44 156.89 L748.16 155.44 L748.9 154 L749.64 152.55 L750.38 151.11 L751.13 149.68 L751.88 148.24 L752.64 146.82 L753.4 145.39 L754.17 143.97 L754.94 142.56 L755.71 141.15 L756.49 139.74 L757.27 138.34 L758.05 136.95 L758.83 135.56 L759.61 134.18 L760.39 132.8 L761.18 131.43 L761.96 130.07 L762.74 128.71 L763.52 127.36 L764.3 126.02 L765.08 124.68 L765.85 123.36 L766.62 122.04 L767.38 120.73 L768.14 119.43 L768.89 118.14 L769.64 116.85 L770.37 115.58 L771.1 114.32 L771.82 113.07 L772.53 111.84 L773.22 110.61 L773.91 109.4 L774.58 108.2 L775.23 107.02 L775.86 105.85 L776.48 104.69 L777.08 103.56 L777.66 102.43 L778.21 101.33 L778.74 100.24 L779.24 99.18 L779.71 98.13 L780.16 97.11 L780.56 96.1 L780.94 95.12 L781.28 94.17 L781.57 93.23 L781.83 92.33 L782.04 91.45 L782.2 90.6 L782.3 89.78 L782.36 88.99 L782.36 88.23 L782.29 87.5 L782.17 86.81 L781.97 86.15 L781.71 85.53 L781.37 84.95 L780.95 84.41 L780.45 83.9 L779.87 83.44 L779.2 83.02 L778.43 82.64 L777.57 82.31 L776.62 82.02 L775.56 81.78 L774.39 81.58 L773.13 81.43 L771.75 81.33 L770.26 81.27 L768.66 81.26 L766.94 81.3 L765.11 81.39 L763.16 81.52 L761.1 81.7M717.5 244.2 L717.27 242.83 L717.05 241.46 L716.84 240.1 L716.64 238.74 L716.45 237.37 L716.27 236.01 L716.1 234.65 L715.93 233.3 L715.78 231.94 L715.63 230.59 L715.49 229.24 L715.36 227.89 L715.24 226.54 L715.13 225.2 L715.02 223.86 L714.93 222.52 L714.84 221.18 L714.76 219.85 L714.69 218.51 L714.63 217.18 L714.57 215.86 L714.53 214.53 L714.49 213.21 L714.45 211.89 L714.43 210.57 L714.41 209.26 L714.4 207.95 L714.4 206.64 L714.41 205.34 L714.42 204.04 L714.43 202.74 L714.46 201.44 L714.49 200.15 L714.53 198.87 L714.57 197.58 L714.62 196.3 L714.67 195.03 L714.74 193.75 L714.8 192.49 L714.87 191.22 L714.95 189.96 L715.03 188.71 L715.12 187.46 L715.21 186.21 L715.3 184.97 L715.4 183.73 L715.5 182.5M719.7 248.3 L719.84 246.75 L719.99 245.21 L720.16 243.66 L720.34 242.12 L720.53 240.57 L720.73 239.03 L720.95 237.49 L721.17 235.95 L721.41 234.4 L721.66 232.86 L721.92 231.32 L722.2 229.78 L722.49 228.24 L722.78 226.71 L723.09 225.17 L723.42 223.63 L723.75 222.1 L724.09 220.56 L724.45 219.03 L724.82 217.49 L725.2 215.96 L725.59 214.43 L725.99 212.9 L726.41 211.37 L726.83 209.84 L727.27 208.32 L727.71 206.79 L728.17 205.26 L728.64 203.74 L729.12 202.22 L729.61 200.7 L730.11 199.17 L730.62 197.66 L731.15 196.14 L731.68 194.62 L732.22 193.11 L732.77 191.59 L733.34 190.08 L733.91 188.57 L734.49 187.06 L735.08 185.55 L735.69 184.05 L736.3 182.54 L736.92 181.04 L737.55 179.54 L738.19 178.04 L738.83 176.54 L739.49 175.05 L740.16 173.56 L740.83 172.07 L741.51 170.58 L742.2 169.09 L742.9 167.61 L743.61 166.13 L744.32 164.65 L745.04 163.17 L745.77 161.7 L746.5 160.23 L747.25 158.76 L748 157.3 L748.75 155.83 L749.51 154.38 L750.28 152.92 L751.05 151.47 L751.83 150.02 L752.62 148.58 L753.41 147.14 L754.2 145.7 L755 144.27 L755.8 142.84 L756.61 141.41 L757.41 140 L758.23 138.58 L759.04 137.17 L759.86 135.77 L760.68 134.37 L761.5 132.97 L762.32 131.59 L763.14 130.21 L763.96 128.83 L764.78 127.46 L765.6 126.1M731.7 241.7 L732.33 240.09 L732.97 238.48 L733.62 236.86 L734.29 235.25 L734.96 233.64 L735.65 232.03 L736.36 230.42 L737.07 228.81 L737.8 227.19 L738.54 225.58 L739.29 223.97 L740.06 222.36 L740.83 220.75 L741.62 219.14 L742.42 217.52 L743.23 215.91 L744.06 214.3 L744.89 212.69 L745.74 211.08 L746.6 209.47 L747.47 207.85 L748.35 206.24 L749.25 204.63 L750.15 203.02 L751.07 201.41 L752 199.8 L752.94 198.18 L753.89 196.57 L754.85 194.96 L755.82 193.35 L756.81 191.74 L757.8 190.13 L758.81 188.52 L759.82 186.9 L760.85 185.29 L761.88 183.68 L762.93 182.07 L763.99 180.46 L765.06 178.85 L766.14 177.24 L767.22 175.62 L768.32 174.01 L769.43 172.4 L770.55 170.79 L771.68 169.18 L772.82 167.57 L773.96 165.96 L775.12 164.34 L776.29 162.73 L777.46 161.12 L778.65 159.51 L779.84 157.9 L781.05 156.29 L782.26 154.68 L783.48 153.07 L784.71 151.45 L785.95 149.84 L787.2 148.23 L788.45 146.62 L789.72 145.01 L790.99 143.4 L792.27 141.79 L793.56 140.18 L794.86 138.57 L796.17 136.95 L797.48 135.34 L798.8 133.73 L800.13 132.12 L801.47 130.51 L802.81 128.9 L804.16 127.29 L805.52 125.68 L806.89 124.07 L808.26 122.46 L809.64 120.85 L811.03 119.24 L812.42 117.63 L813.82 116.02 L815.23 114.41 L816.64 112.8 L818.06 111.19 L819.49 109.58 L820.92 107.97 L822.35 106.36 L823.8 104.75 L825.25 103.14 L826.7 101.53 L828.16 99.92 L829.63 98.31 L831.1 96.7M713.5 240.5 L715.09 239.21 L716.69 237.92 L718.29 236.63 L719.91 235.35 L721.53 234.06 L723.15 232.78 L724.79 231.51 L726.43 230.23 L728.08 228.96 L729.73 227.69 L731.39 226.43 L733.06 225.17 L734.73 223.91 L736.41 222.65 L738.1 221.4 L739.79 220.15 L741.48 218.91 L743.18 217.66 L744.89 216.43 L746.6 215.19 L748.32 213.96 L750.04 212.74 L751.77 211.51 L753.49 210.29 L755.23 209.08 L756.97 207.87 L758.71 206.67 L760.45 205.46 L762.2 204.27 L763.95 203.08 L765.71 201.89 L767.46 200.71 L769.22 199.53 L770.99 198.36 L772.75 197.19 L774.52 196.03 L776.29 194.88 L778.06 193.73 L779.83 192.58 L781.6 191.44 L783.38 190.31 L785.15 189.19 L786.93 188.07 L788.71 186.95 L790.48 185.85 L792.26 184.75 L794.04 183.65 L795.82 182.57 L797.6 181.49 L799.38 180.42 L801.15 179.35 L802.93 178.3 L804.71 177.25 L806.48 176.21 L808.26 175.18 L810.03 174.15 L811.8 173.14 L813.57 172.13 L815.34 171.14 L817.1 170.15 L818.87 169.17 L820.63 168.2 L822.39 167.24 L824.14 166.29 L825.9 165.35 L827.65 164.42 L829.39 163.51 L831.14 162.6 L832.88 161.7 L834.62 160.82 L836.36 159.95 L838.09 159.09 L839.82 158.24 L841.54 157.4 L843.26 156.58 L844.98 155.77 L846.69 154.97 L848.4 154.18 L850.11 153.41 L851.81 152.65 L853.51 151.91 L855.2 151.18 L856.89 150.47 L858.58 149.77 L860.26 149.08 L861.94 148.41 L863.61 147.76 L865.28 147.12 L866.95 146.5 L868.61 145.89 L870.27 145.3 L871.92 144.73 L873.58 144.18 L875.22 143.64 L876.87 143.12 L878.51 142.62 L880.15 142.14 L881.78 141.67 L883.42 141.23 L885.05 140.8 L886.67 140.39 L888.3 140M718.5 241 L719.95 239.61 L721.41 238.22 L722.88 236.83 L724.36 235.44 L725.85 234.05 L727.35 232.67 L728.86 231.29 L730.37 229.9 L731.9 228.53 L733.43 227.15 L734.97 225.78 L736.51 224.4 L738.07 223.03 L739.63 221.67 L741.2 220.3 L742.78 218.94 L744.37 217.58 L745.96 216.22 L747.56 214.87 L749.16 213.52 L750.78 212.17 L752.39 210.82 L754.02 209.48 L755.65 208.14 L757.29 206.8 L758.93 205.46 L760.58 204.13 L762.23 202.81 L763.89 201.48 L765.56 200.16 L767.22 198.84 L768.9 197.53 L770.58 196.22 L772.26 194.91 L773.94 193.61 L775.64 192.31 L777.33 191.02 L779.03 189.73 L780.73 188.44 L782.43 187.16 L784.14 185.88 L785.85 184.61 L787.57 183.35 L789.28 182.08 L791 180.83 L792.72 179.58 L794.44 178.33 L796.17 177.09 L797.89 175.85 L799.62 174.62 L801.35 173.4 L803.08 172.18 L804.81 170.97 L806.54 169.77 L808.27 168.57 L810 167.38 L811.73 166.2 L813.46 165.02 L815.19 163.85 L816.92 162.69 L818.65 161.53 L820.38 160.39 L822.11 159.25 L823.83 158.12 L825.56 157 L827.28 155.88 L829 154.78 L830.72 153.69 L832.44 152.6 L834.16 151.53 L835.87 150.46 L837.58 149.41 L839.29 148.37 L840.99 147.33 L842.69 146.31 L844.39 145.3 L846.09 144.3 L847.78 143.32 L849.46 142.35 L851.15 141.39 L852.83 140.44 L854.5 139.5 L856.18 138.58 L857.85 137.68 L859.51 136.79 L861.17 135.91 L862.83 135.05 L864.48 134.2 L866.13 133.37 L867.77 132.56 L869.41 131.76 L871.04 130.98 L872.67 130.22 L874.3 129.47 L875.92 128.75 L877.54 128.04 L879.15 127.35 L880.76 126.68 L882.37 126.04 L883.98 125.41 L885.58 124.8 L887.17 124.21 L888.77 123.65 L890.36 123.1 L891.95 122.58 L893.53 122.09 L895.12 121.61 L896.7 121.16 L898.29 120.73 L899.87 120.32 L901.45 119.94 L903.03 119.59 L904.61 119.26 L906.19 118.95 L907.77 118.67 L909.36 118.42 L910.94 118.19 L912.53 117.99 L914.12 117.81 L915.71 117.66 L917.31 117.54 L918.91 117.44 L920.52 117.37 L922.13 117.33 L923.75 117.31 L925.37 117.32 L927 117.36 L928.63 117.43 L930.27 117.52 L931.92 117.64 L933.58 117.78 L935.25 117.95 L936.92 118.15 L938.61 118.37 L940.3 118.62 L942.01 118.89 L943.72 119.2 L945.44 119.52 L947.18 119.87 L948.92 120.25 L950.68 120.65 L952.45 121.07 L954.23 121.52 L956.02 121.99 L957.82 122.48 L959.63 123 L961.46 123.54 L963.29 124.1 L965.14 124.68 L967 125.28 L968.88 125.91 L970.76 126.55 L972.66 127.22 L974.56 127.9 L976.48 128.61 L978.41 129.33 L980.35 130.07 L982.31 130.83 L984.27 131.6 L986.24 132.4 L988.23 133.21 L990.22 134.03 L992.22 134.88 L994.24 135.74 L996.26 136.61 L998.29 137.5 L1000.34 138.4 L1002.39 139.32 L1004.44 140.25 L1006.51 141.19 L1008.59 142.15 L1010.67 143.12 L1012.76 144.11 L1014.85 145.1 L1016.96 146.11 L1019.06 147.13 L1021.18 148.16 L1023.3 149.2M716 246 L716.09 244.48 L716.19 242.96 L716.3 241.44 L716.43 239.91 L716.57 238.4 L716.72 236.88 L716.88 235.36 L717.05 233.84 L717.24 232.33 L717.43 230.81 L717.64 229.3 L717.86 227.78 L718.1 226.27 L718.34 224.76 L718.59 223.25 L718.86 221.74 L719.14 220.23 L719.43 218.73 L719.73 217.22 L720.04 215.72 L720.36 214.21 L720.69 212.71 L721.04 211.21 L721.39 209.71 L721.76 208.21 L722.14 206.72 L722.52 205.22 L722.92 203.73 L723.33 202.24 L723.75 200.75 L724.18 199.26 L724.61 197.77 L725.06 196.29 L725.52 194.8 L725.99 193.32 L726.47 191.84 L726.96 190.36 L727.45 188.89 L727.96 187.41 L728.47 185.94 L729 184.47 L729.53 183.01 L730.07 181.54 L730.62 180.08 L731.18 178.62 L731.75 177.16 L732.32 175.71 L732.91 174.25 L733.5 172.81 L734.1 171.36 L734.7 169.92 L735.32 168.48 L735.93 167.04 L736.56 165.6 L737.19 164.17 L737.83 162.75 L738.48 161.32 L739.13 159.9 L739.79 158.49 L740.45 157.08 L741.11 155.67 L741.78 154.27 L742.46 152.87 L743.14 151.47 L743.82 150.08 L744.51 148.7 L745.2 147.32 L745.89 145.94 L746.59 144.58 L747.28 143.21 L747.98 141.85 L748.68 140.5 L749.38 139.16 L750.08 137.82 L750.78 136.49 L751.48 135.16 L752.17 133.84 L752.87 132.53 L753.56 131.23 L754.25 129.94 L754.94 128.65 L755.62 127.37 L756.29 126.11 L756.96 124.85 L757.63 123.6 L758.28 122.36 L758.93 121.13 L759.57 119.92 L760.19 118.71 L760.81 117.52 L761.42 116.34 L762.01 115.17 L762.58 114.01 L763.14 112.87 L763.69 111.75 L764.21 110.64 L764.72 109.54 L765.2 108.46 L765.66 107.4 L766.1 106.36 L766.51 105.33 L766.9 104.33 L767.25 103.34 L767.58 102.38 L767.87 101.44 L768.12 100.52 L768.34 99.62 L768.52 98.75 L768.66 97.9 L768.75 97.08 L768.8 96.28 L768.79 95.51 L768.74 94.78 L768.63 94.07 L768.46 93.39 L768.23 92.75 L767.94 92.13 L767.59 91.55 L767.16 91.01 L766.67 90.5 L766.1 90.03 L765.45 89.59 L764.73 89.19 L763.92 88.83 L763.03 88.51 L762.05 88.24 L760.98 88 L759.81 87.8 L758.56 87.64 L757.21 87.53 L755.76 87.45 L754.21 87.42 L752.56 87.43 L750.81 87.49 L748.96 87.58 L747 87.72 L744.94 87.9 L742.78 88.12 L740.52 88.38 L738.15 88.68 L735.68 89.02 L733.11 89.4 L730.45 89.82 L727.68 90.28 L724.81 90.77 L721.86 91.3 L718.8 91.86 L715.66 92.46 L712.43 93.09 L709.11 93.75 L705.7 94.45 L702.22 95.17 L698.65 95.93 L695.01 96.71 L691.3 97.52 L687.51 98.35 L683.65 99.22 L679.73 100.1M1126.84 101.01 L1128.2 101.94 L1129.61 102.9 L1131.08 103.88 L1132.6 104.87 L1134.16 105.89 L1135.78 106.92 L1137.43 107.98 L1139.13 109.05 L1140.86 110.13 L1142.62 111.24 L1144.43 112.36 L1146.26 113.49 L1148.11 114.64 L1150 115.8"/>
<path stroke="#c2df23" d="M687.4 330 L686.32 328.73 L685.25 327.47 L684.18 326.2 L683.13 324.93 L682.09 323.67 L681.06 322.4 L680.04 321.13 L679.03 319.87 L678.03 318.6 L677.04 317.33 L676.06 316.07 L675.09 314.8 L674.13 313.53 L673.18 312.27 L672.24 311 L671.31 309.74 L670.39 308.47 L669.49 307.21 L668.59 305.94 L667.71 304.68 L666.83 303.41 L665.97 302.15 L665.12 300.89 L664.28 299.62 L663.44 298.36 L662.62 297.1 L661.81 295.84 L661.02 294.58 L660.23 293.32 L659.45 292.07 L658.68 290.81 L657.93 289.55 L657.18 288.3 L656.45 287.04 L655.73 285.79 L655.02 284.54 L654.31 283.29 L653.62 282.04 L652.95 280.79 L652.28 279.54 L651.62 278.3 L650.97 277.05 L650.34 275.81 L649.71 274.57 L649.09 273.32 L648.49 272.09 L647.9 270.85 L647.31 269.61 L646.74 268.38 L646.18 267.15 L645.63 265.91 L645.09 264.69 L644.56 263.46 L644.04 262.23 L643.53 261.01 L643.03 259.79 L642.54 258.57 L642.06 257.35 L641.59 256.14 L641.13 254.92 L640.68 253.71 L640.24 252.5 L639.8 251.3 L639.38 250.1 L638.97 248.89 L638.57 247.7 L638.18 246.5 L637.79 245.31 L637.42 244.12 L637.05 242.93 L636.7 241.75 L636.35 240.56 L636.01 239.39 L635.68 238.21 L635.36 237.04 L635.05 235.87 L634.74 234.7 L634.44 233.54 L634.15 232.38 L633.87 231.23 L633.6 230.07 L633.33 228.92 L633.07 227.78 L632.82 226.64 L632.57 225.5 L632.33 224.37 L632.1 223.24 L631.88 222.12 L631.66 221 L631.44 219.88 L631.23 218.77 L631.03 217.66 L630.84 216.56 L630.64 215.46 L630.46 214.37 L630.27 213.28 L630.1 212.2 L629.92 211.12 L629.75 210.05 L629.59 208.98 L629.43 207.92 L629.27 206.86 L629.11 205.81 L628.96 204.77 L628.81 203.73 L628.66 202.7 L628.51 201.67 L628.37 200.65 L628.22 199.64 L628.08 198.63 L627.93 197.63 L627.79 196.63 L627.65 195.65 L627.5 194.66 L627.36 193.69 L627.21 192.73 L627.07 191.77 L626.92 190.82 L626.76 189.87 L626.61 188.94 L626.45 188.01 L626.29 187.09 L626.13 186.18 L625.96 185.28 L625.78 184.38 L625.6 183.5M726.4 318.4 L726.6 316.79 L726.82 315.17 L727.05 313.56 L727.3 311.94 L727.56 310.33 L727.83 308.72 L728.11 307.1 L728.41 305.49 L728.72 303.87 L729.04 302.26 L729.37 300.65 L729.72 299.03 L730.08 297.42 L730.46 295.81 L730.84 294.19 L731.24 292.58 L731.66 290.96 L732.08 289.35 L732.52 287.74 L732.97 286.12 L733.43 284.51 L733.91 282.9 L734.4 281.28 L734.9 279.67 L735.41 278.06 L735.94 276.44 L736.48 274.83 L737.03 273.22 L737.59 271.6 L738.17 269.99 L738.76 268.38 L739.36 266.76 L739.97 265.15 L740.59 263.54 L741.23 261.93 L741.88 260.31 L742.54 258.7 L743.21 257.09 L743.9 255.47 L744.59 253.86 L745.3 252.25 L746.02 250.64 L746.75 249.02 L747.49 247.41 L748.25 245.8 L749.01 244.19 L749.79 242.58 L750.58 240.96 L751.38 239.35 L752.19 237.74 L753.01 236.13 L753.84 234.52 L754.69 232.91 L755.54 231.3 L756.41 229.68 L757.29 228.07 L758.17 226.46 L759.07 224.85 L759.98 223.24 L760.9 221.63 L761.83 220.02 L762.77 218.41 L763.72 216.8 L764.68 215.19 L765.65 213.58 L766.64 211.97 L767.63 210.36 L768.63 208.75 L769.64 207.14 L770.66 205.53 L771.69 203.93 L772.73 202.32 L773.78 200.71 L774.84 199.1 L775.91 197.49 L776.99 195.89 L778.07 194.28 L779.17 192.67 L780.27 191.06 L781.39 189.46 L782.51 187.85 L783.64 186.24 L784.78 184.64 L785.93 183.03 L787.09 181.43 L788.25 179.82 L789.43 178.22 L790.61 176.61 L791.8 175.01 L793 173.41 L794.2 171.8 L795.42 170.2 L796.64 168.6 L797.87 166.99 L799.1 165.39 L800.35 163.79 L801.6 162.19 L802.85 160.59 L804.12 158.99 L805.39 157.39 L806.67 155.79 L807.96 154.19 L809.25 152.6 L810.55 151 L811.85 149.4 L813.16 147.81 L814.48 146.21 L815.8 144.62 L817.13 143.02 L818.47 141.43 L819.81 139.84 L821.15 138.24 L822.5 136.65 L823.86 135.06 L825.22 133.47 L826.59 131.89 L827.96 130.3 L829.33 128.71 L830.71 127.13 L832.1 125.54 L833.49 123.96 L834.88 122.38 L836.28 120.8 L837.68 119.22 L839.09 117.64 L840.49 116.07 L841.91 114.49 L843.32 112.92 L844.74 111.35 L846.16 109.78 L847.58 108.22 L849.01 106.65 L850.44 105.09 L851.87 103.53 L853.3 101.97 L854.73 100.42 L856.17 98.87 L857.6 97.32 L859.04 95.78 L860.48 94.23 L861.92 92.7 L863.36 91.16 L864.8 89.64 L866.24 88.11 L867.67 86.59 L869.11 85.08 L870.55 83.57 L871.98 82.07 L873.42 80.58 L874.85 79.09 L876.28 77.61 L877.7 76.14 L879.12 74.69 L880.54 73.24 L881.96 71.8 L883.36 70.38 L884.77 68.97 L886.17 67.58 L887.56 66.2 L888.95 64.85 L890.33 63.51 L891.7 62.2 L893.06 60.92 L894.42 59.67 L895.77 58.45 L897.11 57.27 L898.44 56.14 L899.77 55.05 L901.09 54.01 L902.41 53.04 L903.73 52.14 L905.06 51.31 L906.39 50.56 L907.74 49.9 L909.12 49.35 L910.52 48.9 L911.98 48.57 L913.48 48.35 L915.05 48.26 L916.7 48.3"/>
</g>
<g fill="none" stroke-width="1.5">
<path stroke="#808080" d="M642.5 128.3L668.3 114.7M731.7 110L747.5 103.3M734 138.3L768.9 117.8M718.3 102.2L728.9 98.3M800 62.5L816 55M867.8 67.8L875.6 81.1M893.3 98.3L909.2 113.3M915 73.3L925 80.8M920 42.5L942.5 53.3M986.7 55L969.2 50.8M987.5 67L982.5 70M886.7 140L905.8 133.3M864 125.3L870.8 124.2M1051.5 75.8L1043 74M915 179L930 178.3M484 183.3L483.5 176M1095.8 124.2L1102.5 116.7M1251.3 150L1234.2 143.8"/>
<path stroke="#2d708e" d="M604.4 131.1 L607.41 129.67 L610.43 128.25 L613.45 126.83 L616.48 125.41 L619.51 124 L622.54 122.6 L625.58 121.19 L628.62 119.8 L631.66 118.41 L634.7 117.02 L637.74 115.64 L640.77 114.27 L643.81 112.9 L646.83 111.55M766.7 72.8 L770.39 71.5 L774.09 70.2 L777.8 68.9M833.9 108.3 L834.91 108.91 L835.91 109.54 L836.89 110.2 L837.85 110.88 L838.79 111.59 L839.72 112.32 L840.63 113.07 L841.53 113.84 L842.42 114.63 L843.3 115.45 L844.16 116.28 L845.02 117.14 L845.86 118.01 L846.7 118.9M878.3 66.7 L879.11 67.49 L879.9 68.31 L880.67 69.18 L881.42 70.07 L882.16 71 L882.89 71.96 L883.6 72.95 L884.31 73.96 L885 75M930.8 71.7 L931.39 73.19 L931.99 74.69 L932.58 76.18 L933.17 77.68 L933.76 79.18 L934.35 80.68 L934.94 82.18 L935.53 83.69 L936.12 85.19 L936.7 86.7M958.2 57.8 L959.2 58.3M960.3 66.5 L960.54 67.24 L960.8 68"/>
<path stroke="#38588c" d="M980 108.3 L981.68 108.45 L983.38 108.63 L985.1 108.83 L986.86 109.06 L988.63 109.32 L990.44 109.61 L992.27 109.92 L994.12 110.25 L996 110.62 L997.91 111 L999.84 111.42 L1001.8 111.85 L1003.79 112.32 L1005.8 112.8M956.7 77.5 L958.21 77.57 L959.76 77.67 L961.36 77.82 L963 78M816.2 121 L816 119.99 L815.8 119M868 53 L867.99 52.26 L867.93 51.56 L867.8 50.9"/>
<path stroke="#2ab07f" d="M1005.02 60.2 L1002.06 59.68 L999.28 59.22 L996.68 58.82 L994.26 58.48 L992.04 58.21 L990 58M1290.5 162.6 L1288.12 162"/>
<path stroke="#86d549" d="M557.5 163.3 L554.8 163.89 L552.08 164.5 L549.33 165.12 L546.56 165.75 L543.78 166.39 L540.96 167.05 L538.13 167.72 L535.28 168.4 L532.41 169.09 L529.53 169.79 L526.62 170.5 L523.7 171.23 L520.75 171.96 L517.8 172.71 L514.82 173.47 L511.83 174.24 L508.83 175.01 L505.81 175.8 L502.78 176.6 L499.74 177.41 L496.68 178.22 L493.62 179.05 L490.54 179.89 L487.45 180.73 L484.35 181.59 L481.24 182.45 L478.12 183.32 L475 184.2M585 144.2 L581.91 144.89 L578.78 145.59 L575.62 146.31 L572.43 147.05 L569.21 147.8 L565.96 148.57 L562.68 149.35 L559.38 150.14 L556.04 150.95 L552.68 151.77 L549.3 152.6 L545.89 153.45 L542.46 154.31 L539.01 155.19 L535.54 156.07 L532.04 156.97 L528.53 157.88 L525 158.8M761.1 81.7 L759.35 81.78 L757.5 81.9 L755.53 82.06 L753.46 82.27 L751.28 82.51 L748.99 82.8 L746.59 83.13 L744.08 83.5 L741.47 83.9 L738.75 84.35 L735.94 84.83 L733.02 85.35 L730 85.9M715.5 182.5 L715.6 181.27 L715.7 180.04 L715.8 178.82 L715.91 177.61 L716.02 176.4 L716.13 175.19 L716.24 174 L716.36 172.81 L716.47 171.62 L716.59 170.44 L716.7 169.27 L716.82 168.11 L716.94 166.95 L717.05 165.8 L717.17 164.65 L717.28 163.52 L717.39 162.39 L717.5 161.27 L717.61 160.16 L717.71 159.06 L717.81 157.96 L717.91 156.88 L718 155.8M765.6 126.1 L766.36 124.85 L767.13 123.6 L767.89 122.37 L768.64 121.13 L769.4 119.91 L770.15 118.69 L770.89 117.48 L771.64 116.28 L772.37 115.09 L773.1 113.9M831.1 96.7 L832.69 95.1 L834.29 93.5 L835.9 91.9M888.3 140 L889.7 139.63 L891.1 139.27 L892.5 138.93 L893.9 138.61 L895.3 138.3 L896.7 138M1023.3 149.2 L1025.04 150.11 L1026.77 151.02 L1028.51 151.94 L1030.26 152.87 L1032 153.8M1150 115.8 L1151.93 116.97 L1153.89 118.15 L1155.86 119.34 L1157.85 120.54 L1159.85 121.75 L1161.87 122.98 L1163.9 124.21 L1165.95 125.45 L1168 126.7"/>
<path stroke="#c2df23" d="M625.6 183.5 L625.49 182.62 L625.37 181.74 L625.25 180.88 L625.12 180.02 L624.99 179.17 L624.85 178.33 L624.7 177.5M916.7 48.3 L918.37 48.41 L920.13 48.63 L921.99 48.97 L923.94 49.42 L926 49.97 L928.16 50.62 L930.41 51.36 L932.76 52.18 L935.19 53.07 L937.71 54.03 L940.3 55.04 L942.96 56.11 L945.69 57.22 L948.47 58.38 L951.31 59.57 L954.2 60.8"/>
</g>
<path fill="#ff6347" d="M473.9 183.1h2.2v2.2h-2.2zM523.9 157.7h2.2v2.2h-2.2zM728.9 84.8h2.2v2.2h-2.2zM716.9 154.7h2.2v2.2h-2.2zM772 112.8h2.2v2.2h-2.2zM834.8 90.8h2.2v2.2h-2.2zM895.6 136.9h2.2v2.2h-2.2zM1030.9 152.7h2.2v2.2h-2.2zM1166.9 125.6h2.2v2.2h-2.2zM1152.53 109.09h2.2v2.2h-2.2zM776.7 67.8h2.2v2.2h-2.2zM845.6 117.8h2.2v2.2h-2.2zM883.9 73.9h2.2v2.2h-2.2zM935.6 85.6h2.2v2.2h-2.2zM958.1 57.2h2.2v2.2h-2.2zM959.7 66.9h2.2v2.2h-2.2zM1004.7 111.7h2.2v2.2h-2.2zM961.9 76.9h2.2v2.2h-2.2zM814.7 117.9h2.2v2.2h-2.2zM866.7 49.8h2.2v2.2h-2.2zM988.9 56.9h2.2v2.2h-2.2zM1287.02 160.9h2.2v2.2h-2.2zM623.6 176.4h2.2v2.2h-2.2zM953.1 59.7h2.2v2.2h-2.2z"/>
<g fill="none" stroke-width="2.083">
<path stroke="#2d708e" d="M419.66 246.28 L421.98 244.15 L424.53 242.03 L427.3 239.94 L430.26 237.88 L433.39 235.87 L436.66 233.94 L440.03 232.09 L443.47 230.34 L446.95 228.71 L450.43 227.21 L453.87 225.85 L457.23 224.64 L460.48 223.6 L463.59 222.74 L466.53 222.06 L469.26 221.57 L471.77 221.28 L474.02 221.18 L476.01 221.28 L477.72 221.57 L479.14 222.06 L480.26 222.74 L481.08 223.6 L481.61 224.64 L481.84 225.85 L481.78 227.21 L481.46 228.71 L480.87 230.34 L480.03 232.09 L478.95 233.94 L477.66 235.87 L476.17 237.88 L474.5 239.94 L472.65 242.03 L470.66 244.15 L468.54 246.28 L466.29 248.39 L463.95 250.48 L461.51 252.53 L459.01 254.52 L456.44 256.44 L453.83 258.28 L451.18 260.02 L448.52 261.66 L445.84 263.17 L443.17 264.56 L440.51 265.8 L437.88 266.9 L435.29 267.84 L432.75 268.62 L430.28 269.23 L427.89 269.67 L425.59 269.94 L423.4 270.02 L421.34 269.94 L419.43 269.67 L417.67 269.23 L416.08 268.62 L414.69 267.84 L413.5 266.9 L412.54 265.8 L411.82 264.56 L411.34 263.17 L411.13 261.66 L411.2 260.02 L411.55 258.28 L412.18 256.44 L413.11 254.52 L414.32 252.53 L415.83 250.48 L417.61 248.39Z"/>
<path stroke="#2ab07f" d="M516.47 314.85 L516.71 312.72 L517.18 310.62 L517.88 308.54 L518.8 306.51 L519.92 304.54 L521.24 302.65 L522.73 300.85 L524.39 299.16 L526.19 297.58 L528.12 296.13 L530.15 294.83 L532.25 293.68 L534.42 292.68 L536.63 291.86 L538.85 291.22 L541.06 290.75 L543.26 290.47 L545.41 290.38 L547.5 290.47 L549.52 290.75 L551.46 291.22 L553.29 291.86 L555.02 292.68 L556.63 293.68 L558.11 294.83 L559.46 296.13 L560.68 297.58 L561.77 299.16 L562.71 300.85 L563.51 302.65 L564.17 304.54 L564.68 306.51 L565.05 308.54 L565.28 310.62 L565.37 312.72 L565.32 314.85 L565.13 316.97 L564.8 319.08 L564.33 321.15 L563.72 323.17 L562.98 325.14 L562.1 327.02 L561.09 328.81 L559.95 330.5 L558.69 332.07 L557.3 333.51 L555.8 334.8 L554.18 335.95 L552.45 336.93 L550.63 337.75 L548.72 338.39 L546.73 338.85 L544.68 339.13 L542.58 339.22 L540.43 339.13 L538.27 338.85 L536.11 338.39 L533.97 337.75 L531.86 336.93 L529.81 335.95 L527.83 334.8 L525.96 333.51 L524.2 332.07 L522.58 330.5 L521.12 328.81 L519.83 327.02 L518.73 325.14 L517.83 323.17 L517.15 321.15 L516.7 319.08 L516.47 316.97Z"/>
<path stroke="#86d549" d="M698.97 244.4 L699.96 242.27 L701.15 240.15 L702.54 238.05 L704.11 235.99 L705.85 233.99 L707.76 232.05 L709.8 230.2 L711.95 228.45 L714.21 226.82 L716.55 225.32 L718.94 223.95 L721.36 222.75 L723.79 221.71 L726.22 220.84 L728.61 220.16 L730.95 219.67 L733.21 219.38 L735.39 219.28 L737.46 219.38 L739.41 219.67 L741.22 220.16 L742.88 220.84 L744.39 221.71 L745.74 222.75 L746.91 223.95 L747.9 225.32 L748.72 226.82 L749.35 228.45 L749.79 230.2 L750.05 232.05 L750.13 233.99 L750.02 235.99 L749.74 238.05 L749.28 240.15 L748.65 242.27 L747.85 244.4 L746.89 246.51 L745.78 248.6 L744.52 250.64 L743.13 252.64 L741.61 254.56 L739.96 256.39 L738.21 258.14 L736.36 259.77 L734.42 261.28 L732.4 262.66 L730.31 263.91 L728.18 265 L726.01 265.94 L723.81 266.72 L721.6 267.33 L719.4 267.77 L717.21 268.04 L715.07 268.12 L712.97 268.04 L710.94 267.77 L708.99 267.33 L707.14 266.72 L705.41 265.94 L703.81 265 L702.35 263.91 L701.05 262.66 L699.92 261.28 L698.97 259.77 L698.22 258.14 L697.68 256.39 L697.34 254.56 L697.23 252.64 L697.33 250.64 L697.66 248.6 L698.21 246.51Z"/>
<path stroke="#38588c" d="M815.11 211.07 L815.68 208.95 L816.44 206.83 L817.39 204.72 L818.53 202.64 L819.84 200.62 L821.3 198.66 L822.92 196.78 L824.67 195 L826.54 193.33 L828.5 191.79 L830.56 190.4 L832.68 189.16 L834.85 188.09 L837.05 187.2 L839.27 186.49 L841.48 185.99 L843.67 185.68 L845.82 185.58 L847.91 185.68 L849.94 185.99 L851.88 186.49 L853.72 187.2 L855.45 188.09 L857.06 189.16 L858.54 190.4 L859.88 191.79 L861.06 193.33 L862.08 195 L862.94 196.78 L863.63 198.66 L864.14 200.62 L864.48 202.64 L864.63 204.72 L864.61 206.83 L864.4 208.95 L864.01 211.07 L863.45 213.18 L862.72 215.25 L861.82 217.28 L860.76 219.25 L859.55 221.15 L858.19 222.96 L856.69 224.67 L855.08 226.27 L853.35 227.75 L851.51 229.11 L849.59 230.32 L847.59 231.39 L845.54 232.3 L843.43 233.06 L841.3 233.65 L839.14 234.08 L836.99 234.34 L834.85 234.42 L832.75 234.34 L830.68 234.08 L828.69 233.65 L826.77 233.06 L824.94 232.3 L823.22 231.39 L821.62 230.32 L820.16 229.11 L818.84 227.75 L817.68 226.27 L816.69 224.67 L815.88 222.96 L815.26 221.15 L814.83 219.25 L814.6 217.28 L814.57 215.25 L814.73 213.18Z"/>
<path stroke="#c2df23" d="M678.78 315.84 L678.94 313.72 L679.31 311.61 L679.89 309.53 L680.67 307.5 L681.65 305.53 L682.81 303.64 L684.14 301.84 L685.62 300.15 L687.25 298.57 L689.01 297.13 L690.88 295.83 L692.84 294.67 L694.88 293.68 L696.97 292.86 L699.1 292.22 L701.25 291.75 L703.41 291.47 L705.54 291.38 L707.65 291.47 L709.71 291.75 L711.71 292.22 L713.64 292.86 L715.48 293.68 L717.22 294.67 L718.85 295.83 L720.36 297.13 L721.75 298.57 L723 300.15 L724.11 301.84 L725.08 303.64 L725.9 305.53 L726.56 307.5 L727.06 309.53 L727.41 311.61 L727.6 313.72 L727.62 315.84 L727.49 317.96 L727.19 320.07 L726.74 322.14 L726.12 324.17 L725.36 326.13 L724.44 328.02 L723.38 329.81 L722.18 331.5 L720.84 333.07 L719.38 334.5 L717.8 335.8 L716.11 336.95 L714.32 337.93 L712.43 338.75 L710.47 339.39 L708.45 339.85 L706.37 340.13 L704.26 340.22 L702.13 340.13 L699.99 339.85 L697.87 339.39 L695.77 338.75 L693.72 337.93 L691.74 336.95 L689.84 335.8 L688.04 334.5 L686.35 333.07 L684.8 331.5 L683.4 329.81 L682.17 328.02 L681.11 326.13 L680.24 324.17 L679.56 322.14 L679.09 320.07 L678.83 317.96Z"/>
</g>
<path fill="none" stroke="#ff0000" stroke-width="1.4" d="M707.7 242.8h6.2M710.8 239.7v6.2M713.2 237.5h6.2M716.3 234.4v6.2M718.2 238.3h6.2M721.3 235.2v6.2M714.4 244.2h6.2M717.5 241.1v6.2M716.6 248.3h6.2M719.7 245.2v6.2M728.6 241.7h6.2M731.7 238.6v6.2M710.4 240.5h6.2M713.5 237.4v6.2M715.4 241h6.2M718.5 237.9v6.2M712.9 246h6.2M716 242.9v6.2M426.1 245.3h6.2M429.2 242.2v6.2M426.7 249.3h6.2M429.8 246.2v6.2M438.4 245h6.2M441.5 241.9v6.2M442.4 246.5h6.2M445.5 243.4v6.2M463.7 242.7h6.2M466.8 239.6v6.2M470.9 241h6.2M474 237.9v6.2M440.9 244h6.2M444 240.9v6.2M821.9 209.7h6.2M825 206.6v6.2M835.6 211.7h6.2M838.7 208.6v6.2M846.1 210.5h6.2M849.2 207.4v6.2M840.9 212h6.2M844 208.9v6.2M529.3 317h6.2M532.4 313.9v6.2M528.3 323.6h6.2M531.4 320.5v6.2M684.3 330h6.2M687.4 326.9v6.2M723.3 318.4h6.2M726.4 315.3v6.2"/>
<g font-family="'DejaVu Sans','Liberation Sans',sans-serif" font-size="10.7" fill="#fff" text-anchor="middle">
<text x="444.7" y="249.3">LEO</text>
<text x="540.8" y="318.5">AMO</text>
<text x="723.6" y="247.4">NTA</text>
<text x="839.7" y="213.7">AND</text>
<text x="703.1" y="319.5">OER</text>
</g>
<g font-family="'DejaVu Sans','Liberation Sans',sans-serif" font-size="9.72" fill="#8c8c8c" text-anchor="middle">
<text x="316.63" y="330.1">+180<tspan font-size="7.6" dx="2.0" dy="-3.6">°</tspan></text>
<text x="414.32" y="330.1">+150<tspan font-size="7.6" dx="2.0" dy="-3.6">°</tspan></text>
<text x="512.02" y="330.1">+120<tspan font-size="7.6" dx="2.0" dy="-3.6">°</tspan></text>
<text x="609.71" y="330.1">+90<tspan font-size="7.6" dx="2.0" dy="-3.6">°</tspan></text>
<text x="707.41" y="330.1">+60<tspan font-size="7.6" dx="2.0" dy="-3.6">°</tspan></text>
<text x="805.11" y="330.1">+30<tspan font-size="7.6" dx="2.0" dy="-3.6">°</tspan></text>
<text x="902.8" y="330.1">+0<tspan font-size="7.6" dx="2.0" dy="-3.6">°</tspan></text>
<text x="1000.49" y="330.1">+330<tspan font-size="7.6" dx="2.0" dy="-3.6">°</tspan></text>
<text x="1098.19" y="330.1">+300<tspan font-size="7.6" dx="2.0" dy="-3.6">°</tspan></text>
<text x="1195.88" y="330.1">+270<tspan font-size="7.6" dx="2.0" dy="-3.6">°</tspan></text>
<text x="1293.58" y="330.1">+240<tspan font-size="7.6" dx="2.0" dy="-3.6">°</tspan></text>
<text x="1391.27" y="330.1">+210<tspan font-size="7.6" dx="2.0" dy="-3.6">°</tspan></text>
<text x="1488.97" y="330.1">+180<tspan font-size="7.6" dx="2.0" dy="-3.6">°</tspan></text>
<text x="902.8" y="24.71">+90<tspan font-size="7.6" dx="2.0" dy="-3.6">°</tspan></text>
<text x="902.8" y="122.41">+60<tspan font-size="7.6" dx="2.0" dy="-3.6">°</tspan></text>
<text x="902.8" y="220.1">+30<tspan font-size="7.6" dx="2.0" dy="-3.6">°</tspan></text>
<text x="902.8" y="427.79">−30<tspan font-size="7.6" dx="2.0" dy="-3.6">°</tspan></text>
<text x="902.8" y="525.49">−60<tspan font-size="7.6" dx="2.0" dy="-3.6">°</tspan></text>
<text x="902.8" y="623.18">−90<tspan font-size="7.6" dx="2.0" dy="-3.6">°</tspan></text>
</g>
<g font-family="'DejaVu Sans Mono','Liberation Mono',monospace" font-size="13.89" fill="#ffffff" xml:space="preserve">
<text x="316" y="29.9">IL0002</text>
<text x="316" y="43">Beg: 20251114 16:52:31 (sol = 232.21°)</text>
<text x="316" y="56.8">End: 20251115 02:35:58 (sol = 232.62°)</text>
<text x="316" y="69.4">--------------------------------------</text>
<text x="316" y="81.9">...: 21</text>
<text x="316" y="94.9">NTA: 9</text>
<text x="316" y="108">LEO: 7</text>
<text x="316" y="121.7">AND: 4</text>
<text x="316" y="134.8">AMO: 2</text>
<text x="316" y="147.9">OER: 2</text>
</g>
<g font-family="'DejaVu Sans','Liberation Sans',sans-serif" font-size="27" fill="#555555">
<text transform="translate(148.7 696.9) rotate(-90) scale(1,1.06)">APR</text>
<text transform="translate(295.1 702.5) rotate(-90) scale(1,1.06)">MAY</text>
<text transform="translate(436.5 688) rotate(-90) scale(1,1.06)">JUN</text>
<text transform="translate(577.1 684.1) rotate(-90) scale(1,1.06)">JUL</text>
<text transform="translate(724.5 700.6) rotate(-90) scale(1,1.06)">AUG</text>
<text transform="translate(872.3 694.5) rotate(-90) scale(1,1.06)">SEP</text>
<text transform="translate(1018.1 700.6) rotate(-90) scale(1,1.06)">OCT</text>
<text transform="translate(1170.3 705) rotate(-90) scale(1,1.06)">NOV</text>
<text transform="translate(1318.9 701.7) rotate(-90) scale(1,1.06)">DEC</text>
<text transform="translate(1469.3 686.3) rotate(-90) scale(1,1.06)">JAN</text>
<text transform="translate(1628.3 696.7) rotate(-90) scale(1,1.06)">FEB</text>
<text transform="translate(1767.1 706) rotate(-90) scale(1,1.06)">MAR</text>
</g>
<g stroke="#ff0000" stroke-width="1.39" stroke-dasharray="5.14 2.22" fill="none"><path d="M1158.5 842.5 V641.5"/><path d="M1160.5 842.5 V641.5"/></g>
<g stroke="#c2df23" stroke-width="4.17" fill="none">
<path d="M106.17 834 H129.94"/>
<path d="M165 834 H345.66"/>
<path d="M366.02 834 H625.12"/>
<path d="M635.67 834 H786.91"/>
<path d="M807.27 834 H899.68"/>
<path d="M920.03 834 H973.22"/>
<path d="M983.77 834 H1066.37"/>
<path d="M1081.82 834 H1203.65"/>
<path d="M1243.61 834 H1326.22"/>
<path d="M1336.77 834 H1355.64"/>
<path d="M1380.89 834 H1443.89"/>
<path d="M1459.34 834 H1512.52"/>
<path d="M1523.07 834 H1546.84"/>
<path d="M1724.09 834 H1747.86"/>
<path d="M1758.41 834 H1782.18"/>
</g>
<g stroke="#86d549" stroke-width="4.17" fill="none">
<path d="M165 818 H188.77"/>
<path d="M223.84 818 H286.83"/>
<path d="M312.09 818 H340.76"/>
<path d="M366.02 818 H492.75"/>
<path d="M508.2 818 H654.54"/>
<path d="M704.31 818 H737.89"/>
<path d="M772.95 818 H845.75"/>
<path d="M871 818 H987.93"/>
<path d="M1003.38 818 H1017.34"/>
<path d="M1062.21 818 H1213.45"/>
<path d="M1243.61 818 H1267.39"/>
<path d="M1292.64 818 H1316.41"/>
<path d="M1341.67 818 H1365.44"/>
<path d="M1385.8 818 H1429.18"/>
<path d="M1459.34 818 H1483.11"/>
<path d="M1547.59 818 H1571.36"/>
</g>
<g stroke="#52c569" stroke-width="4.17" fill="none">
<path d="M165 802 H188.77"/>
<path d="M258.16 802 H487.84"/>
<path d="M508.2 802 H615.32"/>
<path d="M625.86 802 H718.27"/>
<path d="M728.82 802 H826.14"/>
<path d="M949.45 802 H1149.72"/>
<path d="M1160.27 802 H1247.77"/>
<path d="M1258.32 802 H1443.89"/>
<path d="M1459.34 802 H1483.11"/>
<path d="M1552.49 802 H1576.26"/>
</g>
<g stroke="#2ab07f" stroke-width="4.17" fill="none">
<path d="M194.42 785 H218.19"/>
<path d="M321.89 785 H507.45"/>
<path d="M518 785 H541.77"/>
<path d="M557.23 785 H683.96"/>
<path d="M807.27 785 H831.04"/>
<path d="M954.35 785 H973.22"/>
<path d="M988.67 785 H1125.2"/>
<path d="M1155.36 785 H1218.36"/>
<path d="M1243.61 785 H1267.39"/>
<path d="M1317.16 785 H1340.93"/>
<path d="M1395.6 785 H1419.37"/>
<path d="M1464.24 785 H1649.8"/>
</g>
<g stroke="#1e9b8a" stroke-width="4.17" fill="none">
<path d="M341.5 769 H370.18"/>
<path d="M410.14 769 H448.62"/>
<path d="M468.98 769 H492.75"/>
<path d="M527.81 769 H546.68"/>
<path d="M562.13 769 H590.8"/>
<path d="M616.06 769 H649.64"/>
<path d="M959.25 769 H987.93"/>
<path d="M1062.21 769 H1085.98"/>
<path d="M1101.43 769 H1125.2"/>
<path d="M1160.27 769 H1193.84"/>
<path d="M1248.52 769 H1272.29"/>
<path d="M1425.02 769 H1512.52"/>
</g>
<g stroke="#25858e" stroke-width="4.17" fill="none">
<path d="M419.95 752 H443.72"/>
<path d="M532.71 752 H556.48"/>
<path d="M567.03 752 H590.8"/>
<path d="M620.96 752 H742.79"/>
<path d="M969.06 752 H1135.01"/>
<path d="M1184.78 752 H1345.83"/>
<path d="M1469.14 752 H1492.91"/>
</g>
<g stroke="#2d708e" stroke-width="4.17" fill="none">
<path d="M429.75 736 H453.52"/>
<path d="M576.84 736 H732.98"/>
<path d="M993.57 736 H1105.59"/>
<path d="M1116.14 736 H1223.26"/>
<path d="M1263.23 736 H1291.9"/>
<path d="M1488.75 736 H1512.52"/>
</g>
<g stroke="#38588c" stroke-width="4.17" fill="none">
<path d="M591.54 720 H615.32"/>
<path d="M655.28 720 H772.21"/>
<path d="M1072.02 720 H1242.87"/>
<path d="M1263.23 720 H1287"/>
</g>
<g stroke="#433e85" stroke-width="4.17" fill="none">
<path d="M596.45 703 H732.98"/>
<path d="M1091.63 703 H1120.3"/>
<path d="M1199.49 703 H1223.26"/>
<path d="M1273.03 703 H1326.22"/>
</g>
<g stroke="#482173" stroke-width="4.17" fill="none">
<path d="M1111.24 687 H1135.01"/>
</g>
<g stroke="#fff" stroke-width="2" fill="none">
<path d="M114 834h8M118 830v8M241 834h8M245 830v8M511 834h8M515 830v8M707 834h8M711 830v8M834 834h8M838 830v8M962 834h8M966 830v8M987 834h8M991 830v8M1117 834h8M1121 830v8M1296 834h8M1300 830v8M1342 834h8M1346 830v8M1413 834h8M1417 830v8M1482 834h8M1486 830v8M1531 834h8M1535 830v8M1732 834h8M1736 830v8M1766 834h8M1770 830v8M173 818h8M177 814v8M256 818h8M260 814v8M324 818h8M328 814v8M438 818h8M442 814v8M599 818h8M603 814v8M717 818h8M721 814v8M794 818h8M798 814v8M940 818h8M944 814v8M1006 818h8M1010 814v8M1153 818h8M1157 814v8M1251 818h8M1255 814v8M1300 818h8M1304 814v8M1350 818h8M1354 814v8M1403 818h8M1407 814v8M1467 818h8M1471 814v8M1555 818h8M1559 814v8M174 802h8M178 798v8M379 802h8M383 798v8M545 802h8M549 798v8M683 802h8M687 798v8M742 802h8M746 798v8M1075 802h8M1079 798v8M1217 802h8M1221 798v8M1305 802h8M1309 798v8M1467 802h8M1471 798v8M1560 802h8M1564 798v8M202 785h8M206 781v8M400 785h8M404 781v8M526 785h8M530 781v8M639 785h8M643 781v8M815 785h8M819 781v8M960 785h8M964 781v8M1041 785h8M1045 781v8M1188 785h8M1192 781v8M1251 785h8M1255 781v8M1325 785h8M1329 781v8M1403 785h8M1407 781v8M1546 785h8M1550 781v8M356 769h8M360 765v8M427 769h8M431 765v8M477 769h8M481 765v8M536 769h8M540 765v8M571 769h8M575 765v8M631 769h8M635 765v8M974 769h8M978 765v8M1070 769h8M1074 765v8M1109 769h8M1113 765v8M1178 769h8M1182 765v8M1256 769h8M1260 765v8M1467 769h8M1471 765v8M428 752h8M432 748v8M540 752h8M544 748v8M575 752h8M579 748v8M704 752h8M708 748v8M1095 752h8M1099 748v8M1271 752h8M1275 748v8M1477 752h8M1481 748v8M438 736h8M442 732v8M631 736h8M635 732v8M1039 736h8M1043 732v8M1168 736h8M1172 732v8M1275 736h8M1279 732v8M1497 736h8M1501 732v8M599 720h8M603 716v8M727 720h8M731 716v8M1188 720h8M1192 716v8M1271 720h8M1275 716v8M688 703h8M692 699v8M1102 703h8M1106 699v8M1207 703h8M1211 699v8M1300 703h8M1304 699v8M1119 687h8M1123 683v8"/>
</g>
<g font-family="'DejaVu Sans','Liberation Sans',sans-serif" font-size="10.7" fill="#fff" text-anchor="middle">
<text x="117.86" y="831.8">KSE</text>
<text x="255.13" y="831.8">ETA</text>
<text x="495.37" y="831.8">NZC</text>
<text x="711.09" y="831.8">NDA</text>
<text x="853.27" y="831.8">SPE</text>
<text x="946.42" y="831.8">ARD</text>
<text x="1024.87" y="831.8">EGE</text>
<text x="1142.54" y="831.8">NTA</text>
<text x="1284.72" y="831.8">MON</text>
<text x="1343.55" y="831.8">URS</text>
<text x="1412.19" y="831.8">AHY</text>
<text x="1485.73" y="831.8">GUM</text>
<text x="1534.76" y="831.8">OHY</text>
<text x="1735.77" y="831.8">XHE</text>
<text x="1770.09" y="831.8">EVI</text>
<text x="176.69" y="815.4">AVB</text>
<text x="255.13" y="815.4">ELY</text>
<text x="323.77" y="815.4">CAM</text>
<text x="431.63" y="815.4">SSG</text>
<text x="578.72" y="815.4">PCA</text>
<text x="720.9" y="815.4">AUD</text>
<text x="809.15" y="815.4">AUR</text>
<text x="931.72" y="815.4">DSX</text>
<text x="1010.16" y="815.4">OCU</text>
<text x="1137.63" y="815.4">OER</text>
<text x="1255.3" y="815.4">DKD</text>
<text x="1304.33" y="815.4">DSV</text>
<text x="1353.36" y="815.4">ALY</text>
<text x="1407.29" y="815.4">JLE</text>
<text x="1471.02" y="815.4">SCC</text>
<text x="1559.27" y="815.4">FEV</text>
<text x="176.69" y="799">LYR</text>
<text x="372.8" y="799">JMC</text>
<text x="559.11" y="799">JPE</text>
<text x="671.87" y="799">PAU</text>
<text x="774.83" y="799">NIA</text>
<text x="1049.38" y="799">STA</text>
<text x="1206.27" y="799">NOO</text>
<text x="1353.36" y="799">COM</text>
<text x="1471.02" y="799">NCC</text>
<text x="1564.17" y="799">FED</text>
<text x="206.11" y="782.6">HVI</text>
<text x="412.02" y="782.6">ARI</text>
<text x="529.69" y="782.6">SZC</text>
<text x="617.94" y="782.6">CAP</text>
<text x="818.95" y="782.6">NUE</text>
<text x="961.13" y="782.6">OCT</text>
<text x="1059.19" y="782.6">ORI</text>
<text x="1186.66" y="782.6">AMO</text>
<text x="1255.3" y="782.6">DPC</text>
<text x="1328.84" y="782.6">XVI</text>
<text x="1407.29" y="782.6">QUA</text>
<text x="1559.27" y="782.6">AAN</text>
<text x="353.19" y="766.2">TAH</text>
<text x="431.63" y="766.2">JEA</text>
<text x="480.66" y="766.2">JIP</text>
<text x="539.49" y="766.2">PPS</text>
<text x="578.72" y="766.2">ZCS</text>
<text x="632.65" y="766.2">GDR</text>
<text x="970.94" y="766.2">DRA</text>
<text x="1073.9" y="766.2">LUM</text>
<text x="1113.12" y="766.2">RPU</text>
<text x="1176.86" y="766.2">THA</text>
<text x="1260.2" y="766.2">PSU</text>
<text x="1471.02" y="766.2">XCB</text>
<text x="431.63" y="749.8">JRC</text>
<text x="544.4" y="749.8">CAN</text>
<text x="578.72" y="749.8">FAN</text>
<text x="681.67" y="749.8">PER</text>
<text x="1049.38" y="749.8">CTA</text>
<text x="1265.11" y="749.8">HYD</text>
<text x="1480.83" y="749.8">XUM</text>
<text x="441.44" y="733.4">COR</text>
<text x="657.16" y="733.4">SDA</text>
<text x="1049.38" y="733.4">LMI</text>
<text x="1167.05" y="733.4">LEO</text>
<text x="1274.91" y="733.4">EHY</text>
<text x="1500.44" y="733.4">ECV</text>
<text x="603.23" y="717">JXA</text>
<text x="715.99" y="717">KCG</text>
<text x="1157.24" y="717">AND</text>
<text x="1274.91" y="717">DAD</text>
<text x="666.97" y="700.6">ERI</text>
<text x="1108.22" y="700.6">SLD</text>
<text x="1211.17" y="700.6">ORS</text>
<text x="1299.42" y="700.6">GEM</text>
<text x="1122.92" y="684.2">KUM</text>
</g>
<g stroke="#ffffff" stroke-opacity="0.4" stroke-width="2" stroke-dasharray="2.083 3.437" fill="none">
<path d="M75 842.5 V641.5"/>
<path d="M219 842.5 V641.5"/>
<path d="M365 842.5 V641.5"/>
<path d="M506 842.5 V641.5"/>
<path d="M651 842.5 V641.5"/>
<path d="M797 842.5 V641.5"/>
<path d="M940 842.5 V641.5"/>
<path d="M1091 842.5 V641.5"/>
<path d="M1239 842.5 V641.5"/>
<path d="M1394 842.5 V641.5"/>
<path d="M1548 842.5 V641.5"/>
<path d="M1687 842.5 V641.5"/>
</g>
<rect x="20.5" y="641.5" width="1765" height="201" fill="none" stroke="#fff" stroke-width="1"/>
<g stroke="#fff" stroke-width="1">
<path d="M20.5 842.5 v5.4"/>
<path d="M265.5 842.5 v5.4"/>
<path d="M510.5 842.5 v5.4"/>
<path d="M755.5 842.5 v5.4"/>
<path d="M1000.5 842.5 v5.4"/>
<path d="M1245.5 842.5 v5.4"/>
<path d="M1490.5 842.5 v5.4"/>
<path d="M1735.5 842.5 v5.4"/>
</g>
<g font-family="'DejaVu Sans','Liberation Sans',sans-serif" font-size="13.89" fill="#fff" text-anchor="middle">
<text x="20.2" y="862">0</text>
<text x="265.34" y="862">50</text>
<text x="510.48" y="862">100</text>
<text x="755.62" y="862">150</text>
<text x="1000.76" y="862">200</text>
<text x="1245.89" y="862">250</text>
<text x="1491.03" y="862">300</text>
<text x="1736.17" y="862">350</text>
<text x="902.8" y="882">Solar longitude (deg)</text>
</g>
</svg></body></html>
